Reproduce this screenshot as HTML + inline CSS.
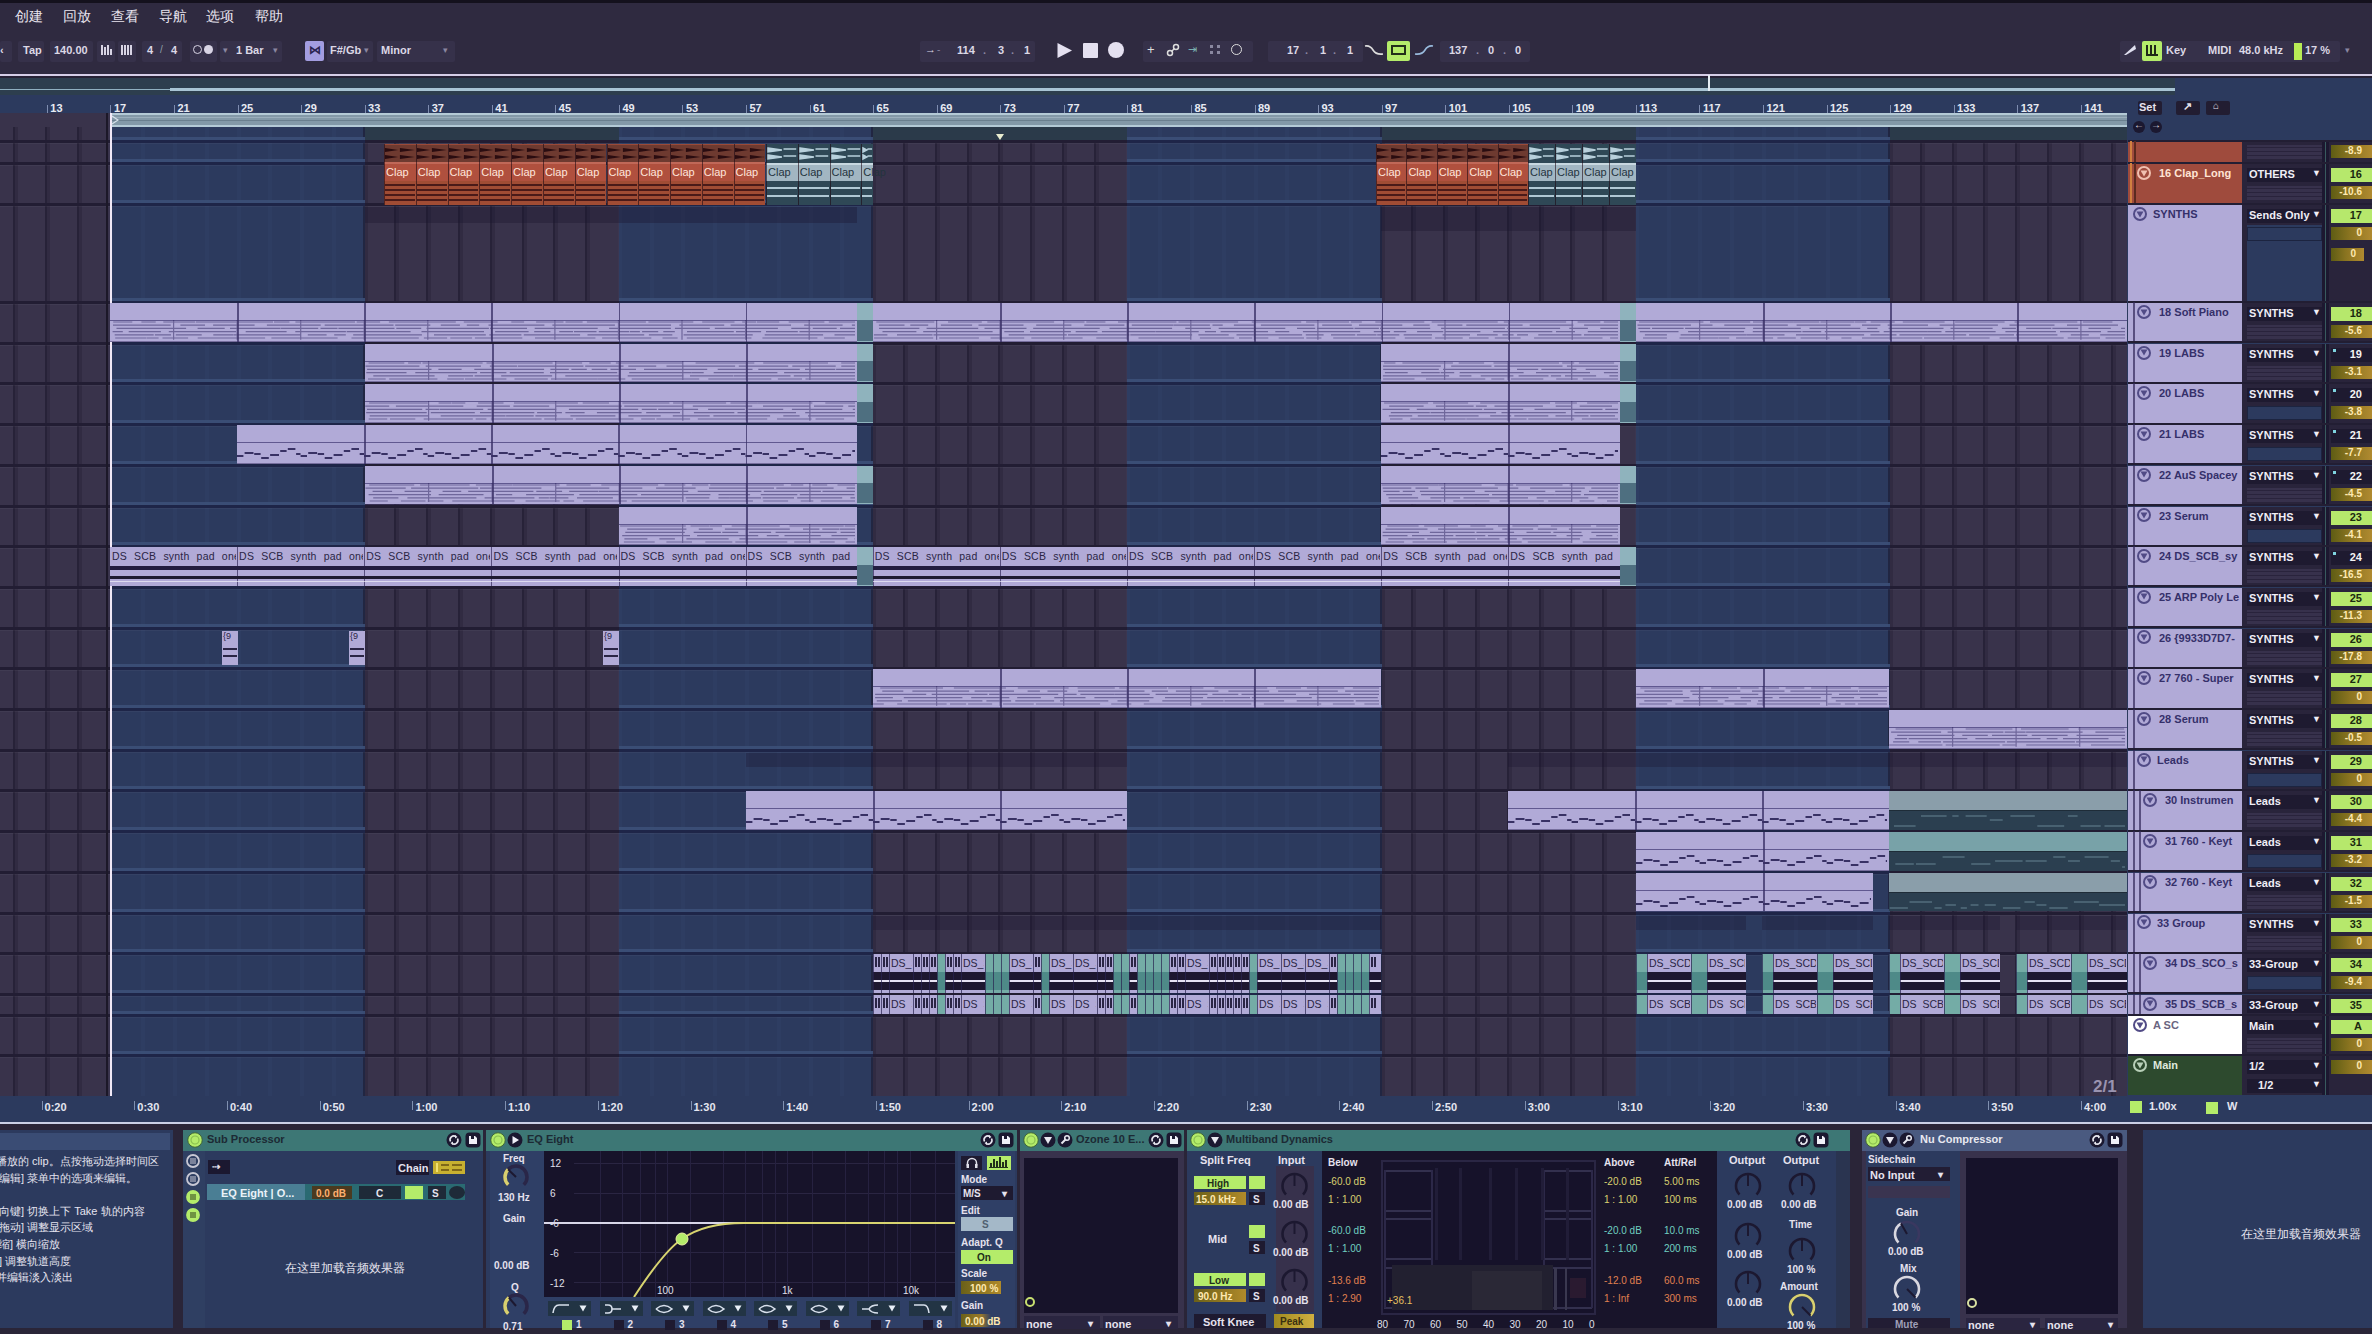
<!DOCTYPE html><html><head><meta charset="utf-8"><style>
html,body{margin:0;padding:0;width:2372px;height:1334px;overflow:hidden;background:#2f2a40;}
body{position:relative;font-family:"Liberation Sans",sans-serif;}
body div{position:absolute;box-sizing:border-box;}
.t{white-space:nowrap;line-height:1;}
svg{position:absolute}
</style></head><body>
<div style="left:0.0px;top:0.0px;width:2372.0px;height:3.0px;background:#14111d;"></div>
<div class="t" style="left:15.0px;top:9.0px;font-size:14px;color:#e8e4ee;font-weight:normal;">创建</div>
<div class="t" style="left:63.0px;top:9.0px;font-size:14px;color:#e8e4ee;font-weight:normal;">回放</div>
<div class="t" style="left:111.0px;top:9.0px;font-size:14px;color:#e8e4ee;font-weight:normal;">查看</div>
<div class="t" style="left:159.0px;top:9.0px;font-size:14px;color:#e8e4ee;font-weight:normal;">导航</div>
<div class="t" style="left:206.0px;top:9.0px;font-size:14px;color:#e8e4ee;font-weight:normal;">选项</div>
<div class="t" style="left:255.0px;top:9.0px;font-size:14px;color:#e8e4ee;font-weight:normal;">帮助</div>
<div style="left:0.0px;top:41.0px;width:12.0px;height:21.0px;background:#36314a;border-radius:2px"></div>
<div class="t" style="left:0.0px;top:45.0px;font-size:11px;color:#dcd8e6;font-weight:bold;">‹</div>
<div style="left:18.0px;top:41.0px;width:26.0px;height:21.0px;background:#36314a;border-radius:2px"></div>
<div class="t" style="left:23.0px;top:45.0px;font-size:11px;color:#dcd8e6;font-weight:bold;">Tap</div>
<div style="left:50.0px;top:41.0px;width:43.0px;height:21.0px;background:#36314a;border-radius:2px"></div>
<div class="t" style="left:54.0px;top:45.0px;font-size:11px;color:#dcd8e6;font-weight:bold;">140.00</div>
<div style="left:97.0px;top:41.0px;width:18.0px;height:21.0px;background:#36314a;border-radius:2px"></div>
<div style="left:101.0px;top:45.0px;width:1.6px;height:10.0px;background:#d8d4e4;"></div>
<div style="left:104.0px;top:47.0px;width:1.6px;height:8.0px;background:#d8d4e4;"></div>
<div style="left:107.0px;top:45.0px;width:1.6px;height:10.0px;background:#d8d4e4;"></div>
<div style="left:110.0px;top:49.0px;width:1.6px;height:6.0px;background:#d8d4e4;"></div>
<div style="left:118.0px;top:41.0px;width:18.0px;height:21.0px;background:#36314a;border-radius:2px"></div>
<div style="left:121.0px;top:45.0px;width:1.6px;height:10.0px;background:#d8d4e4;"></div>
<div style="left:124.0px;top:45.0px;width:1.6px;height:10.0px;background:#d8d4e4;"></div>
<div style="left:127.0px;top:45.0px;width:1.6px;height:10.0px;background:#d8d4e4;"></div>
<div style="left:130.0px;top:45.0px;width:1.6px;height:10.0px;background:#d8d4e4;"></div>
<div style="left:142.0px;top:41.0px;width:40.0px;height:21.0px;background:#36314a;border-radius:2px"></div>
<div class="t" style="left:147.0px;top:45.0px;font-size:11px;color:#dcd8e6;font-weight:bold;">4</div>
<div class="t" style="left:160.0px;top:45.0px;font-size:10px;color:#8fa0a8;font-weight:normal;">/</div>
<div class="t" style="left:171.0px;top:45.0px;font-size:11px;color:#dcd8e6;font-weight:bold;">4</div>
<div style="left:190.0px;top:41.0px;width:27.0px;height:21.0px;background:#36314a;border-radius:2px"></div>
<div style="left:193px;top:45px;width:9px;height:9px;border:1.5px solid #d8d4e4;border-radius:50%"></div>
<div style="left:204.0px;top:45.0px;width:9.0px;height:9.0px;background:#d8d4e4;border-radius:50%"></div>
<div style="left:220.0px;top:41.0px;width:62.0px;height:21.0px;background:#36314a;border-radius:2px"></div>
<div class="t" style="left:223.0px;top:46.0px;font-size:9px;color:#8a86a0;font-weight:normal;">▾</div>
<div class="t" style="left:236.0px;top:45.0px;font-size:11px;color:#dcd8e6;font-weight:bold;">1 Bar</div>
<div class="t" style="left:273.0px;top:46.0px;font-size:9px;color:#8a86a0;font-weight:normal;">▾</div>
<div style="left:305.0px;top:41.0px;width:19.0px;height:20.0px;background:#a39de0;border-radius:2px"></div>
<div class="t" style="left:309.0px;top:44.0px;font-size:12px;color:#2a2450;font-weight:bold;">⋈</div>
<div style="left:327.0px;top:41.0px;width:46.0px;height:21.0px;background:#36314a;border-radius:2px"></div>
<div class="t" style="left:330.0px;top:45.0px;font-size:11px;color:#dcd8e6;font-weight:bold;">F#/Gb</div>
<div class="t" style="left:364.0px;top:46.0px;font-size:9px;color:#8a86a0;font-weight:normal;">▾</div>
<div style="left:377.0px;top:41.0px;width:78.0px;height:21.0px;background:#36314a;border-radius:2px"></div>
<div class="t" style="left:381.0px;top:45.0px;font-size:11px;color:#dcd8e6;font-weight:bold;">Minor</div>
<div class="t" style="left:443.0px;top:46.0px;font-size:9px;color:#8a86a0;font-weight:normal;">▾</div>
<div style="left:920.0px;top:41.0px;width:115.0px;height:21.0px;background:#36314a;border-radius:2px"></div>
<div class="t" style="left:925.0px;top:44.0px;font-size:11px;color:#dcd8e6;font-weight:normal;">→</div>
<div class="t" style="left:937.0px;top:45.0px;font-size:10px;color:#8a86a0;font-weight:normal;">-</div>
<div class="t" style="left:957.0px;top:45.0px;font-size:11px;color:#dcd8e6;font-weight:bold;">114</div>
<div class="t" style="left:983.0px;top:45.0px;font-size:11px;color:#8a86a0;font-weight:bold;">.</div>
<div class="t" style="left:998.0px;top:45.0px;font-size:11px;color:#dcd8e6;font-weight:bold;">3</div>
<div class="t" style="left:1011.0px;top:45.0px;font-size:11px;color:#8a86a0;font-weight:bold;">.</div>
<div class="t" style="left:1024.0px;top:45.0px;font-size:11px;color:#dcd8e6;font-weight:bold;">1</div>
<svg style="position:absolute;left:1056px;top:42px" width="17" height="17"><path d="M1.5 1 L16 8.5 L1.5 16 Z" fill="#e4e0f0"/></svg>
<div style="left:1083.0px;top:43.0px;width:15.0px;height:15.0px;background:#e4e0f0;border-radius:1px"></div>
<div style="left:1108.0px;top:42.0px;width:16.0px;height:16.0px;background:#e4e0f0;border-radius:50%"></div>
<div style="left:1143.0px;top:41.0px;width:110.0px;height:21.0px;background:#36314a;border-radius:2px"></div>
<div class="t" style="left:1147.0px;top:43.0px;font-size:13px;color:#ddd;font-weight:normal;">+</div>
<svg style="position:absolute;left:1166px;top:43px" width="14" height="14"><circle cx="4" cy="10" r="2.5" stroke="#ddd" fill="none" stroke-width="1.5"/><circle cx="10" cy="4" r="2.5" stroke="#ddd" fill="none" stroke-width="1.5"/><path d="M5.5 8.5 L8.5 5.5" stroke="#ddd" stroke-width="1.5"/></svg>
<div class="t" style="left:1188.0px;top:44.0px;font-size:11px;color:#7ab0b0;font-weight:normal;">⇥</div>
<div style="left:1210.0px;top:45.0px;width:3.0px;height:3.0px;background:#8a88a0;"></div>
<div style="left:1217.0px;top:45.0px;width:3.0px;height:3.0px;background:#8a88a0;"></div>
<div style="left:1210.0px;top:51.0px;width:3.0px;height:3.0px;background:#8a88a0;"></div>
<div style="left:1217.0px;top:51.0px;width:3.0px;height:3.0px;background:#8a88a0;"></div>
<div style="left:1231px;top:44px;width:11px;height:11px;border:1.5px solid #ddd;border-radius:50%"></div>
<div style="left:1268.0px;top:41.0px;width:95.0px;height:21.0px;background:#36314a;border-radius:2px"></div>
<div class="t" style="left:1287.0px;top:45.0px;font-size:11px;color:#dcd8e6;font-weight:bold;">17</div>
<div class="t" style="left:1305.0px;top:45.0px;font-size:11px;color:#8a86a0;font-weight:bold;">.</div>
<div class="t" style="left:1320.0px;top:45.0px;font-size:11px;color:#dcd8e6;font-weight:bold;">1</div>
<div class="t" style="left:1333.0px;top:45.0px;font-size:11px;color:#8a86a0;font-weight:bold;">.</div>
<div class="t" style="left:1347.0px;top:45.0px;font-size:11px;color:#dcd8e6;font-weight:bold;">1</div>
<svg style="position:absolute;left:1364px;top:43px" width="20" height="14"><path d="M1 3 Q6 2 9 7 Q12 12 19 11" stroke="#ddd" stroke-width="1.6" fill="none"/></svg>
<div style="left:1387.0px;top:41.0px;width:23.0px;height:20.0px;background:#b4ec6a;border-radius:2px"></div>
<div style="left:1391.0px;top:45.0px;width:15.0px;height:10.0px;background:#22301a;"></div>
<div style="left:1393.0px;top:47.0px;width:11.0px;height:6.0px;background:#b4ec6a;"></div>
<svg style="position:absolute;left:1414px;top:43px" width="20" height="14"><path d="M1 11 Q8 12 11 7 Q14 2 19 3" stroke="#9bd" stroke-width="1.6" fill="none"/></svg>
<div style="left:1440.0px;top:41.0px;width:90.0px;height:21.0px;background:#36314a;border-radius:2px"></div>
<div class="t" style="left:1449.0px;top:45.0px;font-size:11px;color:#dcd8e6;font-weight:bold;">137</div>
<div class="t" style="left:1476.0px;top:45.0px;font-size:11px;color:#8a86a0;font-weight:bold;">.</div>
<div class="t" style="left:1488.0px;top:45.0px;font-size:11px;color:#dcd8e6;font-weight:bold;">0</div>
<div class="t" style="left:1503.0px;top:45.0px;font-size:11px;color:#8a86a0;font-weight:bold;">.</div>
<div class="t" style="left:1515.0px;top:45.0px;font-size:11px;color:#dcd8e6;font-weight:bold;">0</div>
<div style="left:2120.0px;top:41.0px;width:220.0px;height:21.0px;background:#36314a;border-radius:2px"></div>
<svg style="position:absolute;left:2122px;top:43px" width="16" height="14"><path d="M2 12 L13 2 L14 6 L4 12Z" fill="#e0e0f0"/></svg>
<div style="left:2142.0px;top:41.0px;width:20.0px;height:20.0px;background:#b4ec6a;border-radius:2px"></div>
<div style="left:2146.0px;top:45.0px;width:2.0px;height:11.0px;background:#1f2a18;"></div>
<div style="left:2150.0px;top:45.0px;width:2.0px;height:11.0px;background:#1f2a18;"></div>
<div style="left:2154.0px;top:45.0px;width:2.0px;height:11.0px;background:#1f2a18;"></div>
<div style="left:2146.0px;top:54.0px;width:12.0px;height:2.0px;background:#1f2a18;"></div>
<div class="t" style="left:2166.0px;top:45.0px;font-size:11px;color:#dcd8e6;font-weight:bold;">Key</div>
<div class="t" style="left:2208.0px;top:45.0px;font-size:11px;color:#dcd8e6;font-weight:bold;">MIDI</div>
<div class="t" style="left:2239.0px;top:45.0px;font-size:11px;color:#dcd8e6;font-weight:bold;">48.0 kHz</div>
<div style="left:2294.0px;top:43.0px;width:8.0px;height:17.0px;background:#b8ec55;"></div>
<div class="t" style="left:2305.0px;top:45.0px;font-size:11px;color:#dcd8e6;font-weight:bold;">17 %</div>
<div class="t" style="left:2345.0px;top:46.0px;font-size:9px;color:#8a86a0;font-weight:normal;">▾</div>
<div style="left:0.0px;top:74.0px;width:2372.0px;height:2.0px;background:#d5cde6;"></div>
<div style="left:0.0px;top:76.0px;width:2372.0px;height:2.0px;background:#262135;"></div>
<div style="left:0.0px;top:78.0px;width:2175.0px;height:17.0px;background:#2d3e4e;"></div>
<div style="left:2175.0px;top:78.0px;width:197.0px;height:17.0px;background:#2c3a5e;"></div>
<div style="left:0.0px;top:88.5px;width:170.0px;height:1.5px;background:#8fb0c0;"></div>
<div style="left:170.0px;top:88.0px;width:2005.0px;height:2.5px;background:#a8c4d4;"></div>
<div style="left:1708.0px;top:75.0px;width:2.0px;height:16.0px;background:#e6eef4;"></div>
<div style="left:0.0px;top:95.0px;width:2127.0px;height:18.0px;background:#2c3a5e;"></div>
<div style="left:46.8px;top:105.0px;width:1.0px;height:8.0px;background:#7f8db0;"></div>
<div class="t" style="left:50.3px;top:102.5px;font-size:11px;color:#e8eaf2;font-weight:bold;">13</div>
<div style="left:110.4px;top:105.0px;width:1.0px;height:8.0px;background:#7f8db0;"></div>
<div class="t" style="left:113.9px;top:102.5px;font-size:11px;color:#e8eaf2;font-weight:bold;">17</div>
<div style="left:174.0px;top:105.0px;width:1.0px;height:8.0px;background:#7f8db0;"></div>
<div class="t" style="left:177.5px;top:102.5px;font-size:11px;color:#e8eaf2;font-weight:bold;">21</div>
<div style="left:237.5px;top:105.0px;width:1.0px;height:8.0px;background:#7f8db0;"></div>
<div class="t" style="left:241.0px;top:102.5px;font-size:11px;color:#e8eaf2;font-weight:bold;">25</div>
<div style="left:301.1px;top:105.0px;width:1.0px;height:8.0px;background:#7f8db0;"></div>
<div class="t" style="left:304.6px;top:102.5px;font-size:11px;color:#e8eaf2;font-weight:bold;">29</div>
<div style="left:364.6px;top:105.0px;width:1.0px;height:8.0px;background:#7f8db0;"></div>
<div class="t" style="left:368.1px;top:102.5px;font-size:11px;color:#e8eaf2;font-weight:bold;">33</div>
<div style="left:428.2px;top:105.0px;width:1.0px;height:8.0px;background:#7f8db0;"></div>
<div class="t" style="left:431.7px;top:102.5px;font-size:11px;color:#e8eaf2;font-weight:bold;">37</div>
<div style="left:491.8px;top:105.0px;width:1.0px;height:8.0px;background:#7f8db0;"></div>
<div class="t" style="left:495.3px;top:102.5px;font-size:11px;color:#e8eaf2;font-weight:bold;">41</div>
<div style="left:555.3px;top:105.0px;width:1.0px;height:8.0px;background:#7f8db0;"></div>
<div class="t" style="left:558.8px;top:102.5px;font-size:11px;color:#e8eaf2;font-weight:bold;">45</div>
<div style="left:618.9px;top:105.0px;width:1.0px;height:8.0px;background:#7f8db0;"></div>
<div class="t" style="left:622.4px;top:102.5px;font-size:11px;color:#e8eaf2;font-weight:bold;">49</div>
<div style="left:682.4px;top:105.0px;width:1.0px;height:8.0px;background:#7f8db0;"></div>
<div class="t" style="left:685.9px;top:102.5px;font-size:11px;color:#e8eaf2;font-weight:bold;">53</div>
<div style="left:746.0px;top:105.0px;width:1.0px;height:8.0px;background:#7f8db0;"></div>
<div class="t" style="left:749.5px;top:102.5px;font-size:11px;color:#e8eaf2;font-weight:bold;">57</div>
<div style="left:809.6px;top:105.0px;width:1.0px;height:8.0px;background:#7f8db0;"></div>
<div class="t" style="left:813.1px;top:102.5px;font-size:11px;color:#e8eaf2;font-weight:bold;">61</div>
<div style="left:873.1px;top:105.0px;width:1.0px;height:8.0px;background:#7f8db0;"></div>
<div class="t" style="left:876.6px;top:102.5px;font-size:11px;color:#e8eaf2;font-weight:bold;">65</div>
<div style="left:936.7px;top:105.0px;width:1.0px;height:8.0px;background:#7f8db0;"></div>
<div class="t" style="left:940.2px;top:102.5px;font-size:11px;color:#e8eaf2;font-weight:bold;">69</div>
<div style="left:1000.2px;top:105.0px;width:1.0px;height:8.0px;background:#7f8db0;"></div>
<div class="t" style="left:1003.7px;top:102.5px;font-size:11px;color:#e8eaf2;font-weight:bold;">73</div>
<div style="left:1063.8px;top:105.0px;width:1.0px;height:8.0px;background:#7f8db0;"></div>
<div class="t" style="left:1067.3px;top:102.5px;font-size:11px;color:#e8eaf2;font-weight:bold;">77</div>
<div style="left:1127.4px;top:105.0px;width:1.0px;height:8.0px;background:#7f8db0;"></div>
<div class="t" style="left:1130.9px;top:102.5px;font-size:11px;color:#e8eaf2;font-weight:bold;">81</div>
<div style="left:1190.9px;top:105.0px;width:1.0px;height:8.0px;background:#7f8db0;"></div>
<div class="t" style="left:1194.4px;top:102.5px;font-size:11px;color:#e8eaf2;font-weight:bold;">85</div>
<div style="left:1254.5px;top:105.0px;width:1.0px;height:8.0px;background:#7f8db0;"></div>
<div class="t" style="left:1258.0px;top:102.5px;font-size:11px;color:#e8eaf2;font-weight:bold;">89</div>
<div style="left:1318.0px;top:105.0px;width:1.0px;height:8.0px;background:#7f8db0;"></div>
<div class="t" style="left:1321.5px;top:102.5px;font-size:11px;color:#e8eaf2;font-weight:bold;">93</div>
<div style="left:1381.6px;top:105.0px;width:1.0px;height:8.0px;background:#7f8db0;"></div>
<div class="t" style="left:1385.1px;top:102.5px;font-size:11px;color:#e8eaf2;font-weight:bold;">97</div>
<div style="left:1445.2px;top:105.0px;width:1.0px;height:8.0px;background:#7f8db0;"></div>
<div class="t" style="left:1448.7px;top:102.5px;font-size:11px;color:#e8eaf2;font-weight:bold;">101</div>
<div style="left:1508.7px;top:105.0px;width:1.0px;height:8.0px;background:#7f8db0;"></div>
<div class="t" style="left:1512.2px;top:102.5px;font-size:11px;color:#e8eaf2;font-weight:bold;">105</div>
<div style="left:1572.3px;top:105.0px;width:1.0px;height:8.0px;background:#7f8db0;"></div>
<div class="t" style="left:1575.8px;top:102.5px;font-size:11px;color:#e8eaf2;font-weight:bold;">109</div>
<div style="left:1635.8px;top:105.0px;width:1.0px;height:8.0px;background:#7f8db0;"></div>
<div class="t" style="left:1639.3px;top:102.5px;font-size:11px;color:#e8eaf2;font-weight:bold;">113</div>
<div style="left:1699.4px;top:105.0px;width:1.0px;height:8.0px;background:#7f8db0;"></div>
<div class="t" style="left:1702.9px;top:102.5px;font-size:11px;color:#e8eaf2;font-weight:bold;">117</div>
<div style="left:1763.0px;top:105.0px;width:1.0px;height:8.0px;background:#7f8db0;"></div>
<div class="t" style="left:1766.5px;top:102.5px;font-size:11px;color:#e8eaf2;font-weight:bold;">121</div>
<div style="left:1826.5px;top:105.0px;width:1.0px;height:8.0px;background:#7f8db0;"></div>
<div class="t" style="left:1830.0px;top:102.5px;font-size:11px;color:#e8eaf2;font-weight:bold;">125</div>
<div style="left:1890.1px;top:105.0px;width:1.0px;height:8.0px;background:#7f8db0;"></div>
<div class="t" style="left:1893.6px;top:102.5px;font-size:11px;color:#e8eaf2;font-weight:bold;">129</div>
<div style="left:1953.6px;top:105.0px;width:1.0px;height:8.0px;background:#7f8db0;"></div>
<div class="t" style="left:1957.1px;top:102.5px;font-size:11px;color:#e8eaf2;font-weight:bold;">133</div>
<div style="left:2017.2px;top:105.0px;width:1.0px;height:8.0px;background:#7f8db0;"></div>
<div class="t" style="left:2020.7px;top:102.5px;font-size:11px;color:#e8eaf2;font-weight:bold;">137</div>
<div style="left:2080.8px;top:105.0px;width:1.0px;height:8.0px;background:#7f8db0;"></div>
<div class="t" style="left:2084.3px;top:102.5px;font-size:11px;color:#e8eaf2;font-weight:bold;">141</div>
<div style="left:110.0px;top:113.0px;width:2018.0px;height:14.0px;background:#8399a8;"></div>
<div style="left:110.0px;top:113.0px;width:2018.0px;height:2.0px;background:#b4cad6;"></div>
<div style="left:110.0px;top:125.0px;width:2018.0px;height:2.0px;background:#b4cad6;"></div>
<div style="left:110.0px;top:117.0px;width:2018.0px;height:1.0px;background:rgba(200,215,225,0.35);"></div>
<div style="left:110.0px;top:120.0px;width:2018.0px;height:1.0px;background:rgba(60,80,95,0.35);"></div>
<div style="left:0.0px;top:113.0px;width:110.0px;height:14.0px;background:#39334b;"></div>
<div style="left:0.0px;top:127.0px;width:2127.0px;height:969.0px;background:#39334b;"></div>
<div style="left:110.4px;top:127.0px;width:254.2px;height:969.0px;background:#2c3a5e;"></div>
<div style="left:618.9px;top:127.0px;width:254.2px;height:969.0px;background:#2c3a5e;"></div>
<div style="left:1127.4px;top:127.0px;width:254.2px;height:969.0px;background:#2c3a5e;"></div>
<div style="left:1635.8px;top:127.0px;width:254.2px;height:969.0px;background:#2c3a5e;"></div>
<div style="left:13.1px;top:127.0px;width:2.0px;height:969.0px;background:rgba(22,18,38,0.5);"></div>
<div style="left:15.1px;top:127.0px;width:3.0px;height:969.0px;background:rgba(22,18,38,0.22);"></div>
<div style="left:44.8px;top:127.0px;width:2.0px;height:969.0px;background:rgba(22,18,38,0.5);"></div>
<div style="left:46.8px;top:127.0px;width:3.0px;height:969.0px;background:rgba(22,18,38,0.22);"></div>
<div style="left:76.6px;top:127.0px;width:2.0px;height:969.0px;background:rgba(22,18,38,0.5);"></div>
<div style="left:78.6px;top:127.0px;width:3.0px;height:969.0px;background:rgba(22,18,38,0.22);"></div>
<div style="left:109.4px;top:127.0px;width:4.0px;height:969.0px;background:rgba(90,120,170,0.05);"></div>
<div style="left:141.2px;top:127.0px;width:4.0px;height:969.0px;background:rgba(90,120,170,0.05);"></div>
<div style="left:173.0px;top:127.0px;width:4.0px;height:969.0px;background:rgba(90,120,170,0.05);"></div>
<div style="left:204.7px;top:127.0px;width:4.0px;height:969.0px;background:rgba(90,120,170,0.05);"></div>
<div style="left:236.5px;top:127.0px;width:4.0px;height:969.0px;background:rgba(90,120,170,0.05);"></div>
<div style="left:268.3px;top:127.0px;width:4.0px;height:969.0px;background:rgba(90,120,170,0.05);"></div>
<div style="left:300.1px;top:127.0px;width:4.0px;height:969.0px;background:rgba(90,120,170,0.05);"></div>
<div style="left:331.9px;top:127.0px;width:4.0px;height:969.0px;background:rgba(90,120,170,0.05);"></div>
<div style="left:362.6px;top:127.0px;width:2.0px;height:969.0px;background:rgba(22,18,38,0.5);"></div>
<div style="left:364.6px;top:127.0px;width:3.0px;height:969.0px;background:rgba(22,18,38,0.22);"></div>
<div style="left:394.4px;top:127.0px;width:2.0px;height:969.0px;background:rgba(22,18,38,0.5);"></div>
<div style="left:396.4px;top:127.0px;width:3.0px;height:969.0px;background:rgba(22,18,38,0.22);"></div>
<div style="left:426.2px;top:127.0px;width:2.0px;height:969.0px;background:rgba(22,18,38,0.5);"></div>
<div style="left:428.2px;top:127.0px;width:3.0px;height:969.0px;background:rgba(22,18,38,0.22);"></div>
<div style="left:458.0px;top:127.0px;width:2.0px;height:969.0px;background:rgba(22,18,38,0.5);"></div>
<div style="left:460.0px;top:127.0px;width:3.0px;height:969.0px;background:rgba(22,18,38,0.22);"></div>
<div style="left:489.8px;top:127.0px;width:2.0px;height:969.0px;background:rgba(22,18,38,0.5);"></div>
<div style="left:491.8px;top:127.0px;width:3.0px;height:969.0px;background:rgba(22,18,38,0.22);"></div>
<div style="left:521.5px;top:127.0px;width:2.0px;height:969.0px;background:rgba(22,18,38,0.5);"></div>
<div style="left:523.5px;top:127.0px;width:3.0px;height:969.0px;background:rgba(22,18,38,0.22);"></div>
<div style="left:553.3px;top:127.0px;width:2.0px;height:969.0px;background:rgba(22,18,38,0.5);"></div>
<div style="left:555.3px;top:127.0px;width:3.0px;height:969.0px;background:rgba(22,18,38,0.22);"></div>
<div style="left:585.1px;top:127.0px;width:2.0px;height:969.0px;background:rgba(22,18,38,0.5);"></div>
<div style="left:587.1px;top:127.0px;width:3.0px;height:969.0px;background:rgba(22,18,38,0.22);"></div>
<div style="left:617.9px;top:127.0px;width:4.0px;height:969.0px;background:rgba(90,120,170,0.05);"></div>
<div style="left:649.7px;top:127.0px;width:4.0px;height:969.0px;background:rgba(90,120,170,0.05);"></div>
<div style="left:681.4px;top:127.0px;width:4.0px;height:969.0px;background:rgba(90,120,170,0.05);"></div>
<div style="left:713.2px;top:127.0px;width:4.0px;height:969.0px;background:rgba(90,120,170,0.05);"></div>
<div style="left:745.0px;top:127.0px;width:4.0px;height:969.0px;background:rgba(90,120,170,0.05);"></div>
<div style="left:776.8px;top:127.0px;width:4.0px;height:969.0px;background:rgba(90,120,170,0.05);"></div>
<div style="left:808.6px;top:127.0px;width:4.0px;height:969.0px;background:rgba(90,120,170,0.05);"></div>
<div style="left:840.3px;top:127.0px;width:4.0px;height:969.0px;background:rgba(90,120,170,0.05);"></div>
<div style="left:871.1px;top:127.0px;width:2.0px;height:969.0px;background:rgba(22,18,38,0.5);"></div>
<div style="left:873.1px;top:127.0px;width:3.0px;height:969.0px;background:rgba(22,18,38,0.22);"></div>
<div style="left:902.9px;top:127.0px;width:2.0px;height:969.0px;background:rgba(22,18,38,0.5);"></div>
<div style="left:904.9px;top:127.0px;width:3.0px;height:969.0px;background:rgba(22,18,38,0.22);"></div>
<div style="left:934.7px;top:127.0px;width:2.0px;height:969.0px;background:rgba(22,18,38,0.5);"></div>
<div style="left:936.7px;top:127.0px;width:3.0px;height:969.0px;background:rgba(22,18,38,0.22);"></div>
<div style="left:966.5px;top:127.0px;width:2.0px;height:969.0px;background:rgba(22,18,38,0.5);"></div>
<div style="left:968.5px;top:127.0px;width:3.0px;height:969.0px;background:rgba(22,18,38,0.22);"></div>
<div style="left:998.2px;top:127.0px;width:2.0px;height:969.0px;background:rgba(22,18,38,0.5);"></div>
<div style="left:1000.2px;top:127.0px;width:3.0px;height:969.0px;background:rgba(22,18,38,0.22);"></div>
<div style="left:1030.0px;top:127.0px;width:2.0px;height:969.0px;background:rgba(22,18,38,0.5);"></div>
<div style="left:1032.0px;top:127.0px;width:3.0px;height:969.0px;background:rgba(22,18,38,0.22);"></div>
<div style="left:1061.8px;top:127.0px;width:2.0px;height:969.0px;background:rgba(22,18,38,0.5);"></div>
<div style="left:1063.8px;top:127.0px;width:3.0px;height:969.0px;background:rgba(22,18,38,0.22);"></div>
<div style="left:1093.6px;top:127.0px;width:2.0px;height:969.0px;background:rgba(22,18,38,0.5);"></div>
<div style="left:1095.6px;top:127.0px;width:3.0px;height:969.0px;background:rgba(22,18,38,0.22);"></div>
<div style="left:1126.4px;top:127.0px;width:4.0px;height:969.0px;background:rgba(90,120,170,0.05);"></div>
<div style="left:1158.1px;top:127.0px;width:4.0px;height:969.0px;background:rgba(90,120,170,0.05);"></div>
<div style="left:1189.9px;top:127.0px;width:4.0px;height:969.0px;background:rgba(90,120,170,0.05);"></div>
<div style="left:1221.7px;top:127.0px;width:4.0px;height:969.0px;background:rgba(90,120,170,0.05);"></div>
<div style="left:1253.5px;top:127.0px;width:4.0px;height:969.0px;background:rgba(90,120,170,0.05);"></div>
<div style="left:1285.3px;top:127.0px;width:4.0px;height:969.0px;background:rgba(90,120,170,0.05);"></div>
<div style="left:1317.0px;top:127.0px;width:4.0px;height:969.0px;background:rgba(90,120,170,0.05);"></div>
<div style="left:1348.8px;top:127.0px;width:4.0px;height:969.0px;background:rgba(90,120,170,0.05);"></div>
<div style="left:1379.6px;top:127.0px;width:2.0px;height:969.0px;background:rgba(22,18,38,0.5);"></div>
<div style="left:1381.6px;top:127.0px;width:3.0px;height:969.0px;background:rgba(22,18,38,0.22);"></div>
<div style="left:1411.4px;top:127.0px;width:2.0px;height:969.0px;background:rgba(22,18,38,0.5);"></div>
<div style="left:1413.4px;top:127.0px;width:3.0px;height:969.0px;background:rgba(22,18,38,0.22);"></div>
<div style="left:1443.2px;top:127.0px;width:2.0px;height:969.0px;background:rgba(22,18,38,0.5);"></div>
<div style="left:1445.2px;top:127.0px;width:3.0px;height:969.0px;background:rgba(22,18,38,0.22);"></div>
<div style="left:1474.9px;top:127.0px;width:2.0px;height:969.0px;background:rgba(22,18,38,0.5);"></div>
<div style="left:1476.9px;top:127.0px;width:3.0px;height:969.0px;background:rgba(22,18,38,0.22);"></div>
<div style="left:1506.7px;top:127.0px;width:2.0px;height:969.0px;background:rgba(22,18,38,0.5);"></div>
<div style="left:1508.7px;top:127.0px;width:3.0px;height:969.0px;background:rgba(22,18,38,0.22);"></div>
<div style="left:1538.5px;top:127.0px;width:2.0px;height:969.0px;background:rgba(22,18,38,0.5);"></div>
<div style="left:1540.5px;top:127.0px;width:3.0px;height:969.0px;background:rgba(22,18,38,0.22);"></div>
<div style="left:1570.3px;top:127.0px;width:2.0px;height:969.0px;background:rgba(22,18,38,0.5);"></div>
<div style="left:1572.3px;top:127.0px;width:3.0px;height:969.0px;background:rgba(22,18,38,0.22);"></div>
<div style="left:1602.1px;top:127.0px;width:2.0px;height:969.0px;background:rgba(22,18,38,0.5);"></div>
<div style="left:1604.1px;top:127.0px;width:3.0px;height:969.0px;background:rgba(22,18,38,0.22);"></div>
<div style="left:1634.8px;top:127.0px;width:4.0px;height:969.0px;background:rgba(90,120,170,0.05);"></div>
<div style="left:1666.6px;top:127.0px;width:4.0px;height:969.0px;background:rgba(90,120,170,0.05);"></div>
<div style="left:1698.4px;top:127.0px;width:4.0px;height:969.0px;background:rgba(90,120,170,0.05);"></div>
<div style="left:1730.2px;top:127.0px;width:4.0px;height:969.0px;background:rgba(90,120,170,0.05);"></div>
<div style="left:1762.0px;top:127.0px;width:4.0px;height:969.0px;background:rgba(90,120,170,0.05);"></div>
<div style="left:1793.7px;top:127.0px;width:4.0px;height:969.0px;background:rgba(90,120,170,0.05);"></div>
<div style="left:1825.5px;top:127.0px;width:4.0px;height:969.0px;background:rgba(90,120,170,0.05);"></div>
<div style="left:1857.3px;top:127.0px;width:4.0px;height:969.0px;background:rgba(90,120,170,0.05);"></div>
<div style="left:1888.1px;top:127.0px;width:2.0px;height:969.0px;background:rgba(22,18,38,0.5);"></div>
<div style="left:1890.1px;top:127.0px;width:3.0px;height:969.0px;background:rgba(22,18,38,0.22);"></div>
<div style="left:1919.9px;top:127.0px;width:2.0px;height:969.0px;background:rgba(22,18,38,0.5);"></div>
<div style="left:1921.9px;top:127.0px;width:3.0px;height:969.0px;background:rgba(22,18,38,0.22);"></div>
<div style="left:1951.6px;top:127.0px;width:2.0px;height:969.0px;background:rgba(22,18,38,0.5);"></div>
<div style="left:1953.6px;top:127.0px;width:3.0px;height:969.0px;background:rgba(22,18,38,0.22);"></div>
<div style="left:1983.4px;top:127.0px;width:2.0px;height:969.0px;background:rgba(22,18,38,0.5);"></div>
<div style="left:1985.4px;top:127.0px;width:3.0px;height:969.0px;background:rgba(22,18,38,0.22);"></div>
<div style="left:2015.2px;top:127.0px;width:2.0px;height:969.0px;background:rgba(22,18,38,0.5);"></div>
<div style="left:2017.2px;top:127.0px;width:3.0px;height:969.0px;background:rgba(22,18,38,0.22);"></div>
<div style="left:2047.0px;top:127.0px;width:2.0px;height:969.0px;background:rgba(22,18,38,0.5);"></div>
<div style="left:2049.0px;top:127.0px;width:3.0px;height:969.0px;background:rgba(22,18,38,0.22);"></div>
<div style="left:2078.8px;top:127.0px;width:2.0px;height:969.0px;background:rgba(22,18,38,0.5);"></div>
<div style="left:2080.8px;top:127.0px;width:3.0px;height:969.0px;background:rgba(22,18,38,0.22);"></div>
<div style="left:2110.5px;top:127.0px;width:2.0px;height:969.0px;background:rgba(22,18,38,0.5);"></div>
<div style="left:2112.5px;top:127.0px;width:3.0px;height:969.0px;background:rgba(22,18,38,0.22);"></div>
<div style="left:364.6px;top:127.0px;width:254.2px;height:14.0px;background:#2b3a4a;"></div>
<div style="left:873.1px;top:127.0px;width:254.2px;height:14.0px;background:#2b3a4a;"></div>
<div style="left:1381.6px;top:127.0px;width:254.2px;height:14.0px;background:#2b3a4a;"></div>
<div style="left:1890.1px;top:127.0px;width:236.9px;height:14.0px;background:#2b3a4a;"></div>
<div style="left:0.0px;top:140.0px;width:2127.0px;height:3.0px;background:#221d33;"></div>
<div style="left:0.0px;top:143.0px;width:2127.0px;height:1.0px;background:rgba(255,255,255,0.04);"></div>
<div style="left:110.4px;top:137.0px;width:254.2px;height:3.0px;background:rgba(60,80,120,0.9);"></div>
<div style="left:110.4px;top:140.0px;width:254.2px;height:3.0px;background:#1e2548;"></div>
<div style="left:618.9px;top:137.0px;width:254.2px;height:3.0px;background:rgba(60,80,120,0.9);"></div>
<div style="left:618.9px;top:140.0px;width:254.2px;height:3.0px;background:#1e2548;"></div>
<div style="left:1127.4px;top:137.0px;width:254.2px;height:3.0px;background:rgba(60,80,120,0.9);"></div>
<div style="left:1127.4px;top:140.0px;width:254.2px;height:3.0px;background:#1e2548;"></div>
<div style="left:1635.8px;top:137.0px;width:254.2px;height:3.0px;background:rgba(60,80,120,0.9);"></div>
<div style="left:1635.8px;top:140.0px;width:254.2px;height:3.0px;background:#1e2548;"></div>
<div style="left:0.0px;top:162.0px;width:2127.0px;height:3.0px;background:#221d33;"></div>
<div style="left:0.0px;top:165.0px;width:2127.0px;height:1.0px;background:rgba(255,255,255,0.04);"></div>
<div style="left:110.4px;top:159.0px;width:254.2px;height:3.0px;background:rgba(60,80,120,0.9);"></div>
<div style="left:110.4px;top:162.0px;width:254.2px;height:3.0px;background:#1e2548;"></div>
<div style="left:618.9px;top:159.0px;width:254.2px;height:3.0px;background:rgba(60,80,120,0.9);"></div>
<div style="left:618.9px;top:162.0px;width:254.2px;height:3.0px;background:#1e2548;"></div>
<div style="left:1127.4px;top:159.0px;width:254.2px;height:3.0px;background:rgba(60,80,120,0.9);"></div>
<div style="left:1127.4px;top:162.0px;width:254.2px;height:3.0px;background:#1e2548;"></div>
<div style="left:1635.8px;top:159.0px;width:254.2px;height:3.0px;background:rgba(60,80,120,0.9);"></div>
<div style="left:1635.8px;top:162.0px;width:254.2px;height:3.0px;background:#1e2548;"></div>
<div style="left:0.0px;top:203.0px;width:2127.0px;height:3.0px;background:#221d33;"></div>
<div style="left:0.0px;top:206.0px;width:2127.0px;height:1.0px;background:rgba(255,255,255,0.04);"></div>
<div style="left:110.4px;top:200.0px;width:254.2px;height:3.0px;background:rgba(60,80,120,0.9);"></div>
<div style="left:110.4px;top:203.0px;width:254.2px;height:3.0px;background:#1e2548;"></div>
<div style="left:618.9px;top:200.0px;width:254.2px;height:3.0px;background:rgba(60,80,120,0.9);"></div>
<div style="left:618.9px;top:203.0px;width:254.2px;height:3.0px;background:#1e2548;"></div>
<div style="left:1127.4px;top:200.0px;width:254.2px;height:3.0px;background:rgba(60,80,120,0.9);"></div>
<div style="left:1127.4px;top:203.0px;width:254.2px;height:3.0px;background:#1e2548;"></div>
<div style="left:1635.8px;top:200.0px;width:254.2px;height:3.0px;background:rgba(60,80,120,0.9);"></div>
<div style="left:1635.8px;top:203.0px;width:254.2px;height:3.0px;background:#1e2548;"></div>
<div style="left:0.0px;top:301.0px;width:2127.0px;height:3.0px;background:#221d33;"></div>
<div style="left:0.0px;top:304.0px;width:2127.0px;height:1.0px;background:rgba(255,255,255,0.04);"></div>
<div style="left:110.4px;top:298.0px;width:254.2px;height:3.0px;background:rgba(60,80,120,0.9);"></div>
<div style="left:110.4px;top:301.0px;width:254.2px;height:3.0px;background:#1e2548;"></div>
<div style="left:618.9px;top:298.0px;width:254.2px;height:3.0px;background:rgba(60,80,120,0.9);"></div>
<div style="left:618.9px;top:301.0px;width:254.2px;height:3.0px;background:#1e2548;"></div>
<div style="left:1127.4px;top:298.0px;width:254.2px;height:3.0px;background:rgba(60,80,120,0.9);"></div>
<div style="left:1127.4px;top:301.0px;width:254.2px;height:3.0px;background:#1e2548;"></div>
<div style="left:1635.8px;top:298.0px;width:254.2px;height:3.0px;background:rgba(60,80,120,0.9);"></div>
<div style="left:1635.8px;top:301.0px;width:254.2px;height:3.0px;background:#1e2548;"></div>
<div style="left:0.0px;top:341.7px;width:2127.0px;height:3.0px;background:#221d33;"></div>
<div style="left:0.0px;top:344.7px;width:2127.0px;height:1.0px;background:rgba(255,255,255,0.04);"></div>
<div style="left:110.4px;top:338.7px;width:254.2px;height:3.0px;background:rgba(60,80,120,0.9);"></div>
<div style="left:110.4px;top:341.7px;width:254.2px;height:3.0px;background:#1e2548;"></div>
<div style="left:618.9px;top:338.7px;width:254.2px;height:3.0px;background:rgba(60,80,120,0.9);"></div>
<div style="left:618.9px;top:341.7px;width:254.2px;height:3.0px;background:#1e2548;"></div>
<div style="left:1127.4px;top:338.7px;width:254.2px;height:3.0px;background:rgba(60,80,120,0.9);"></div>
<div style="left:1127.4px;top:341.7px;width:254.2px;height:3.0px;background:#1e2548;"></div>
<div style="left:1635.8px;top:338.7px;width:254.2px;height:3.0px;background:rgba(60,80,120,0.9);"></div>
<div style="left:1635.8px;top:341.7px;width:254.2px;height:3.0px;background:#1e2548;"></div>
<div style="left:0.0px;top:382.4px;width:2127.0px;height:3.0px;background:#221d33;"></div>
<div style="left:0.0px;top:385.4px;width:2127.0px;height:1.0px;background:rgba(255,255,255,0.04);"></div>
<div style="left:110.4px;top:379.4px;width:254.2px;height:3.0px;background:rgba(60,80,120,0.9);"></div>
<div style="left:110.4px;top:382.4px;width:254.2px;height:3.0px;background:#1e2548;"></div>
<div style="left:618.9px;top:379.4px;width:254.2px;height:3.0px;background:rgba(60,80,120,0.9);"></div>
<div style="left:618.9px;top:382.4px;width:254.2px;height:3.0px;background:#1e2548;"></div>
<div style="left:1127.4px;top:379.4px;width:254.2px;height:3.0px;background:rgba(60,80,120,0.9);"></div>
<div style="left:1127.4px;top:382.4px;width:254.2px;height:3.0px;background:#1e2548;"></div>
<div style="left:1635.8px;top:379.4px;width:254.2px;height:3.0px;background:rgba(60,80,120,0.9);"></div>
<div style="left:1635.8px;top:382.4px;width:254.2px;height:3.0px;background:#1e2548;"></div>
<div style="left:0.0px;top:423.1px;width:2127.0px;height:3.0px;background:#221d33;"></div>
<div style="left:0.0px;top:426.1px;width:2127.0px;height:1.0px;background:rgba(255,255,255,0.04);"></div>
<div style="left:110.4px;top:420.1px;width:254.2px;height:3.0px;background:rgba(60,80,120,0.9);"></div>
<div style="left:110.4px;top:423.1px;width:254.2px;height:3.0px;background:#1e2548;"></div>
<div style="left:618.9px;top:420.1px;width:254.2px;height:3.0px;background:rgba(60,80,120,0.9);"></div>
<div style="left:618.9px;top:423.1px;width:254.2px;height:3.0px;background:#1e2548;"></div>
<div style="left:1127.4px;top:420.1px;width:254.2px;height:3.0px;background:rgba(60,80,120,0.9);"></div>
<div style="left:1127.4px;top:423.1px;width:254.2px;height:3.0px;background:#1e2548;"></div>
<div style="left:1635.8px;top:420.1px;width:254.2px;height:3.0px;background:rgba(60,80,120,0.9);"></div>
<div style="left:1635.8px;top:423.1px;width:254.2px;height:3.0px;background:#1e2548;"></div>
<div style="left:0.0px;top:463.8px;width:2127.0px;height:3.0px;background:#221d33;"></div>
<div style="left:0.0px;top:466.8px;width:2127.0px;height:1.0px;background:rgba(255,255,255,0.04);"></div>
<div style="left:110.4px;top:460.8px;width:254.2px;height:3.0px;background:rgba(60,80,120,0.9);"></div>
<div style="left:110.4px;top:463.8px;width:254.2px;height:3.0px;background:#1e2548;"></div>
<div style="left:618.9px;top:460.8px;width:254.2px;height:3.0px;background:rgba(60,80,120,0.9);"></div>
<div style="left:618.9px;top:463.8px;width:254.2px;height:3.0px;background:#1e2548;"></div>
<div style="left:1127.4px;top:460.8px;width:254.2px;height:3.0px;background:rgba(60,80,120,0.9);"></div>
<div style="left:1127.4px;top:463.8px;width:254.2px;height:3.0px;background:#1e2548;"></div>
<div style="left:1635.8px;top:460.8px;width:254.2px;height:3.0px;background:rgba(60,80,120,0.9);"></div>
<div style="left:1635.8px;top:463.8px;width:254.2px;height:3.0px;background:#1e2548;"></div>
<div style="left:0.0px;top:504.5px;width:2127.0px;height:3.0px;background:#221d33;"></div>
<div style="left:0.0px;top:507.5px;width:2127.0px;height:1.0px;background:rgba(255,255,255,0.04);"></div>
<div style="left:110.4px;top:501.5px;width:254.2px;height:3.0px;background:rgba(60,80,120,0.9);"></div>
<div style="left:110.4px;top:504.5px;width:254.2px;height:3.0px;background:#1e2548;"></div>
<div style="left:618.9px;top:501.5px;width:254.2px;height:3.0px;background:rgba(60,80,120,0.9);"></div>
<div style="left:618.9px;top:504.5px;width:254.2px;height:3.0px;background:#1e2548;"></div>
<div style="left:1127.4px;top:501.5px;width:254.2px;height:3.0px;background:rgba(60,80,120,0.9);"></div>
<div style="left:1127.4px;top:504.5px;width:254.2px;height:3.0px;background:#1e2548;"></div>
<div style="left:1635.8px;top:501.5px;width:254.2px;height:3.0px;background:rgba(60,80,120,0.9);"></div>
<div style="left:1635.8px;top:504.5px;width:254.2px;height:3.0px;background:#1e2548;"></div>
<div style="left:0.0px;top:545.2px;width:2127.0px;height:3.0px;background:#221d33;"></div>
<div style="left:0.0px;top:548.2px;width:2127.0px;height:1.0px;background:rgba(255,255,255,0.04);"></div>
<div style="left:110.4px;top:542.2px;width:254.2px;height:3.0px;background:rgba(60,80,120,0.9);"></div>
<div style="left:110.4px;top:545.2px;width:254.2px;height:3.0px;background:#1e2548;"></div>
<div style="left:618.9px;top:542.2px;width:254.2px;height:3.0px;background:rgba(60,80,120,0.9);"></div>
<div style="left:618.9px;top:545.2px;width:254.2px;height:3.0px;background:#1e2548;"></div>
<div style="left:1127.4px;top:542.2px;width:254.2px;height:3.0px;background:rgba(60,80,120,0.9);"></div>
<div style="left:1127.4px;top:545.2px;width:254.2px;height:3.0px;background:#1e2548;"></div>
<div style="left:1635.8px;top:542.2px;width:254.2px;height:3.0px;background:rgba(60,80,120,0.9);"></div>
<div style="left:1635.8px;top:545.2px;width:254.2px;height:3.0px;background:#1e2548;"></div>
<div style="left:0.0px;top:585.9px;width:2127.0px;height:3.0px;background:#221d33;"></div>
<div style="left:0.0px;top:588.9px;width:2127.0px;height:1.0px;background:rgba(255,255,255,0.04);"></div>
<div style="left:110.4px;top:582.9px;width:254.2px;height:3.0px;background:rgba(60,80,120,0.9);"></div>
<div style="left:110.4px;top:585.9px;width:254.2px;height:3.0px;background:#1e2548;"></div>
<div style="left:618.9px;top:582.9px;width:254.2px;height:3.0px;background:rgba(60,80,120,0.9);"></div>
<div style="left:618.9px;top:585.9px;width:254.2px;height:3.0px;background:#1e2548;"></div>
<div style="left:1127.4px;top:582.9px;width:254.2px;height:3.0px;background:rgba(60,80,120,0.9);"></div>
<div style="left:1127.4px;top:585.9px;width:254.2px;height:3.0px;background:#1e2548;"></div>
<div style="left:1635.8px;top:582.9px;width:254.2px;height:3.0px;background:rgba(60,80,120,0.9);"></div>
<div style="left:1635.8px;top:585.9px;width:254.2px;height:3.0px;background:#1e2548;"></div>
<div style="left:0.0px;top:626.6px;width:2127.0px;height:3.0px;background:#221d33;"></div>
<div style="left:0.0px;top:629.6px;width:2127.0px;height:1.0px;background:rgba(255,255,255,0.04);"></div>
<div style="left:110.4px;top:623.6px;width:254.2px;height:3.0px;background:rgba(60,80,120,0.9);"></div>
<div style="left:110.4px;top:626.6px;width:254.2px;height:3.0px;background:#1e2548;"></div>
<div style="left:618.9px;top:623.6px;width:254.2px;height:3.0px;background:rgba(60,80,120,0.9);"></div>
<div style="left:618.9px;top:626.6px;width:254.2px;height:3.0px;background:#1e2548;"></div>
<div style="left:1127.4px;top:623.6px;width:254.2px;height:3.0px;background:rgba(60,80,120,0.9);"></div>
<div style="left:1127.4px;top:626.6px;width:254.2px;height:3.0px;background:#1e2548;"></div>
<div style="left:1635.8px;top:623.6px;width:254.2px;height:3.0px;background:rgba(60,80,120,0.9);"></div>
<div style="left:1635.8px;top:626.6px;width:254.2px;height:3.0px;background:#1e2548;"></div>
<div style="left:0.0px;top:667.3px;width:2127.0px;height:3.0px;background:#221d33;"></div>
<div style="left:0.0px;top:670.3px;width:2127.0px;height:1.0px;background:rgba(255,255,255,0.04);"></div>
<div style="left:110.4px;top:664.3px;width:254.2px;height:3.0px;background:rgba(60,80,120,0.9);"></div>
<div style="left:110.4px;top:667.3px;width:254.2px;height:3.0px;background:#1e2548;"></div>
<div style="left:618.9px;top:664.3px;width:254.2px;height:3.0px;background:rgba(60,80,120,0.9);"></div>
<div style="left:618.9px;top:667.3px;width:254.2px;height:3.0px;background:#1e2548;"></div>
<div style="left:1127.4px;top:664.3px;width:254.2px;height:3.0px;background:rgba(60,80,120,0.9);"></div>
<div style="left:1127.4px;top:667.3px;width:254.2px;height:3.0px;background:#1e2548;"></div>
<div style="left:1635.8px;top:664.3px;width:254.2px;height:3.0px;background:rgba(60,80,120,0.9);"></div>
<div style="left:1635.8px;top:667.3px;width:254.2px;height:3.0px;background:#1e2548;"></div>
<div style="left:0.0px;top:708.0px;width:2127.0px;height:3.0px;background:#221d33;"></div>
<div style="left:0.0px;top:711.0px;width:2127.0px;height:1.0px;background:rgba(255,255,255,0.04);"></div>
<div style="left:110.4px;top:705.0px;width:254.2px;height:3.0px;background:rgba(60,80,120,0.9);"></div>
<div style="left:110.4px;top:708.0px;width:254.2px;height:3.0px;background:#1e2548;"></div>
<div style="left:618.9px;top:705.0px;width:254.2px;height:3.0px;background:rgba(60,80,120,0.9);"></div>
<div style="left:618.9px;top:708.0px;width:254.2px;height:3.0px;background:#1e2548;"></div>
<div style="left:1127.4px;top:705.0px;width:254.2px;height:3.0px;background:rgba(60,80,120,0.9);"></div>
<div style="left:1127.4px;top:708.0px;width:254.2px;height:3.0px;background:#1e2548;"></div>
<div style="left:1635.8px;top:705.0px;width:254.2px;height:3.0px;background:rgba(60,80,120,0.9);"></div>
<div style="left:1635.8px;top:708.0px;width:254.2px;height:3.0px;background:#1e2548;"></div>
<div style="left:0.0px;top:748.7px;width:2127.0px;height:3.0px;background:#221d33;"></div>
<div style="left:0.0px;top:751.7px;width:2127.0px;height:1.0px;background:rgba(255,255,255,0.04);"></div>
<div style="left:110.4px;top:745.7px;width:254.2px;height:3.0px;background:rgba(60,80,120,0.9);"></div>
<div style="left:110.4px;top:748.7px;width:254.2px;height:3.0px;background:#1e2548;"></div>
<div style="left:618.9px;top:745.7px;width:254.2px;height:3.0px;background:rgba(60,80,120,0.9);"></div>
<div style="left:618.9px;top:748.7px;width:254.2px;height:3.0px;background:#1e2548;"></div>
<div style="left:1127.4px;top:745.7px;width:254.2px;height:3.0px;background:rgba(60,80,120,0.9);"></div>
<div style="left:1127.4px;top:748.7px;width:254.2px;height:3.0px;background:#1e2548;"></div>
<div style="left:1635.8px;top:745.7px;width:254.2px;height:3.0px;background:rgba(60,80,120,0.9);"></div>
<div style="left:1635.8px;top:748.7px;width:254.2px;height:3.0px;background:#1e2548;"></div>
<div style="left:0.0px;top:789.4px;width:2127.0px;height:3.0px;background:#221d33;"></div>
<div style="left:0.0px;top:792.4px;width:2127.0px;height:1.0px;background:rgba(255,255,255,0.04);"></div>
<div style="left:110.4px;top:786.4px;width:254.2px;height:3.0px;background:rgba(60,80,120,0.9);"></div>
<div style="left:110.4px;top:789.4px;width:254.2px;height:3.0px;background:#1e2548;"></div>
<div style="left:618.9px;top:786.4px;width:254.2px;height:3.0px;background:rgba(60,80,120,0.9);"></div>
<div style="left:618.9px;top:789.4px;width:254.2px;height:3.0px;background:#1e2548;"></div>
<div style="left:1127.4px;top:786.4px;width:254.2px;height:3.0px;background:rgba(60,80,120,0.9);"></div>
<div style="left:1127.4px;top:789.4px;width:254.2px;height:3.0px;background:#1e2548;"></div>
<div style="left:1635.8px;top:786.4px;width:254.2px;height:3.0px;background:rgba(60,80,120,0.9);"></div>
<div style="left:1635.8px;top:789.4px;width:254.2px;height:3.0px;background:#1e2548;"></div>
<div style="left:0.0px;top:830.1px;width:2127.0px;height:3.0px;background:#221d33;"></div>
<div style="left:0.0px;top:833.1px;width:2127.0px;height:1.0px;background:rgba(255,255,255,0.04);"></div>
<div style="left:110.4px;top:827.1px;width:254.2px;height:3.0px;background:rgba(60,80,120,0.9);"></div>
<div style="left:110.4px;top:830.1px;width:254.2px;height:3.0px;background:#1e2548;"></div>
<div style="left:618.9px;top:827.1px;width:254.2px;height:3.0px;background:rgba(60,80,120,0.9);"></div>
<div style="left:618.9px;top:830.1px;width:254.2px;height:3.0px;background:#1e2548;"></div>
<div style="left:1127.4px;top:827.1px;width:254.2px;height:3.0px;background:rgba(60,80,120,0.9);"></div>
<div style="left:1127.4px;top:830.1px;width:254.2px;height:3.0px;background:#1e2548;"></div>
<div style="left:1635.8px;top:827.1px;width:254.2px;height:3.0px;background:rgba(60,80,120,0.9);"></div>
<div style="left:1635.8px;top:830.1px;width:254.2px;height:3.0px;background:#1e2548;"></div>
<div style="left:0.0px;top:870.8px;width:2127.0px;height:3.0px;background:#221d33;"></div>
<div style="left:0.0px;top:873.8px;width:2127.0px;height:1.0px;background:rgba(255,255,255,0.04);"></div>
<div style="left:110.4px;top:867.8px;width:254.2px;height:3.0px;background:rgba(60,80,120,0.9);"></div>
<div style="left:110.4px;top:870.8px;width:254.2px;height:3.0px;background:#1e2548;"></div>
<div style="left:618.9px;top:867.8px;width:254.2px;height:3.0px;background:rgba(60,80,120,0.9);"></div>
<div style="left:618.9px;top:870.8px;width:254.2px;height:3.0px;background:#1e2548;"></div>
<div style="left:1127.4px;top:867.8px;width:254.2px;height:3.0px;background:rgba(60,80,120,0.9);"></div>
<div style="left:1127.4px;top:870.8px;width:254.2px;height:3.0px;background:#1e2548;"></div>
<div style="left:1635.8px;top:867.8px;width:254.2px;height:3.0px;background:rgba(60,80,120,0.9);"></div>
<div style="left:1635.8px;top:870.8px;width:254.2px;height:3.0px;background:#1e2548;"></div>
<div style="left:0.0px;top:911.5px;width:2127.0px;height:3.0px;background:#221d33;"></div>
<div style="left:0.0px;top:914.5px;width:2127.0px;height:1.0px;background:rgba(255,255,255,0.04);"></div>
<div style="left:110.4px;top:908.5px;width:254.2px;height:3.0px;background:rgba(60,80,120,0.9);"></div>
<div style="left:110.4px;top:911.5px;width:254.2px;height:3.0px;background:#1e2548;"></div>
<div style="left:618.9px;top:908.5px;width:254.2px;height:3.0px;background:rgba(60,80,120,0.9);"></div>
<div style="left:618.9px;top:911.5px;width:254.2px;height:3.0px;background:#1e2548;"></div>
<div style="left:1127.4px;top:908.5px;width:254.2px;height:3.0px;background:rgba(60,80,120,0.9);"></div>
<div style="left:1127.4px;top:911.5px;width:254.2px;height:3.0px;background:#1e2548;"></div>
<div style="left:1635.8px;top:908.5px;width:254.2px;height:3.0px;background:rgba(60,80,120,0.9);"></div>
<div style="left:1635.8px;top:911.5px;width:254.2px;height:3.0px;background:#1e2548;"></div>
<div style="left:0.0px;top:952.2px;width:2127.0px;height:3.0px;background:#221d33;"></div>
<div style="left:0.0px;top:955.2px;width:2127.0px;height:1.0px;background:rgba(255,255,255,0.04);"></div>
<div style="left:110.4px;top:949.2px;width:254.2px;height:3.0px;background:rgba(60,80,120,0.9);"></div>
<div style="left:110.4px;top:952.2px;width:254.2px;height:3.0px;background:#1e2548;"></div>
<div style="left:618.9px;top:949.2px;width:254.2px;height:3.0px;background:rgba(60,80,120,0.9);"></div>
<div style="left:618.9px;top:952.2px;width:254.2px;height:3.0px;background:#1e2548;"></div>
<div style="left:1127.4px;top:949.2px;width:254.2px;height:3.0px;background:rgba(60,80,120,0.9);"></div>
<div style="left:1127.4px;top:952.2px;width:254.2px;height:3.0px;background:#1e2548;"></div>
<div style="left:1635.8px;top:949.2px;width:254.2px;height:3.0px;background:rgba(60,80,120,0.9);"></div>
<div style="left:1635.8px;top:952.2px;width:254.2px;height:3.0px;background:#1e2548;"></div>
<div style="left:0.0px;top:992.9px;width:2127.0px;height:3.0px;background:#221d33;"></div>
<div style="left:0.0px;top:995.9px;width:2127.0px;height:1.0px;background:rgba(255,255,255,0.04);"></div>
<div style="left:110.4px;top:989.9px;width:254.2px;height:3.0px;background:rgba(60,80,120,0.9);"></div>
<div style="left:110.4px;top:992.9px;width:254.2px;height:3.0px;background:#1e2548;"></div>
<div style="left:618.9px;top:989.9px;width:254.2px;height:3.0px;background:rgba(60,80,120,0.9);"></div>
<div style="left:618.9px;top:992.9px;width:254.2px;height:3.0px;background:#1e2548;"></div>
<div style="left:1127.4px;top:989.9px;width:254.2px;height:3.0px;background:rgba(60,80,120,0.9);"></div>
<div style="left:1127.4px;top:992.9px;width:254.2px;height:3.0px;background:#1e2548;"></div>
<div style="left:1635.8px;top:989.9px;width:254.2px;height:3.0px;background:rgba(60,80,120,0.9);"></div>
<div style="left:1635.8px;top:992.9px;width:254.2px;height:3.0px;background:#1e2548;"></div>
<div style="left:0.0px;top:1014.0px;width:2127.0px;height:3.0px;background:#221d33;"></div>
<div style="left:0.0px;top:1017.0px;width:2127.0px;height:1.0px;background:rgba(255,255,255,0.04);"></div>
<div style="left:110.4px;top:1011.0px;width:254.2px;height:3.0px;background:rgba(60,80,120,0.9);"></div>
<div style="left:110.4px;top:1014.0px;width:254.2px;height:3.0px;background:#1e2548;"></div>
<div style="left:618.9px;top:1011.0px;width:254.2px;height:3.0px;background:rgba(60,80,120,0.9);"></div>
<div style="left:618.9px;top:1014.0px;width:254.2px;height:3.0px;background:#1e2548;"></div>
<div style="left:1127.4px;top:1011.0px;width:254.2px;height:3.0px;background:rgba(60,80,120,0.9);"></div>
<div style="left:1127.4px;top:1014.0px;width:254.2px;height:3.0px;background:#1e2548;"></div>
<div style="left:1635.8px;top:1011.0px;width:254.2px;height:3.0px;background:rgba(60,80,120,0.9);"></div>
<div style="left:1635.8px;top:1014.0px;width:254.2px;height:3.0px;background:#1e2548;"></div>
<div style="left:0.0px;top:1054.0px;width:2127.0px;height:3.0px;background:#221d33;"></div>
<div style="left:0.0px;top:1057.0px;width:2127.0px;height:1.0px;background:rgba(255,255,255,0.04);"></div>
<div style="left:110.4px;top:1051.0px;width:254.2px;height:3.0px;background:rgba(60,80,120,0.9);"></div>
<div style="left:110.4px;top:1054.0px;width:254.2px;height:3.0px;background:#1e2548;"></div>
<div style="left:618.9px;top:1051.0px;width:254.2px;height:3.0px;background:rgba(60,80,120,0.9);"></div>
<div style="left:618.9px;top:1054.0px;width:254.2px;height:3.0px;background:#1e2548;"></div>
<div style="left:1127.4px;top:1051.0px;width:254.2px;height:3.0px;background:rgba(60,80,120,0.9);"></div>
<div style="left:1127.4px;top:1054.0px;width:254.2px;height:3.0px;background:#1e2548;"></div>
<div style="left:1635.8px;top:1051.0px;width:254.2px;height:3.0px;background:rgba(60,80,120,0.9);"></div>
<div style="left:1635.8px;top:1054.0px;width:254.2px;height:3.0px;background:#1e2548;"></div>
<div style="left:106.0px;top:113.0px;width:2.0px;height:983.0px;background:#1c1828;"></div>
<div style="left:110.0px;top:113.0px;width:1.5px;height:983.0px;background:#f0e8f6;"></div>
<div style="left:384.0px;top:144.0px;width:31.8px;height:61.0px;background:#9a4a38;"></div>
<div style="left:384.0px;top:145.0px;width:31.8px;height:17.0px;background:#6e3a30;"></div>
<svg style="left:384.0px;top:145px" width="31.8" height="17"><path d="M1 3 L14.3 5 L1 7Z M15.9 3 L30.8 5 L15.9 7Z M1 10 L14.3 12 L1 14Z M15.9 10 L30.8 12 L15.9 14Z" fill="#2a0c10"/></svg>
<div style="left:384.0px;top:162.0px;width:31.8px;height:2.0px;background:#c06858;"></div>
<div style="left:384.0px;top:164.0px;width:31.8px;height:17.0px;background:#b0503e;"></div>
<div class="t" style="left:386.0px;top:167.0px;font-size:11px;color:#ffe6dc;font-weight:normal;">Clap</div>
<div style="left:384.0px;top:181.0px;width:31.8px;height:24.0px;background:#a04c34;"></div>
<div style="left:385.0px;top:184.0px;width:29.8px;height:2.0px;background:#4a1a18;"></div>
<div style="left:385.0px;top:189.0px;width:29.8px;height:2.0px;background:#4a1a18;"></div>
<div style="left:385.0px;top:194.0px;width:29.8px;height:2.0px;background:#4a1a18;"></div>
<div style="left:385.0px;top:199.0px;width:29.8px;height:2.0px;background:#4a1a18;"></div>
<div style="left:384.0px;top:144.0px;width:1.0px;height:61.0px;background:rgba(30,10,20,0.6);"></div>
<div style="left:415.8px;top:144.0px;width:31.8px;height:61.0px;background:#9a4a38;"></div>
<div style="left:415.8px;top:145.0px;width:31.8px;height:17.0px;background:#6e3a30;"></div>
<svg style="left:415.8px;top:145px" width="31.8" height="17"><path d="M1 3 L14.3 5 L1 7Z M15.9 3 L30.8 5 L15.9 7Z M1 10 L14.3 12 L1 14Z M15.9 10 L30.8 12 L15.9 14Z" fill="#2a0c10"/></svg>
<div style="left:415.8px;top:162.0px;width:31.8px;height:2.0px;background:#c06858;"></div>
<div style="left:415.8px;top:164.0px;width:31.8px;height:17.0px;background:#b0503e;"></div>
<div class="t" style="left:417.8px;top:167.0px;font-size:11px;color:#ffe6dc;font-weight:normal;">Clap</div>
<div style="left:415.8px;top:181.0px;width:31.8px;height:24.0px;background:#a04c34;"></div>
<div style="left:416.8px;top:184.0px;width:29.8px;height:2.0px;background:#4a1a18;"></div>
<div style="left:416.8px;top:189.0px;width:29.8px;height:2.0px;background:#4a1a18;"></div>
<div style="left:416.8px;top:194.0px;width:29.8px;height:2.0px;background:#4a1a18;"></div>
<div style="left:416.8px;top:199.0px;width:29.8px;height:2.0px;background:#4a1a18;"></div>
<div style="left:415.8px;top:144.0px;width:1.0px;height:61.0px;background:rgba(30,10,20,0.6);"></div>
<div style="left:447.6px;top:144.0px;width:31.8px;height:61.0px;background:#9a4a38;"></div>
<div style="left:447.6px;top:145.0px;width:31.8px;height:17.0px;background:#6e3a30;"></div>
<svg style="left:447.6px;top:145px" width="31.8" height="17"><path d="M1 3 L14.3 5 L1 7Z M15.9 3 L30.8 5 L15.9 7Z M1 10 L14.3 12 L1 14Z M15.9 10 L30.8 12 L15.9 14Z" fill="#2a0c10"/></svg>
<div style="left:447.6px;top:162.0px;width:31.8px;height:2.0px;background:#c06858;"></div>
<div style="left:447.6px;top:164.0px;width:31.8px;height:17.0px;background:#b0503e;"></div>
<div class="t" style="left:449.6px;top:167.0px;font-size:11px;color:#ffe6dc;font-weight:normal;">Clap</div>
<div style="left:447.6px;top:181.0px;width:31.8px;height:24.0px;background:#a04c34;"></div>
<div style="left:448.6px;top:184.0px;width:29.8px;height:2.0px;background:#4a1a18;"></div>
<div style="left:448.6px;top:189.0px;width:29.8px;height:2.0px;background:#4a1a18;"></div>
<div style="left:448.6px;top:194.0px;width:29.8px;height:2.0px;background:#4a1a18;"></div>
<div style="left:448.6px;top:199.0px;width:29.8px;height:2.0px;background:#4a1a18;"></div>
<div style="left:447.6px;top:144.0px;width:1.0px;height:61.0px;background:rgba(30,10,20,0.6);"></div>
<div style="left:479.3px;top:144.0px;width:31.8px;height:61.0px;background:#9a4a38;"></div>
<div style="left:479.3px;top:145.0px;width:31.8px;height:17.0px;background:#6e3a30;"></div>
<svg style="left:479.3px;top:145px" width="31.8" height="17"><path d="M1 3 L14.3 5 L1 7Z M15.9 3 L30.8 5 L15.9 7Z M1 10 L14.3 12 L1 14Z M15.9 10 L30.8 12 L15.9 14Z" fill="#2a0c10"/></svg>
<div style="left:479.3px;top:162.0px;width:31.8px;height:2.0px;background:#c06858;"></div>
<div style="left:479.3px;top:164.0px;width:31.8px;height:17.0px;background:#b0503e;"></div>
<div class="t" style="left:481.3px;top:167.0px;font-size:11px;color:#ffe6dc;font-weight:normal;">Clap</div>
<div style="left:479.3px;top:181.0px;width:31.8px;height:24.0px;background:#a04c34;"></div>
<div style="left:480.3px;top:184.0px;width:29.8px;height:2.0px;background:#4a1a18;"></div>
<div style="left:480.3px;top:189.0px;width:29.8px;height:2.0px;background:#4a1a18;"></div>
<div style="left:480.3px;top:194.0px;width:29.8px;height:2.0px;background:#4a1a18;"></div>
<div style="left:480.3px;top:199.0px;width:29.8px;height:2.0px;background:#4a1a18;"></div>
<div style="left:479.3px;top:144.0px;width:1.0px;height:61.0px;background:rgba(30,10,20,0.6);"></div>
<div style="left:511.1px;top:144.0px;width:31.8px;height:61.0px;background:#9a4a38;"></div>
<div style="left:511.1px;top:145.0px;width:31.8px;height:17.0px;background:#6e3a30;"></div>
<svg style="left:511.1px;top:145px" width="31.8" height="17"><path d="M1 3 L14.3 5 L1 7Z M15.9 3 L30.8 5 L15.9 7Z M1 10 L14.3 12 L1 14Z M15.9 10 L30.8 12 L15.9 14Z" fill="#2a0c10"/></svg>
<div style="left:511.1px;top:162.0px;width:31.8px;height:2.0px;background:#c06858;"></div>
<div style="left:511.1px;top:164.0px;width:31.8px;height:17.0px;background:#b0503e;"></div>
<div class="t" style="left:513.1px;top:167.0px;font-size:11px;color:#ffe6dc;font-weight:normal;">Clap</div>
<div style="left:511.1px;top:181.0px;width:31.8px;height:24.0px;background:#a04c34;"></div>
<div style="left:512.1px;top:184.0px;width:29.8px;height:2.0px;background:#4a1a18;"></div>
<div style="left:512.1px;top:189.0px;width:29.8px;height:2.0px;background:#4a1a18;"></div>
<div style="left:512.1px;top:194.0px;width:29.8px;height:2.0px;background:#4a1a18;"></div>
<div style="left:512.1px;top:199.0px;width:29.8px;height:2.0px;background:#4a1a18;"></div>
<div style="left:511.1px;top:144.0px;width:1.0px;height:61.0px;background:rgba(30,10,20,0.6);"></div>
<div style="left:542.9px;top:144.0px;width:31.8px;height:61.0px;background:#9a4a38;"></div>
<div style="left:542.9px;top:145.0px;width:31.8px;height:17.0px;background:#6e3a30;"></div>
<svg style="left:542.9px;top:145px" width="31.8" height="17"><path d="M1 3 L14.3 5 L1 7Z M15.9 3 L30.8 5 L15.9 7Z M1 10 L14.3 12 L1 14Z M15.9 10 L30.8 12 L15.9 14Z" fill="#2a0c10"/></svg>
<div style="left:542.9px;top:162.0px;width:31.8px;height:2.0px;background:#c06858;"></div>
<div style="left:542.9px;top:164.0px;width:31.8px;height:17.0px;background:#b0503e;"></div>
<div class="t" style="left:544.9px;top:167.0px;font-size:11px;color:#ffe6dc;font-weight:normal;">Clap</div>
<div style="left:542.9px;top:181.0px;width:31.8px;height:24.0px;background:#a04c34;"></div>
<div style="left:543.9px;top:184.0px;width:29.8px;height:2.0px;background:#4a1a18;"></div>
<div style="left:543.9px;top:189.0px;width:29.8px;height:2.0px;background:#4a1a18;"></div>
<div style="left:543.9px;top:194.0px;width:29.8px;height:2.0px;background:#4a1a18;"></div>
<div style="left:543.9px;top:199.0px;width:29.8px;height:2.0px;background:#4a1a18;"></div>
<div style="left:542.9px;top:144.0px;width:1.0px;height:61.0px;background:rgba(30,10,20,0.6);"></div>
<div style="left:574.7px;top:144.0px;width:31.8px;height:61.0px;background:#9a4a38;"></div>
<div style="left:574.7px;top:145.0px;width:31.8px;height:17.0px;background:#6e3a30;"></div>
<svg style="left:574.7px;top:145px" width="31.8" height="17"><path d="M1 3 L14.3 5 L1 7Z M15.9 3 L30.8 5 L15.9 7Z M1 10 L14.3 12 L1 14Z M15.9 10 L30.8 12 L15.9 14Z" fill="#2a0c10"/></svg>
<div style="left:574.7px;top:162.0px;width:31.8px;height:2.0px;background:#c06858;"></div>
<div style="left:574.7px;top:164.0px;width:31.8px;height:17.0px;background:#b0503e;"></div>
<div class="t" style="left:576.7px;top:167.0px;font-size:11px;color:#ffe6dc;font-weight:normal;">Clap</div>
<div style="left:574.7px;top:181.0px;width:31.8px;height:24.0px;background:#a04c34;"></div>
<div style="left:575.7px;top:184.0px;width:29.8px;height:2.0px;background:#4a1a18;"></div>
<div style="left:575.7px;top:189.0px;width:29.8px;height:2.0px;background:#4a1a18;"></div>
<div style="left:575.7px;top:194.0px;width:29.8px;height:2.0px;background:#4a1a18;"></div>
<div style="left:575.7px;top:199.0px;width:29.8px;height:2.0px;background:#4a1a18;"></div>
<div style="left:574.7px;top:144.0px;width:1.0px;height:61.0px;background:rgba(30,10,20,0.6);"></div>
<div style="left:606.5px;top:144.0px;width:31.8px;height:61.0px;background:#9a4a38;"></div>
<div style="left:606.5px;top:145.0px;width:31.8px;height:17.0px;background:#6e3a30;"></div>
<svg style="left:606.5px;top:145px" width="31.8" height="17"><path d="M1 3 L14.3 5 L1 7Z M15.9 3 L30.8 5 L15.9 7Z M1 10 L14.3 12 L1 14Z M15.9 10 L30.8 12 L15.9 14Z" fill="#2a0c10"/></svg>
<div style="left:606.5px;top:162.0px;width:31.8px;height:2.0px;background:#c06858;"></div>
<div style="left:606.5px;top:164.0px;width:31.8px;height:17.0px;background:#b0503e;"></div>
<div class="t" style="left:608.5px;top:167.0px;font-size:11px;color:#ffe6dc;font-weight:normal;">Clap</div>
<div style="left:606.5px;top:181.0px;width:31.8px;height:24.0px;background:#a04c34;"></div>
<div style="left:607.5px;top:184.0px;width:29.8px;height:2.0px;background:#4a1a18;"></div>
<div style="left:607.5px;top:189.0px;width:29.8px;height:2.0px;background:#4a1a18;"></div>
<div style="left:607.5px;top:194.0px;width:29.8px;height:2.0px;background:#4a1a18;"></div>
<div style="left:607.5px;top:199.0px;width:29.8px;height:2.0px;background:#4a1a18;"></div>
<div style="left:606.5px;top:144.0px;width:1.0px;height:61.0px;background:rgba(30,10,20,0.6);"></div>
<div style="left:638.2px;top:144.0px;width:31.8px;height:61.0px;background:#9a4a38;"></div>
<div style="left:638.2px;top:145.0px;width:31.8px;height:17.0px;background:#6e3a30;"></div>
<svg style="left:638.2px;top:145px" width="31.8" height="17"><path d="M1 3 L14.3 5 L1 7Z M15.9 3 L30.8 5 L15.9 7Z M1 10 L14.3 12 L1 14Z M15.9 10 L30.8 12 L15.9 14Z" fill="#2a0c10"/></svg>
<div style="left:638.2px;top:162.0px;width:31.8px;height:2.0px;background:#c06858;"></div>
<div style="left:638.2px;top:164.0px;width:31.8px;height:17.0px;background:#b0503e;"></div>
<div class="t" style="left:640.2px;top:167.0px;font-size:11px;color:#ffe6dc;font-weight:normal;">Clap</div>
<div style="left:638.2px;top:181.0px;width:31.8px;height:24.0px;background:#a04c34;"></div>
<div style="left:639.2px;top:184.0px;width:29.8px;height:2.0px;background:#4a1a18;"></div>
<div style="left:639.2px;top:189.0px;width:29.8px;height:2.0px;background:#4a1a18;"></div>
<div style="left:639.2px;top:194.0px;width:29.8px;height:2.0px;background:#4a1a18;"></div>
<div style="left:639.2px;top:199.0px;width:29.8px;height:2.0px;background:#4a1a18;"></div>
<div style="left:638.2px;top:144.0px;width:1.0px;height:61.0px;background:rgba(30,10,20,0.6);"></div>
<div style="left:670.0px;top:144.0px;width:31.8px;height:61.0px;background:#9a4a38;"></div>
<div style="left:670.0px;top:145.0px;width:31.8px;height:17.0px;background:#6e3a30;"></div>
<svg style="left:670.0px;top:145px" width="31.8" height="17"><path d="M1 3 L14.3 5 L1 7Z M15.9 3 L30.8 5 L15.9 7Z M1 10 L14.3 12 L1 14Z M15.9 10 L30.8 12 L15.9 14Z" fill="#2a0c10"/></svg>
<div style="left:670.0px;top:162.0px;width:31.8px;height:2.0px;background:#c06858;"></div>
<div style="left:670.0px;top:164.0px;width:31.8px;height:17.0px;background:#b0503e;"></div>
<div class="t" style="left:672.0px;top:167.0px;font-size:11px;color:#ffe6dc;font-weight:normal;">Clap</div>
<div style="left:670.0px;top:181.0px;width:31.8px;height:24.0px;background:#a04c34;"></div>
<div style="left:671.0px;top:184.0px;width:29.8px;height:2.0px;background:#4a1a18;"></div>
<div style="left:671.0px;top:189.0px;width:29.8px;height:2.0px;background:#4a1a18;"></div>
<div style="left:671.0px;top:194.0px;width:29.8px;height:2.0px;background:#4a1a18;"></div>
<div style="left:671.0px;top:199.0px;width:29.8px;height:2.0px;background:#4a1a18;"></div>
<div style="left:670.0px;top:144.0px;width:1.0px;height:61.0px;background:rgba(30,10,20,0.6);"></div>
<div style="left:701.8px;top:144.0px;width:31.8px;height:61.0px;background:#9a4a38;"></div>
<div style="left:701.8px;top:145.0px;width:31.8px;height:17.0px;background:#6e3a30;"></div>
<svg style="left:701.8px;top:145px" width="31.8" height="17"><path d="M1 3 L14.3 5 L1 7Z M15.9 3 L30.8 5 L15.9 7Z M1 10 L14.3 12 L1 14Z M15.9 10 L30.8 12 L15.9 14Z" fill="#2a0c10"/></svg>
<div style="left:701.8px;top:162.0px;width:31.8px;height:2.0px;background:#c06858;"></div>
<div style="left:701.8px;top:164.0px;width:31.8px;height:17.0px;background:#b0503e;"></div>
<div class="t" style="left:703.8px;top:167.0px;font-size:11px;color:#ffe6dc;font-weight:normal;">Clap</div>
<div style="left:701.8px;top:181.0px;width:31.8px;height:24.0px;background:#a04c34;"></div>
<div style="left:702.8px;top:184.0px;width:29.8px;height:2.0px;background:#4a1a18;"></div>
<div style="left:702.8px;top:189.0px;width:29.8px;height:2.0px;background:#4a1a18;"></div>
<div style="left:702.8px;top:194.0px;width:29.8px;height:2.0px;background:#4a1a18;"></div>
<div style="left:702.8px;top:199.0px;width:29.8px;height:2.0px;background:#4a1a18;"></div>
<div style="left:701.8px;top:144.0px;width:1.0px;height:61.0px;background:rgba(30,10,20,0.6);"></div>
<div style="left:733.6px;top:144.0px;width:31.8px;height:61.0px;background:#9a4a38;"></div>
<div style="left:733.6px;top:145.0px;width:31.8px;height:17.0px;background:#6e3a30;"></div>
<svg style="left:733.6px;top:145px" width="31.8" height="17"><path d="M1 3 L14.3 5 L1 7Z M15.9 3 L30.8 5 L15.9 7Z M1 10 L14.3 12 L1 14Z M15.9 10 L30.8 12 L15.9 14Z" fill="#2a0c10"/></svg>
<div style="left:733.6px;top:162.0px;width:31.8px;height:2.0px;background:#c06858;"></div>
<div style="left:733.6px;top:164.0px;width:31.8px;height:17.0px;background:#b0503e;"></div>
<div class="t" style="left:735.6px;top:167.0px;font-size:11px;color:#ffe6dc;font-weight:normal;">Clap</div>
<div style="left:733.6px;top:181.0px;width:31.8px;height:24.0px;background:#a04c34;"></div>
<div style="left:734.6px;top:184.0px;width:29.8px;height:2.0px;background:#4a1a18;"></div>
<div style="left:734.6px;top:189.0px;width:29.8px;height:2.0px;background:#4a1a18;"></div>
<div style="left:734.6px;top:194.0px;width:29.8px;height:2.0px;background:#4a1a18;"></div>
<div style="left:734.6px;top:199.0px;width:29.8px;height:2.0px;background:#4a1a18;"></div>
<div style="left:733.6px;top:144.0px;width:1.0px;height:61.0px;background:rgba(30,10,20,0.6);"></div>
<div style="left:766.0px;top:144.0px;width:31.8px;height:61.0px;background:#2f4856;"></div>
<svg style="left:766.0px;top:145px" width="31.8" height="17"><path d="M2 3 L15.9 5 L2 7Z M2 10 L15.9 12 L2 14Z M17.5 4h12.7 M17.5 11h12.7" fill="#b8d0dc" stroke="#b8d0dc" stroke-width="1.5"/></svg>
<div style="left:766.0px;top:163.0px;width:31.8px;height:2.0px;background:#c8d8e0;"></div>
<div style="left:766.0px;top:165.0px;width:31.8px;height:16.0px;background:#a2b6c2;"></div>
<div class="t" style="left:768.0px;top:167.0px;font-size:11px;color:#24343e;font-weight:normal;">Clap</div>
<div style="left:767.0px;top:187.0px;width:29.8px;height:2.0px;background:#b0c8d4;"></div>
<div style="left:767.0px;top:195.0px;width:29.8px;height:2.0px;background:#b0c8d4;"></div>
<div style="left:766.0px;top:144.0px;width:1.0px;height:61.0px;background:rgba(30,10,20,0.6);"></div>
<div style="left:797.8px;top:144.0px;width:31.8px;height:61.0px;background:#2f4856;"></div>
<svg style="left:797.8px;top:145px" width="31.8" height="17"><path d="M2 3 L15.9 5 L2 7Z M2 10 L15.9 12 L2 14Z M17.5 4h12.7 M17.5 11h12.7" fill="#b8d0dc" stroke="#b8d0dc" stroke-width="1.5"/></svg>
<div style="left:797.8px;top:163.0px;width:31.8px;height:2.0px;background:#c8d8e0;"></div>
<div style="left:797.8px;top:165.0px;width:31.8px;height:16.0px;background:#a2b6c2;"></div>
<div class="t" style="left:799.8px;top:167.0px;font-size:11px;color:#24343e;font-weight:normal;">Clap</div>
<div style="left:798.8px;top:187.0px;width:29.8px;height:2.0px;background:#b0c8d4;"></div>
<div style="left:798.8px;top:195.0px;width:29.8px;height:2.0px;background:#b0c8d4;"></div>
<div style="left:797.8px;top:144.0px;width:1.0px;height:61.0px;background:rgba(30,10,20,0.6);"></div>
<div style="left:829.6px;top:144.0px;width:31.8px;height:61.0px;background:#2f4856;"></div>
<svg style="left:829.6px;top:145px" width="31.8" height="17"><path d="M2 3 L15.9 5 L2 7Z M2 10 L15.9 12 L2 14Z M17.5 4h12.7 M17.5 11h12.7" fill="#b8d0dc" stroke="#b8d0dc" stroke-width="1.5"/></svg>
<div style="left:829.6px;top:163.0px;width:31.8px;height:2.0px;background:#c8d8e0;"></div>
<div style="left:829.6px;top:165.0px;width:31.8px;height:16.0px;background:#a2b6c2;"></div>
<div class="t" style="left:831.6px;top:167.0px;font-size:11px;color:#24343e;font-weight:normal;">Clap</div>
<div style="left:830.6px;top:187.0px;width:29.8px;height:2.0px;background:#b0c8d4;"></div>
<div style="left:830.6px;top:195.0px;width:29.8px;height:2.0px;background:#b0c8d4;"></div>
<div style="left:829.6px;top:144.0px;width:1.0px;height:61.0px;background:rgba(30,10,20,0.6);"></div>
<div style="left:861.3px;top:144.0px;width:11.7px;height:61.0px;background:#2f4856;"></div>
<svg style="left:861.3px;top:145px" width="11.7" height="17"><path d="M2 3 L5.8 5 L2 7Z M2 10 L5.8 12 L2 14Z M6.4 4h4.7 M6.4 11h4.7" fill="#b8d0dc" stroke="#b8d0dc" stroke-width="1.5"/></svg>
<div style="left:861.3px;top:163.0px;width:11.7px;height:2.0px;background:#c8d8e0;"></div>
<div style="left:861.3px;top:165.0px;width:11.7px;height:16.0px;background:#a2b6c2;"></div>
<div class="t" style="left:863.3px;top:167.0px;font-size:11px;color:#24343e;font-weight:normal;">Clap</div>
<div style="left:862.3px;top:187.0px;width:9.7px;height:2.0px;background:#b0c8d4;"></div>
<div style="left:862.3px;top:195.0px;width:9.7px;height:2.0px;background:#b0c8d4;"></div>
<div style="left:861.3px;top:144.0px;width:1.0px;height:61.0px;background:rgba(30,10,20,0.6);"></div>
<div style="left:1376.0px;top:144.0px;width:30.4px;height:61.0px;background:#9a4a38;"></div>
<div style="left:1376.0px;top:145.0px;width:30.4px;height:17.0px;background:#6e3a30;"></div>
<svg style="left:1376.0px;top:145px" width="30.4" height="17"><path d="M1 3 L13.7 5 L1 7Z M15.2 3 L29.4 5 L15.2 7Z M1 10 L13.7 12 L1 14Z M15.2 10 L29.4 12 L15.2 14Z" fill="#2a0c10"/></svg>
<div style="left:1376.0px;top:162.0px;width:30.4px;height:2.0px;background:#c06858;"></div>
<div style="left:1376.0px;top:164.0px;width:30.4px;height:17.0px;background:#b0503e;"></div>
<div class="t" style="left:1378.0px;top:167.0px;font-size:11px;color:#ffe6dc;font-weight:normal;">Clap</div>
<div style="left:1376.0px;top:181.0px;width:30.4px;height:24.0px;background:#a04c34;"></div>
<div style="left:1377.0px;top:184.0px;width:28.4px;height:2.0px;background:#4a1a18;"></div>
<div style="left:1377.0px;top:189.0px;width:28.4px;height:2.0px;background:#4a1a18;"></div>
<div style="left:1377.0px;top:194.0px;width:28.4px;height:2.0px;background:#4a1a18;"></div>
<div style="left:1377.0px;top:199.0px;width:28.4px;height:2.0px;background:#4a1a18;"></div>
<div style="left:1376.0px;top:144.0px;width:1.0px;height:61.0px;background:rgba(30,10,20,0.6);"></div>
<div style="left:1406.4px;top:144.0px;width:30.4px;height:61.0px;background:#9a4a38;"></div>
<div style="left:1406.4px;top:145.0px;width:30.4px;height:17.0px;background:#6e3a30;"></div>
<svg style="left:1406.4px;top:145px" width="30.4" height="17"><path d="M1 3 L13.7 5 L1 7Z M15.2 3 L29.4 5 L15.2 7Z M1 10 L13.7 12 L1 14Z M15.2 10 L29.4 12 L15.2 14Z" fill="#2a0c10"/></svg>
<div style="left:1406.4px;top:162.0px;width:30.4px;height:2.0px;background:#c06858;"></div>
<div style="left:1406.4px;top:164.0px;width:30.4px;height:17.0px;background:#b0503e;"></div>
<div class="t" style="left:1408.4px;top:167.0px;font-size:11px;color:#ffe6dc;font-weight:normal;">Clap</div>
<div style="left:1406.4px;top:181.0px;width:30.4px;height:24.0px;background:#a04c34;"></div>
<div style="left:1407.4px;top:184.0px;width:28.4px;height:2.0px;background:#4a1a18;"></div>
<div style="left:1407.4px;top:189.0px;width:28.4px;height:2.0px;background:#4a1a18;"></div>
<div style="left:1407.4px;top:194.0px;width:28.4px;height:2.0px;background:#4a1a18;"></div>
<div style="left:1407.4px;top:199.0px;width:28.4px;height:2.0px;background:#4a1a18;"></div>
<div style="left:1406.4px;top:144.0px;width:1.0px;height:61.0px;background:rgba(30,10,20,0.6);"></div>
<div style="left:1436.8px;top:144.0px;width:30.4px;height:61.0px;background:#9a4a38;"></div>
<div style="left:1436.8px;top:145.0px;width:30.4px;height:17.0px;background:#6e3a30;"></div>
<svg style="left:1436.8px;top:145px" width="30.4" height="17"><path d="M1 3 L13.7 5 L1 7Z M15.2 3 L29.4 5 L15.2 7Z M1 10 L13.7 12 L1 14Z M15.2 10 L29.4 12 L15.2 14Z" fill="#2a0c10"/></svg>
<div style="left:1436.8px;top:162.0px;width:30.4px;height:2.0px;background:#c06858;"></div>
<div style="left:1436.8px;top:164.0px;width:30.4px;height:17.0px;background:#b0503e;"></div>
<div class="t" style="left:1438.8px;top:167.0px;font-size:11px;color:#ffe6dc;font-weight:normal;">Clap</div>
<div style="left:1436.8px;top:181.0px;width:30.4px;height:24.0px;background:#a04c34;"></div>
<div style="left:1437.8px;top:184.0px;width:28.4px;height:2.0px;background:#4a1a18;"></div>
<div style="left:1437.8px;top:189.0px;width:28.4px;height:2.0px;background:#4a1a18;"></div>
<div style="left:1437.8px;top:194.0px;width:28.4px;height:2.0px;background:#4a1a18;"></div>
<div style="left:1437.8px;top:199.0px;width:28.4px;height:2.0px;background:#4a1a18;"></div>
<div style="left:1436.8px;top:144.0px;width:1.0px;height:61.0px;background:rgba(30,10,20,0.6);"></div>
<div style="left:1467.2px;top:144.0px;width:30.4px;height:61.0px;background:#9a4a38;"></div>
<div style="left:1467.2px;top:145.0px;width:30.4px;height:17.0px;background:#6e3a30;"></div>
<svg style="left:1467.2px;top:145px" width="30.4" height="17"><path d="M1 3 L13.7 5 L1 7Z M15.2 3 L29.4 5 L15.2 7Z M1 10 L13.7 12 L1 14Z M15.2 10 L29.4 12 L15.2 14Z" fill="#2a0c10"/></svg>
<div style="left:1467.2px;top:162.0px;width:30.4px;height:2.0px;background:#c06858;"></div>
<div style="left:1467.2px;top:164.0px;width:30.4px;height:17.0px;background:#b0503e;"></div>
<div class="t" style="left:1469.2px;top:167.0px;font-size:11px;color:#ffe6dc;font-weight:normal;">Clap</div>
<div style="left:1467.2px;top:181.0px;width:30.4px;height:24.0px;background:#a04c34;"></div>
<div style="left:1468.2px;top:184.0px;width:28.4px;height:2.0px;background:#4a1a18;"></div>
<div style="left:1468.2px;top:189.0px;width:28.4px;height:2.0px;background:#4a1a18;"></div>
<div style="left:1468.2px;top:194.0px;width:28.4px;height:2.0px;background:#4a1a18;"></div>
<div style="left:1468.2px;top:199.0px;width:28.4px;height:2.0px;background:#4a1a18;"></div>
<div style="left:1467.2px;top:144.0px;width:1.0px;height:61.0px;background:rgba(30,10,20,0.6);"></div>
<div style="left:1497.6px;top:144.0px;width:30.4px;height:61.0px;background:#9a4a38;"></div>
<div style="left:1497.6px;top:145.0px;width:30.4px;height:17.0px;background:#6e3a30;"></div>
<svg style="left:1497.6px;top:145px" width="30.4" height="17"><path d="M1 3 L13.7 5 L1 7Z M15.2 3 L29.4 5 L15.2 7Z M1 10 L13.7 12 L1 14Z M15.2 10 L29.4 12 L15.2 14Z" fill="#2a0c10"/></svg>
<div style="left:1497.6px;top:162.0px;width:30.4px;height:2.0px;background:#c06858;"></div>
<div style="left:1497.6px;top:164.0px;width:30.4px;height:17.0px;background:#b0503e;"></div>
<div class="t" style="left:1499.6px;top:167.0px;font-size:11px;color:#ffe6dc;font-weight:normal;">Clap</div>
<div style="left:1497.6px;top:181.0px;width:30.4px;height:24.0px;background:#a04c34;"></div>
<div style="left:1498.6px;top:184.0px;width:28.4px;height:2.0px;background:#4a1a18;"></div>
<div style="left:1498.6px;top:189.0px;width:28.4px;height:2.0px;background:#4a1a18;"></div>
<div style="left:1498.6px;top:194.0px;width:28.4px;height:2.0px;background:#4a1a18;"></div>
<div style="left:1498.6px;top:199.0px;width:28.4px;height:2.0px;background:#4a1a18;"></div>
<div style="left:1497.6px;top:144.0px;width:1.0px;height:61.0px;background:rgba(30,10,20,0.6);"></div>
<div style="left:1528.0px;top:144.0px;width:27.0px;height:61.0px;background:#2f4856;"></div>
<svg style="left:1528.0px;top:145px" width="27.0" height="17"><path d="M2 3 L13.5 5 L2 7Z M2 10 L13.5 12 L2 14Z M14.9 4h10.8 M14.9 11h10.8" fill="#b8d0dc" stroke="#b8d0dc" stroke-width="1.5"/></svg>
<div style="left:1528.0px;top:163.0px;width:27.0px;height:2.0px;background:#c8d8e0;"></div>
<div style="left:1528.0px;top:165.0px;width:27.0px;height:16.0px;background:#a2b6c2;"></div>
<div class="t" style="left:1530.0px;top:167.0px;font-size:11px;color:#24343e;font-weight:normal;">Clap</div>
<div style="left:1529.0px;top:187.0px;width:25.0px;height:2.0px;background:#b0c8d4;"></div>
<div style="left:1529.0px;top:195.0px;width:25.0px;height:2.0px;background:#b0c8d4;"></div>
<div style="left:1528.0px;top:144.0px;width:1.0px;height:61.0px;background:rgba(30,10,20,0.6);"></div>
<div style="left:1555.0px;top:144.0px;width:27.0px;height:61.0px;background:#2f4856;"></div>
<svg style="left:1555.0px;top:145px" width="27.0" height="17"><path d="M2 3 L13.5 5 L2 7Z M2 10 L13.5 12 L2 14Z M14.9 4h10.8 M14.9 11h10.8" fill="#b8d0dc" stroke="#b8d0dc" stroke-width="1.5"/></svg>
<div style="left:1555.0px;top:163.0px;width:27.0px;height:2.0px;background:#c8d8e0;"></div>
<div style="left:1555.0px;top:165.0px;width:27.0px;height:16.0px;background:#a2b6c2;"></div>
<div class="t" style="left:1557.0px;top:167.0px;font-size:11px;color:#24343e;font-weight:normal;">Clap</div>
<div style="left:1556.0px;top:187.0px;width:25.0px;height:2.0px;background:#b0c8d4;"></div>
<div style="left:1556.0px;top:195.0px;width:25.0px;height:2.0px;background:#b0c8d4;"></div>
<div style="left:1555.0px;top:144.0px;width:1.0px;height:61.0px;background:rgba(30,10,20,0.6);"></div>
<div style="left:1582.0px;top:144.0px;width:27.0px;height:61.0px;background:#2f4856;"></div>
<svg style="left:1582.0px;top:145px" width="27.0" height="17"><path d="M2 3 L13.5 5 L2 7Z M2 10 L13.5 12 L2 14Z M14.9 4h10.8 M14.9 11h10.8" fill="#b8d0dc" stroke="#b8d0dc" stroke-width="1.5"/></svg>
<div style="left:1582.0px;top:163.0px;width:27.0px;height:2.0px;background:#c8d8e0;"></div>
<div style="left:1582.0px;top:165.0px;width:27.0px;height:16.0px;background:#a2b6c2;"></div>
<div class="t" style="left:1584.0px;top:167.0px;font-size:11px;color:#24343e;font-weight:normal;">Clap</div>
<div style="left:1583.0px;top:187.0px;width:25.0px;height:2.0px;background:#b0c8d4;"></div>
<div style="left:1583.0px;top:195.0px;width:25.0px;height:2.0px;background:#b0c8d4;"></div>
<div style="left:1582.0px;top:144.0px;width:1.0px;height:61.0px;background:rgba(30,10,20,0.6);"></div>
<div style="left:1609.0px;top:144.0px;width:27.0px;height:61.0px;background:#2f4856;"></div>
<svg style="left:1609.0px;top:145px" width="27.0" height="17"><path d="M2 3 L13.5 5 L2 7Z M2 10 L13.5 12 L2 14Z M14.9 4h10.8 M14.9 11h10.8" fill="#b8d0dc" stroke="#b8d0dc" stroke-width="1.5"/></svg>
<div style="left:1609.0px;top:163.0px;width:27.0px;height:2.0px;background:#c8d8e0;"></div>
<div style="left:1609.0px;top:165.0px;width:27.0px;height:16.0px;background:#a2b6c2;"></div>
<div class="t" style="left:1611.0px;top:167.0px;font-size:11px;color:#24343e;font-weight:normal;">Clap</div>
<div style="left:1610.0px;top:187.0px;width:25.0px;height:2.0px;background:#b0c8d4;"></div>
<div style="left:1610.0px;top:195.0px;width:25.0px;height:2.0px;background:#b0c8d4;"></div>
<div style="left:1609.0px;top:144.0px;width:1.0px;height:61.0px;background:rgba(30,10,20,0.6);"></div>
<div style="left:365.0px;top:207.0px;width:492.0px;height:16.0px;background:rgba(25,20,45,0.35);"></div>
<div style="left:1381.0px;top:207.0px;width:255.0px;height:24.0px;background:rgba(25,20,45,0.35);"></div>
<div style="left:110.0px;top:303.0px;width:747.0px;height:38.7px;background:#b1aad7;"></div>
<div style="left:110.0px;top:320.0px;width:747.0px;height:1.0px;background:rgba(70,60,120,0.75);"></div>
<svg style="left:110.0px;top:320.0px" width="747.0" height="19.7"><path d="M3.2 2.0h19.1M31.4 2.0h14.3M53.3 2.0h31.9M86.0 2.0h40.4M127.0 2.0h36.0M164.0 2.0h15.4M185.4 2.0h59.6M246.7 2.0h23.4M278.9 2.0h66.9M353.8 2.0h33.8M401.3 2.0h12.8M426.1 2.0h27.4M455.5 2.0h17.1M476.9 2.0h59.0M538.4 2.0h44.9M592.2 2.0h32.3M632.2 2.0h13.8M646.8 2.0h22.4M678.7 2.0h35.7M718.8 2.0h26.2M3.0 5.2h57.7M70.4 5.2h24.6M103.1 5.2h41.5M156.9 5.2h53.8M214.7 5.2h68.8M285.2 5.2h35.1M330.8 5.2h19.1M356.8 5.2h12.4M378.5 5.2h55.9M442.4 5.2h62.5M509.3 5.2h51.7M569.4 5.2h44.8M620.6 5.2h60.4M694.2 5.2h38.4M741.9 5.2h3.1M6.5 8.4h69.6M87.6 8.4h27.1M120.0 8.4h50.1M170.5 8.4h37.7M210.5 8.4h17.0M228.4 8.4h56.1M286.3 8.4h24.9M316.6 8.4h62.3M380.0 8.4h37.0M424.7 8.4h63.0M499.1 8.4h61.8M564.9 8.4h34.9M604.8 8.4h63.1M681.3 8.4h19.1M702.8 8.4h23.9M730.0 8.4h15.0M2.6 11.6h10.2M18.7 11.6h32.2M58.8 11.6h67.2M135.7 11.6h40.9M185.3 11.6h50.6M236.6 11.6h64.0M311.5 11.6h62.5M385.1 11.6h33.5M424.2 11.6h16.2M449.3 11.6h13.7M464.0 11.6h22.5M488.8 11.6h30.4M519.9 11.6h10.0M532.1 11.6h16.1M553.3 11.6h11.5M577.0 11.6h46.8M626.0 11.6h25.1M656.0 11.6h31.8M689.5 11.6h55.5M4.7 14.8h39.0M44.9 14.8h16.1M65.8 14.8h25.9M103.3 14.8h19.7M123.3 14.8h67.1M197.8 14.8h18.8M224.2 14.8h11.6M243.2 14.8h68.7M324.0 14.8h51.8M379.4 14.8h32.0M413.8 14.8h56.3M477.5 14.8h56.7M538.9 14.8h23.4M573.6 14.8h69.1M654.7 14.8h58.4M724.5 14.8h20.5M5.2 18.0h31.3M36.9 18.0h11.7M52.5 18.0h25.6M87.7 18.0h67.4M161.4 18.0h66.2M241.5 18.0h67.3M313.9 18.0h23.2M340.3 18.0h21.8M364.9 18.0h47.4M425.0 18.0h60.4M492.1 18.0h49.2M552.5 18.0h15.1M576.8 18.0h64.6M652.4 18.0h55.0M714.1 18.0h20.7M63.6 0v19.7M127.1 0v19.7M190.7 0v19.7M254.2 0v19.7M317.8 0v19.7M381.4 0v19.7M444.9 0v19.7M508.5 0v19.7M572.0 0v19.7M635.6 0v19.7M699.2 0v19.7" stroke="rgba(45,36,95,0.5)" stroke-width="1.2" fill="none"/></svg>
<div style="left:110.0px;top:340.7px;width:747.0px;height:1.0px;background:rgba(60,50,100,0.5);"></div>
<div style="left:237.1px;top:303.0px;width:1.5px;height:38.7px;background:rgba(55,45,100,0.75);"></div>
<div style="left:364.2px;top:303.0px;width:1.5px;height:38.7px;background:rgba(55,45,100,0.75);"></div>
<div style="left:491.4px;top:303.0px;width:1.5px;height:38.7px;background:rgba(55,45,100,0.75);"></div>
<div style="left:618.5px;top:303.0px;width:1.5px;height:38.7px;background:rgba(55,45,100,0.75);"></div>
<div style="left:745.6px;top:303.0px;width:1.5px;height:38.7px;background:rgba(55,45,100,0.75);"></div>
<div style="left:857.0px;top:303.0px;width:16.0px;height:38.7px;background:#8fb3bd;"></div>
<div style="left:857.0px;top:320.3px;width:16.0px;height:20.3px;background:#4e6f80;"></div>
<div style="left:873.0px;top:303.0px;width:747.0px;height:38.7px;background:#b1aad7;"></div>
<div style="left:873.0px;top:320.0px;width:747.0px;height:1.0px;background:rgba(70,60,120,0.75);"></div>
<svg style="left:873.0px;top:320.0px" width="747.0" height="19.7"><path d="M3.3 2.0h58.0M75.0 2.0h33.8M114.3 2.0h66.8M191.3 2.0h20.2M213.3 2.0h19.1M245.0 2.0h58.4M305.5 2.0h59.6M378.8 2.0h49.4M433.1 2.0h42.9M477.9 2.0h10.9M502.3 2.0h49.0M558.7 2.0h66.0M630.8 2.0h62.3M704.6 2.0h22.7M730.8 2.0h14.2M5.9 5.2h25.6M37.3 5.2h17.9M67.9 5.2h31.2M105.5 5.2h45.0M163.2 5.2h35.2M211.3 5.2h40.1M258.8 5.2h41.4M300.5 5.2h36.4M339.5 5.2h10.2M360.9 5.2h20.3M387.9 5.2h53.5M449.2 5.2h29.6M486.0 5.2h43.3M540.3 5.2h16.4M564.5 5.2h24.9M593.3 5.2h56.3M656.7 5.2h43.7M711.1 5.2h33.9M6.1 8.4h40.3M53.6 8.4h51.6M111.5 8.4h42.0M160.2 8.4h66.5M236.5 8.4h62.6M312.3 8.4h25.6M345.7 8.4h66.6M424.0 8.4h18.2M444.0 8.4h36.5M481.5 8.4h24.4M507.0 8.4h50.2M568.1 8.4h63.8M634.1 8.4h53.0M696.3 8.4h18.6M727.3 8.4h17.7M9.5 11.6h33.9M50.2 11.6h69.4M131.3 11.6h19.7M157.0 11.6h40.9M202.7 11.6h21.7M228.9 11.6h53.3M282.5 11.6h43.2M331.9 11.6h11.1M347.6 11.6h47.4M402.3 11.6h13.9M429.9 11.6h57.3M500.8 11.6h16.3M520.8 11.6h12.4M544.1 11.6h26.2M572.1 11.6h35.3M620.2 11.6h59.1M683.0 11.6h19.0M714.8 11.6h30.2M0.9 14.8h13.5M24.0 14.8h35.5M60.5 14.8h66.3M135.7 14.8h58.1M195.0 14.8h61.4M257.3 14.8h61.8M325.4 14.8h30.3M363.5 14.8h65.6M432.8 14.8h17.8M458.0 14.8h24.3M483.8 14.8h19.7M504.2 14.8h22.1M530.7 14.8h28.3M569.6 14.8h27.4M604.0 14.8h20.7M629.5 14.8h11.1M644.1 14.8h10.9M665.3 14.8h43.1M711.0 14.8h34.0M1.1 18.0h59.1M66.2 18.0h39.7M117.6 18.0h33.6M158.3 18.0h51.3M223.3 18.0h30.6M265.5 18.0h52.4M326.9 18.0h34.3M366.0 18.0h13.3M381.1 18.0h14.2M405.7 18.0h25.3M433.3 18.0h15.1M460.2 18.0h62.2M531.8 18.0h26.9M562.1 18.0h27.6M596.1 18.0h19.5M621.8 18.0h25.8M661.1 18.0h68.4M737.1 18.0h7.9M63.6 0v19.7M127.1 0v19.7M190.7 0v19.7M254.2 0v19.7M317.8 0v19.7M381.4 0v19.7M444.9 0v19.7M508.5 0v19.7M572.0 0v19.7M635.6 0v19.7M699.2 0v19.7" stroke="rgba(45,36,95,0.5)" stroke-width="1.2" fill="none"/></svg>
<div style="left:873.0px;top:340.7px;width:747.0px;height:1.0px;background:rgba(60,50,100,0.5);"></div>
<div style="left:1000.1px;top:303.0px;width:1.5px;height:38.7px;background:rgba(55,45,100,0.75);"></div>
<div style="left:1127.2px;top:303.0px;width:1.5px;height:38.7px;background:rgba(55,45,100,0.75);"></div>
<div style="left:1254.4px;top:303.0px;width:1.5px;height:38.7px;background:rgba(55,45,100,0.75);"></div>
<div style="left:1381.5px;top:303.0px;width:1.5px;height:38.7px;background:rgba(55,45,100,0.75);"></div>
<div style="left:1508.6px;top:303.0px;width:1.5px;height:38.7px;background:rgba(55,45,100,0.75);"></div>
<div style="left:1620.0px;top:303.0px;width:16.0px;height:38.7px;background:#8fb3bd;"></div>
<div style="left:1620.0px;top:320.3px;width:16.0px;height:20.3px;background:#4e6f80;"></div>
<div style="left:1636.0px;top:303.0px;width:491.0px;height:38.7px;background:#b1aad7;"></div>
<div style="left:1636.0px;top:320.0px;width:491.0px;height:1.0px;background:rgba(70,60,120,0.75);"></div>
<svg style="left:1636.0px;top:320.0px" width="491.0" height="19.7"><path d="M3.1 2.0h31.4M34.5 2.0h32.9M74.0 2.0h40.2M117.0 2.0h40.3M157.4 2.0h25.9M184.5 2.0h34.0M219.0 2.0h11.3M234.7 2.0h24.0M266.8 2.0h41.8M319.1 2.0h49.5M378.6 2.0h62.7M446.8 2.0h29.6M1.5 5.2h53.4M63.9 5.2h12.6M88.3 5.2h63.5M160.6 5.2h54.0M226.0 5.2h18.4M251.7 5.2h40.3M303.6 5.2h58.3M373.5 5.2h45.0M431.0 5.2h51.0M2.3 8.4h11.9M16.0 8.4h31.6M49.1 8.4h60.1M117.1 8.4h47.7M173.5 8.4h50.8M231.2 8.4h10.2M252.6 8.4h54.9M314.5 8.4h42.1M365.9 8.4h14.0M390.2 8.4h25.1M416.3 8.4h25.9M452.5 8.4h22.3M485.1 8.4h3.9M3.8 11.6h38.7M52.1 11.6h56.0M116.8 11.6h48.6M166.4 11.6h18.8M188.8 11.6h54.6M247.7 11.6h44.1M291.9 11.6h13.6M309.3 11.6h50.3M369.4 11.6h50.5M424.0 11.6h41.0M471.5 11.6h17.5M8.9 14.8h22.0M44.6 14.8h66.2M111.0 14.8h37.5M160.0 14.8h68.1M234.4 14.8h26.1M263.5 14.8h66.7M333.1 14.8h44.9M380.0 14.8h41.4M434.8 14.8h18.0M464.2 14.8h24.8M7.0 18.0h23.9M43.5 18.0h39.2M83.0 18.0h10.2M100.1 18.0h37.0M141.4 18.0h18.4M164.6 18.0h29.0M205.4 18.0h10.1M226.0 18.0h60.3M288.0 18.0h65.6M363.6 18.0h64.1M431.7 18.0h32.3M469.6 18.0h19.4M63.6 0v19.7M127.1 0v19.7M190.7 0v19.7M254.2 0v19.7M317.8 0v19.7M381.4 0v19.7M444.9 0v19.7" stroke="rgba(45,36,95,0.5)" stroke-width="1.2" fill="none"/></svg>
<div style="left:1636.0px;top:340.7px;width:491.0px;height:1.0px;background:rgba(60,50,100,0.5);"></div>
<div style="left:1763.1px;top:303.0px;width:1.5px;height:38.7px;background:rgba(55,45,100,0.75);"></div>
<div style="left:1890.2px;top:303.0px;width:1.5px;height:38.7px;background:rgba(55,45,100,0.75);"></div>
<div style="left:2017.4px;top:303.0px;width:1.5px;height:38.7px;background:rgba(55,45,100,0.75);"></div>
<div style="left:365.0px;top:343.7px;width:492.0px;height:38.7px;background:#b1aad7;"></div>
<div style="left:365.0px;top:360.7px;width:492.0px;height:1.0px;background:rgba(70,60,120,0.75);"></div>
<svg style="left:365.0px;top:360.7px" width="492.0" height="19.7"><path d="M3.6 2.0h35.7M43.1 2.0h12.9M57.5 2.0h60.1M121.5 2.0h66.1M191.2 2.0h25.9M224.3 2.0h21.4M250.9 2.0h67.4M330.6 2.0h58.7M398.2 2.0h64.8M476.2 2.0h13.8M0.5 5.2h53.9M60.7 5.2h55.2M124.9 5.2h27.2M152.8 5.2h65.6M220.2 5.2h38.3M263.3 5.2h27.9M301.5 5.2h68.6M373.8 5.2h49.4M427.3 5.2h43.4M476.3 5.2h13.7M2.1 8.4h64.4M73.4 8.4h23.2M109.3 8.4h69.8M185.4 8.4h18.4M206.4 8.4h15.4M226.7 8.4h15.5M245.5 8.4h25.5M279.0 8.4h63.2M352.7 8.4h34.8M393.3 8.4h41.5M440.0 8.4h30.3M471.1 8.4h18.9M1.3 11.6h40.2M50.3 11.6h61.8M115.1 11.6h26.3M144.8 11.6h34.0M185.0 11.6h67.2M264.2 11.6h62.4M326.8 11.6h11.9M348.7 11.6h63.7M419.1 11.6h45.2M464.3 11.6h25.7M8.3 14.8h61.3M83.2 14.8h24.9M109.6 14.8h19.3M136.2 14.8h50.9M200.3 14.8h53.3M262.7 14.8h55.9M325.0 14.8h43.1M368.6 14.8h56.9M428.8 14.8h61.2M3.0 18.0h17.7M24.2 18.0h48.2M82.2 18.0h16.7M99.9 18.0h41.5M149.5 18.0h33.3M186.0 18.0h46.1M232.2 18.0h28.1M266.7 18.0h67.5M343.3 18.0h63.0M412.9 18.0h24.1M440.5 18.0h49.5M63.6 0v19.7M127.1 0v19.7M190.7 0v19.7M254.2 0v19.7M317.8 0v19.7M381.4 0v19.7M444.9 0v19.7" stroke="rgba(45,36,95,0.5)" stroke-width="1.2" fill="none"/></svg>
<div style="left:365.0px;top:381.4px;width:492.0px;height:1.0px;background:rgba(60,50,100,0.5);"></div>
<div style="left:492.1px;top:343.7px;width:1.5px;height:38.7px;background:rgba(55,45,100,0.75);"></div>
<div style="left:619.2px;top:343.7px;width:1.5px;height:38.7px;background:rgba(55,45,100,0.75);"></div>
<div style="left:746.4px;top:343.7px;width:1.5px;height:38.7px;background:rgba(55,45,100,0.75);"></div>
<div style="left:857.0px;top:343.7px;width:16.0px;height:38.7px;background:#8fb3bd;"></div>
<div style="left:857.0px;top:361.0px;width:16.0px;height:20.3px;background:#4e6f80;"></div>
<div style="left:1381.0px;top:343.7px;width:239.0px;height:38.7px;background:#b1aad7;"></div>
<div style="left:1381.0px;top:360.7px;width:239.0px;height:1.0px;background:rgba(70,60,120,0.75);"></div>
<svg style="left:1381.0px;top:360.7px" width="239.0" height="19.7"><path d="M3.1 2.0h11.3M21.4 2.0h50.5M77.7 2.0h25.4M112.5 2.0h65.5M181.2 2.0h12.0M197.9 2.0h35.2M2.0 5.2h57.8M70.2 5.2h40.3M113.3 5.2h68.2M185.9 5.2h51.1M2.2 8.4h55.6M62.0 8.4h67.1M136.0 8.4h21.2M160.4 8.4h35.0M204.7 8.4h32.3M3.9 11.6h22.8M40.3 11.6h18.5M59.6 11.6h13.6M78.7 11.6h63.9M155.0 11.6h54.0M222.9 11.6h14.1M1.9 14.8h66.2M78.5 14.8h11.9M99.7 14.8h32.7M137.6 14.8h29.9M169.9 14.8h10.2M184.0 14.8h31.1M228.4 14.8h8.6M2.1 18.0h31.4M45.0 18.0h59.3M110.3 18.0h13.0M129.9 18.0h32.4M175.2 18.0h21.6M201.8 18.0h35.2M63.6 0v19.7M127.1 0v19.7M190.7 0v19.7" stroke="rgba(45,36,95,0.5)" stroke-width="1.2" fill="none"/></svg>
<div style="left:1381.0px;top:381.4px;width:239.0px;height:1.0px;background:rgba(60,50,100,0.5);"></div>
<div style="left:1508.1px;top:343.7px;width:1.5px;height:38.7px;background:rgba(55,45,100,0.75);"></div>
<div style="left:1620.0px;top:343.7px;width:16.0px;height:38.7px;background:#8fb3bd;"></div>
<div style="left:1620.0px;top:361.0px;width:16.0px;height:20.3px;background:#4e6f80;"></div>
<div style="left:365.0px;top:384.4px;width:492.0px;height:38.7px;background:#b1aad7;"></div>
<div style="left:365.0px;top:401.4px;width:492.0px;height:1.0px;background:rgba(70,60,120,0.75);"></div>
<svg style="left:365.0px;top:401.4px" width="492.0" height="19.7"><path d="M4.1 2.0h58.7M73.6 2.0h12.4M86.5 2.0h13.8M113.1 2.0h25.4M149.0 2.0h63.9M217.7 2.0h26.3M257.4 2.0h47.0M308.1 2.0h53.0M365.5 2.0h26.5M392.1 2.0h55.3M460.3 2.0h29.7M0.2 5.2h24.0M30.9 5.2h67.4M111.7 5.2h33.2M148.4 5.2h35.8M191.1 5.2h65.7M259.3 5.2h58.2M327.8 5.2h59.4M398.0 5.2h46.4M449.0 5.2h29.2M483.3 5.2h6.7M2.0 8.4h55.2M60.6 8.4h13.9M75.0 8.4h43.2M122.7 8.4h68.8M203.9 8.4h69.3M276.8 8.4h15.0M293.2 8.4h39.9M343.1 8.4h36.8M383.2 8.4h35.0M426.9 8.4h50.4M487.8 8.4h2.2M1.2 11.6h60.5M65.8 11.6h44.0M115.0 11.6h54.3M172.1 11.6h24.8M200.4 11.6h19.2M231.9 11.6h44.7M281.2 11.6h33.8M328.9 11.6h40.4M372.5 11.6h58.5M440.2 11.6h49.8M4.7 14.8h59.1M75.7 14.8h64.9M141.1 14.8h27.6M170.4 14.8h21.4M205.4 14.8h45.0M263.4 14.8h32.3M307.8 14.8h36.9M348.4 14.8h56.7M418.3 14.8h16.3M443.0 14.8h47.0M3.7 18.0h18.5M25.0 18.0h25.3M58.7 18.0h49.1M110.7 18.0h10.7M125.9 18.0h50.7M179.2 18.0h28.7M210.8 18.0h57.7M276.2 18.0h13.8M291.4 18.0h33.7M332.8 18.0h48.4M382.4 18.0h19.8M412.0 18.0h34.6M450.6 18.0h28.5M63.6 0v19.7M127.1 0v19.7M190.7 0v19.7M254.2 0v19.7M317.8 0v19.7M381.4 0v19.7M444.9 0v19.7" stroke="rgba(45,36,95,0.5)" stroke-width="1.2" fill="none"/></svg>
<div style="left:365.0px;top:422.1px;width:492.0px;height:1.0px;background:rgba(60,50,100,0.5);"></div>
<div style="left:492.1px;top:384.4px;width:1.5px;height:38.7px;background:rgba(55,45,100,0.75);"></div>
<div style="left:619.2px;top:384.4px;width:1.5px;height:38.7px;background:rgba(55,45,100,0.75);"></div>
<div style="left:746.4px;top:384.4px;width:1.5px;height:38.7px;background:rgba(55,45,100,0.75);"></div>
<div style="left:857.0px;top:384.4px;width:16.0px;height:38.7px;background:#8fb3bd;"></div>
<div style="left:857.0px;top:401.7px;width:16.0px;height:20.3px;background:#4e6f80;"></div>
<div style="left:1381.0px;top:384.4px;width:239.0px;height:38.7px;background:#b1aad7;"></div>
<div style="left:1381.0px;top:401.4px;width:239.0px;height:1.0px;background:rgba(70,60,120,0.75);"></div>
<svg style="left:1381.0px;top:401.4px" width="239.0" height="19.7"><path d="M3.1 2.0h44.0M52.1 2.0h35.0M99.2 2.0h69.8M174.1 2.0h21.8M206.1 2.0h22.2M228.4 2.0h8.6M8.2 5.2h34.4M54.9 5.2h37.7M94.9 5.2h10.9M113.5 5.2h48.4M174.7 5.2h15.3M198.7 5.2h32.3M1.5 8.4h27.0M35.8 8.4h65.5M102.8 8.4h39.4M153.5 8.4h68.0M224.3 8.4h12.7M9.8 11.6h39.0M49.5 11.6h65.6M120.5 11.6h64.3M193.4 11.6h43.6M7.9 14.8h23.3M36.8 14.8h60.8M109.2 14.8h21.0M133.3 14.8h34.0M174.5 14.8h33.0M209.2 14.8h24.8M9.0 18.0h12.5M29.3 18.0h55.4M85.3 18.0h60.3M147.2 18.0h46.0M200.9 18.0h36.1M63.6 0v19.7M127.1 0v19.7M190.7 0v19.7" stroke="rgba(45,36,95,0.5)" stroke-width="1.2" fill="none"/></svg>
<div style="left:1381.0px;top:422.1px;width:239.0px;height:1.0px;background:rgba(60,50,100,0.5);"></div>
<div style="left:1508.1px;top:384.4px;width:1.5px;height:38.7px;background:rgba(55,45,100,0.75);"></div>
<div style="left:1620.0px;top:384.4px;width:16.0px;height:38.7px;background:#8fb3bd;"></div>
<div style="left:1620.0px;top:401.7px;width:16.0px;height:20.3px;background:#4e6f80;"></div>
<div style="left:365.0px;top:465.8px;width:492.0px;height:38.7px;background:#b1aad7;"></div>
<div style="left:365.0px;top:482.8px;width:492.0px;height:1.0px;background:rgba(70,60,120,0.75);"></div>
<svg style="left:365.0px;top:482.8px" width="492.0" height="19.7"><path d="M4.2 2.0h45.0M55.1 2.0h49.5M110.9 2.0h36.3M147.5 2.0h47.1M201.5 2.0h24.1M236.3 2.0h56.8M299.5 2.0h20.8M326.9 2.0h16.4M345.2 2.0h35.8M382.3 2.0h36.5M425.9 2.0h12.4M447.3 2.0h14.9M472.5 2.0h17.5M0.5 5.2h40.2M46.1 5.2h67.1M115.0 5.2h61.4M190.4 5.2h53.9M255.7 5.2h21.6M291.1 5.2h39.5M344.0 5.2h65.0M411.3 5.2h57.3M481.6 5.2h8.4M7.6 8.4h19.5M39.6 8.4h26.5M77.6 8.4h18.6M103.2 8.4h65.2M171.3 8.4h25.8M204.2 8.4h29.1M233.8 8.4h20.9M257.0 8.4h66.2M332.7 8.4h63.7M398.8 8.4h57.1M457.5 8.4h32.5M3.6 11.6h62.4M73.7 11.6h44.8M130.9 11.6h16.3M161.1 11.6h47.8M214.4 11.6h57.9M276.0 11.6h69.4M353.5 11.6h31.6M395.8 11.6h36.5M434.8 11.6h54.6M8.2 14.8h25.2M42.4 14.8h69.0M119.6 14.8h49.8M173.8 14.8h10.1M184.4 14.8h19.0M212.0 14.8h35.9M255.1 14.8h63.7M320.7 14.8h23.6M353.4 14.8h11.3M364.8 14.8h31.3M397.6 14.8h31.4M432.2 14.8h45.0M485.4 14.8h4.6M4.7 18.0h18.1M35.9 18.0h24.6M62.7 18.0h15.7M87.3 18.0h62.3M160.6 18.0h34.1M198.4 18.0h10.7M218.1 18.0h43.7M266.7 18.0h48.7M321.7 18.0h66.2M398.2 18.0h24.9M435.7 18.0h12.6M455.8 18.0h34.2M63.6 0v19.7M127.1 0v19.7M190.7 0v19.7M254.2 0v19.7M317.8 0v19.7M381.4 0v19.7M444.9 0v19.7" stroke="rgba(45,36,95,0.5)" stroke-width="1.2" fill="none"/></svg>
<div style="left:365.0px;top:503.5px;width:492.0px;height:1.0px;background:rgba(60,50,100,0.5);"></div>
<div style="left:492.1px;top:465.8px;width:1.5px;height:38.7px;background:rgba(55,45,100,0.75);"></div>
<div style="left:619.2px;top:465.8px;width:1.5px;height:38.7px;background:rgba(55,45,100,0.75);"></div>
<div style="left:746.4px;top:465.8px;width:1.5px;height:38.7px;background:rgba(55,45,100,0.75);"></div>
<div style="left:857.0px;top:465.8px;width:16.0px;height:38.7px;background:#8fb3bd;"></div>
<div style="left:857.0px;top:483.1px;width:16.0px;height:20.3px;background:#4e6f80;"></div>
<div style="left:1381.0px;top:465.8px;width:239.0px;height:38.7px;background:#b1aad7;"></div>
<div style="left:1381.0px;top:482.8px;width:239.0px;height:1.0px;background:rgba(70,60,120,0.75);"></div>
<svg style="left:1381.0px;top:482.8px" width="239.0" height="19.7"><path d="M0.6 2.0h56.7M57.5 2.0h43.1M113.7 2.0h18.5M135.0 2.0h46.5M188.6 2.0h48.4M1.7 5.2h28.6M34.5 5.2h12.9M59.9 5.2h57.0M126.9 5.2h10.4M149.1 5.2h54.7M210.3 5.2h26.7M2.3 8.4h16.3M21.8 8.4h12.3M38.9 8.4h55.0M103.6 8.4h60.7M174.2 8.4h26.0M208.0 8.4h29.0M5.2 11.6h25.9M40.1 11.6h67.9M111.1 11.6h62.8M174.1 11.6h25.6M203.0 11.6h34.0M7.5 14.8h29.6M49.4 14.8h29.7M82.5 14.8h64.5M155.7 14.8h51.6M216.6 14.8h20.4M8.4 18.0h51.9M72.3 18.0h36.2M118.6 18.0h44.2M167.2 18.0h22.7M198.6 18.0h14.7M226.0 18.0h11.0M63.6 0v19.7M127.1 0v19.7M190.7 0v19.7" stroke="rgba(45,36,95,0.5)" stroke-width="1.2" fill="none"/></svg>
<div style="left:1381.0px;top:503.5px;width:239.0px;height:1.0px;background:rgba(60,50,100,0.5);"></div>
<div style="left:1508.1px;top:465.8px;width:1.5px;height:38.7px;background:rgba(55,45,100,0.75);"></div>
<div style="left:1620.0px;top:465.8px;width:16.0px;height:38.7px;background:#8fb3bd;"></div>
<div style="left:1620.0px;top:483.1px;width:16.0px;height:20.3px;background:#4e6f80;"></div>
<div style="left:237.0px;top:425.1px;width:620.0px;height:38.7px;background:#b1aad7;"></div>
<div style="left:237.0px;top:442.1px;width:620.0px;height:1.0px;background:rgba(70,60,120,0.75);"></div>
<svg style="left:237.0px;top:442.1px" width="620.0" height="19.7"><path d="M0.0 14.0h6.4M7.6 11.0h8.9M17.2 12.0h6.4M24.2 16.0h7.6M33.1 13.0h8.9M43.2 9.0h6.4M50.8 7.0h7.6M59.1 12.0h4.4M63.6 14.0h6.4M71.2 11.0h8.9M80.7 12.0h6.4M87.7 16.0h7.6M96.6 13.0h8.9M106.8 9.0h6.4M114.4 7.0h7.6M122.7 12.0h4.4M127.1 14.0h6.4M134.7 11.0h8.9M144.3 12.0h6.4M151.3 16.0h7.6M160.2 13.0h8.9M170.3 9.0h6.4M178.0 7.0h7.6M186.2 12.0h4.4M190.7 14.0h6.4M198.3 11.0h8.9M207.8 12.0h6.4M214.8 16.0h7.6M223.7 13.0h8.9M233.9 9.0h6.4M241.5 7.0h7.6M249.8 12.0h4.4M254.2 14.0h6.4M261.9 11.0h8.9M271.4 12.0h6.4M278.4 16.0h7.6M287.3 13.0h8.9M297.5 9.0h6.4M305.1 7.0h7.6M313.4 12.0h4.4M317.8 14.0h6.4M325.4 11.0h8.9M335.0 12.0h6.4M342.0 16.0h7.6M350.9 13.0h8.9M361.0 9.0h6.4M368.6 7.0h7.6M376.9 12.0h4.4M381.4 14.0h6.4M389.0 11.0h8.9M398.5 12.0h6.4M405.5 16.0h7.6M414.4 13.0h8.9M424.6 9.0h6.4M432.2 7.0h7.6M440.5 12.0h4.4M444.9 14.0h6.4M452.5 11.0h8.9M462.1 12.0h6.4M469.1 16.0h7.6M478.0 13.0h8.9M488.1 9.0h6.4M495.8 7.0h7.6M504.0 12.0h4.4M508.5 14.0h6.4M516.1 11.0h8.9M525.6 12.0h6.4M532.6 16.0h7.6M541.5 13.0h8.9M551.7 9.0h6.4M559.3 7.0h7.6M567.6 12.0h4.4M572.0 14.0h6.4M579.7 11.0h8.9M589.2 12.0h6.4M596.2 16.0h7.6M605.1 13.0h8.9M615.3 9.0h2.7" stroke="rgba(35,28,80,0.85)" stroke-width="2" fill="none"/></svg>
<svg style="left:237.0px;top:442.1px" width="620.0" height="19.7"><path d="" stroke="rgba(45,36,95,0.85)" stroke-width="1.2" fill="none"/></svg>
<div style="left:237.0px;top:462.8px;width:620.0px;height:1.0px;background:rgba(60,50,100,0.5);"></div>
<div style="left:364.1px;top:425.1px;width:1.5px;height:38.7px;background:rgba(55,45,100,0.75);"></div>
<div style="left:491.2px;top:425.1px;width:1.5px;height:38.7px;background:rgba(55,45,100,0.75);"></div>
<div style="left:618.4px;top:425.1px;width:1.5px;height:38.7px;background:rgba(55,45,100,0.75);"></div>
<div style="left:745.5px;top:425.1px;width:1.5px;height:38.7px;background:rgba(55,45,100,0.75);"></div>
<div style="left:1381.0px;top:425.1px;width:239.0px;height:38.7px;background:#b1aad7;"></div>
<div style="left:1381.0px;top:442.1px;width:239.0px;height:1.0px;background:rgba(70,60,120,0.75);"></div>
<svg style="left:1381.0px;top:442.1px" width="239.0" height="19.7"><path d="M0.0 14.0h6.4M7.6 11.0h8.9M17.2 12.0h6.4M24.2 16.0h7.6M33.1 13.0h8.9M43.2 9.0h6.4M50.8 7.0h7.6M59.1 12.0h4.4M63.6 14.0h6.4M71.2 11.0h8.9M80.7 12.0h6.4M87.7 16.0h7.6M96.6 13.0h8.9M106.8 9.0h6.4M114.4 7.0h7.6M122.7 12.0h4.4M127.1 14.0h6.4M134.7 11.0h8.9M144.3 12.0h6.4M151.3 16.0h7.6M160.2 13.0h8.9M170.3 9.0h6.4M178.0 7.0h7.6M186.2 12.0h4.4M190.7 14.0h6.4M198.3 11.0h8.9M207.8 12.0h6.4M214.8 16.0h7.6M223.7 13.0h8.9M233.9 9.0h3.1" stroke="rgba(35,28,80,0.85)" stroke-width="2" fill="none"/></svg>
<svg style="left:1381.0px;top:442.1px" width="239.0" height="19.7"><path d="" stroke="rgba(45,36,95,0.85)" stroke-width="1.2" fill="none"/></svg>
<div style="left:1381.0px;top:462.8px;width:239.0px;height:1.0px;background:rgba(60,50,100,0.5);"></div>
<div style="left:1508.1px;top:425.1px;width:1.5px;height:38.7px;background:rgba(55,45,100,0.75);"></div>
<div style="left:619.0px;top:506.5px;width:238.0px;height:38.7px;background:#b1aad7;"></div>
<div style="left:619.0px;top:523.5px;width:238.0px;height:1.0px;background:rgba(70,60,120,0.75);"></div>
<svg style="left:619.0px;top:523.5px" width="238.0" height="19.7"><path d="M1.1 2.0h65.7M71.6 2.0h18.5M90.5 2.0h12.5M112.7 2.0h48.0M170.5 2.0h54.2M225.7 2.0h10.3M8.2 5.2h59.2M79.8 5.2h14.0M105.9 5.2h64.9M184.0 5.2h16.4M203.3 5.2h16.7M220.5 5.2h15.5M6.3 8.4h59.5M74.7 8.4h27.2M103.3 8.4h15.9M129.8 8.4h22.3M156.6 8.4h35.4M192.3 8.4h25.4M221.6 8.4h14.4M3.2 11.6h67.8M78.1 11.6h61.1M147.8 11.6h11.9M165.5 11.6h36.2M212.5 11.6h23.5M5.4 14.8h23.0M40.4 14.8h15.5M67.4 14.8h20.2M87.6 14.8h22.1M120.4 14.8h68.7M189.1 14.8h39.4M235.5 14.8h0.5M4.9 18.0h30.8M47.4 18.0h25.6M86.3 18.0h27.0M116.3 18.0h52.0M175.2 18.0h16.6M200.8 18.0h14.9M226.6 18.0h9.4M63.6 0v19.7M127.1 0v19.7M190.7 0v19.7" stroke="rgba(45,36,95,0.5)" stroke-width="1.2" fill="none"/></svg>
<div style="left:619.0px;top:544.2px;width:238.0px;height:1.0px;background:rgba(60,50,100,0.5);"></div>
<div style="left:746.1px;top:506.5px;width:1.5px;height:38.7px;background:rgba(55,45,100,0.75);"></div>
<div style="left:1381.0px;top:506.5px;width:239.0px;height:38.7px;background:#b1aad7;"></div>
<div style="left:1381.0px;top:523.5px;width:239.0px;height:1.0px;background:rgba(70,60,120,0.75);"></div>
<svg style="left:1381.0px;top:523.5px" width="239.0" height="19.7"><path d="M6.3 2.0h31.3M43.2 2.0h33.7M89.4 2.0h15.2M117.0 2.0h11.5M131.4 2.0h25.8M169.8 2.0h40.1M215.2 2.0h21.8M4.6 5.2h41.9M57.1 5.2h55.2M121.3 5.2h30.9M156.8 5.2h19.3M187.9 5.2h49.1M1.7 8.4h36.3M48.9 8.4h44.8M95.4 8.4h37.7M145.5 8.4h24.3M172.4 8.4h28.1M210.4 8.4h26.6M1.6 11.6h24.9M31.0 11.6h41.3M74.6 11.6h29.7M106.9 11.6h68.5M185.6 11.6h16.1M215.2 11.6h16.1M236.7 11.6h0.3M7.3 14.8h36.1M46.2 14.8h48.3M96.0 14.8h22.4M123.8 14.8h12.0M141.4 14.8h57.5M208.6 14.8h28.4M4.6 18.0h18.5M31.6 18.0h34.3M76.2 18.0h64.5M146.8 18.0h44.4M201.7 18.0h35.3M63.6 0v19.7M127.1 0v19.7M190.7 0v19.7" stroke="rgba(45,36,95,0.5)" stroke-width="1.2" fill="none"/></svg>
<div style="left:1381.0px;top:544.2px;width:239.0px;height:1.0px;background:rgba(60,50,100,0.5);"></div>
<div style="left:1508.1px;top:506.5px;width:1.5px;height:38.7px;background:rgba(55,45,100,0.75);"></div>
<div style="left:110.0px;top:547.2px;width:1526.0px;height:38.7px;background:#b1aad7;"></div>
<div class="t" style="left:112.0px;top:551.2px;width:124.1px;overflow:hidden;font-size:11px;color:#2a2545;letter-spacing:0.2px;word-spacing:4px;font-size:10.5px">DS SCB synth pad one</div>
<div class="t" style="left:239.1px;top:551.2px;width:124.1px;overflow:hidden;font-size:11px;color:#2a2545;letter-spacing:0.2px;word-spacing:4px;font-size:10.5px">DS SCB synth pad one</div>
<div style="left:237.1px;top:547.2px;width:1.0px;height:38.7px;background:rgba(50,40,90,0.7);"></div>
<div class="t" style="left:366.2px;top:551.2px;width:124.1px;overflow:hidden;font-size:11px;color:#2a2545;letter-spacing:0.2px;word-spacing:4px;font-size:10.5px">DS SCB synth pad one</div>
<div style="left:364.2px;top:547.2px;width:1.0px;height:38.7px;background:rgba(50,40,90,0.7);"></div>
<div class="t" style="left:493.4px;top:551.2px;width:124.1px;overflow:hidden;font-size:11px;color:#2a2545;letter-spacing:0.2px;word-spacing:4px;font-size:10.5px">DS SCB synth pad one</div>
<div style="left:491.4px;top:547.2px;width:1.0px;height:38.7px;background:rgba(50,40,90,0.7);"></div>
<div class="t" style="left:620.5px;top:551.2px;width:124.1px;overflow:hidden;font-size:11px;color:#2a2545;letter-spacing:0.2px;word-spacing:4px;font-size:10.5px">DS SCB synth pad one</div>
<div style="left:618.5px;top:547.2px;width:1.0px;height:38.7px;background:rgba(50,40,90,0.7);"></div>
<div class="t" style="left:747.6px;top:551.2px;width:124.1px;overflow:hidden;font-size:11px;color:#2a2545;letter-spacing:0.2px;word-spacing:4px;font-size:10.5px">DS SCB synth pad one</div>
<div style="left:745.6px;top:547.2px;width:1.0px;height:38.7px;background:rgba(50,40,90,0.7);"></div>
<div class="t" style="left:874.7px;top:551.2px;width:124.1px;overflow:hidden;font-size:11px;color:#2a2545;letter-spacing:0.2px;word-spacing:4px;font-size:10.5px">DS SCB synth pad one</div>
<div style="left:872.7px;top:547.2px;width:1.0px;height:38.7px;background:rgba(50,40,90,0.7);"></div>
<div class="t" style="left:1001.8px;top:551.2px;width:124.1px;overflow:hidden;font-size:11px;color:#2a2545;letter-spacing:0.2px;word-spacing:4px;font-size:10.5px">DS SCB synth pad one</div>
<div style="left:999.8px;top:547.2px;width:1.0px;height:38.7px;background:rgba(50,40,90,0.7);"></div>
<div class="t" style="left:1129.0px;top:551.2px;width:124.1px;overflow:hidden;font-size:11px;color:#2a2545;letter-spacing:0.2px;word-spacing:4px;font-size:10.5px">DS SCB synth pad one</div>
<div style="left:1127.0px;top:547.2px;width:1.0px;height:38.7px;background:rgba(50,40,90,0.7);"></div>
<div class="t" style="left:1256.1px;top:551.2px;width:124.1px;overflow:hidden;font-size:11px;color:#2a2545;letter-spacing:0.2px;word-spacing:4px;font-size:10.5px">DS SCB synth pad one</div>
<div style="left:1254.1px;top:547.2px;width:1.0px;height:38.7px;background:rgba(50,40,90,0.7);"></div>
<div class="t" style="left:1383.2px;top:551.2px;width:124.1px;overflow:hidden;font-size:11px;color:#2a2545;letter-spacing:0.2px;word-spacing:4px;font-size:10.5px">DS SCB synth pad one</div>
<div style="left:1381.2px;top:547.2px;width:1.0px;height:38.7px;background:rgba(50,40,90,0.7);"></div>
<div class="t" style="left:1510.3px;top:551.2px;width:124.1px;overflow:hidden;font-size:11px;color:#2a2545;letter-spacing:0.2px;word-spacing:4px;font-size:10.5px">DS SCB synth pad one</div>
<div style="left:1508.3px;top:547.2px;width:1.0px;height:38.7px;background:rgba(50,40,90,0.7);"></div>
<div style="left:110.0px;top:566.2px;width:1526.0px;height:4.0px;background:#231d40;"></div>
<div style="left:110.0px;top:576.2px;width:1526.0px;height:3.0px;background:#1e1a30;"></div>
<div style="left:110.0px;top:581.2px;width:1526.0px;height:1.0px;background:rgba(240,240,250,0.7);"></div>
<div style="left:857.0px;top:547.2px;width:16.0px;height:38.7px;background:#8fb3bd;"></div>
<div style="left:857.0px;top:564.5px;width:16.0px;height:20.4px;background:#4e6f80;"></div>
<div style="left:1620.0px;top:547.2px;width:16.0px;height:38.7px;background:#8fb3bd;"></div>
<div style="left:1620.0px;top:564.5px;width:16.0px;height:20.4px;background:#4e6f80;"></div>
<div style="left:222.0px;top:630.6px;width:16.0px;height:34.7px;background:#b1aad7;"></div>
<div class="t" style="left:223.0px;top:631.6px;font-size:9px;color:#2a2545;font-weight:normal;">{9</div>
<div style="left:223.0px;top:647.6px;width:14.0px;height:2.0px;background:#2a2545;"></div>
<div style="left:223.0px;top:654.6px;width:14.0px;height:2.0px;background:#2a2545;"></div>
<div style="left:349.0px;top:630.6px;width:16.0px;height:34.7px;background:#b1aad7;"></div>
<div class="t" style="left:350.0px;top:631.6px;font-size:9px;color:#2a2545;font-weight:normal;">{9</div>
<div style="left:350.0px;top:647.6px;width:14.0px;height:2.0px;background:#2a2545;"></div>
<div style="left:350.0px;top:654.6px;width:14.0px;height:2.0px;background:#2a2545;"></div>
<div style="left:603.0px;top:630.6px;width:16.0px;height:34.7px;background:#b1aad7;"></div>
<div class="t" style="left:604.0px;top:631.6px;font-size:9px;color:#2a2545;font-weight:normal;">{9</div>
<div style="left:604.0px;top:647.6px;width:14.0px;height:2.0px;background:#2a2545;"></div>
<div style="left:604.0px;top:654.6px;width:14.0px;height:2.0px;background:#2a2545;"></div>
<div style="left:873.0px;top:669.3px;width:508.0px;height:38.7px;background:#b1aad7;"></div>
<div style="left:873.0px;top:686.3px;width:508.0px;height:1.0px;background:rgba(70,60,120,0.75);"></div>
<svg style="left:873.0px;top:686.3px" width="508.0" height="19.7"><path d="M7.2 2.0h62.8M80.9 2.0h52.0M144.8 2.0h50.8M204.6 2.0h37.2M246.2 2.0h47.7M295.2 2.0h35.2M341.4 2.0h52.8M403.0 2.0h25.0M433.9 2.0h37.3M479.9 2.0h26.1M9.3 5.2h21.0M39.4 5.2h56.7M101.6 5.2h39.4M154.6 5.2h12.3M174.5 5.2h19.7M205.1 5.2h66.4M278.8 5.2h16.1M302.9 5.2h42.5M355.4 5.2h40.7M405.1 5.2h59.7M472.1 5.2h33.9M2.1 8.4h51.1M58.7 8.4h55.8M116.1 8.4h69.1M190.2 8.4h13.4M207.4 8.4h34.0M241.6 8.4h35.1M282.6 8.4h51.9M339.4 8.4h25.9M368.5 8.4h54.5M436.1 8.4h41.6M480.8 8.4h25.2M2.1 11.6h17.8M30.8 11.6h58.6M98.2 11.6h38.1M144.2 11.6h23.6M181.3 11.6h31.2M221.4 11.6h59.1M292.0 11.6h38.1M334.2 11.6h42.9M378.8 11.6h60.0M443.8 11.6h61.0M3.8 14.8h25.2M34.9 14.8h21.2M56.1 14.8h53.3M113.4 14.8h24.7M142.3 14.8h38.8M187.1 14.8h48.2M244.5 14.8h31.7M289.3 14.8h61.3M351.4 14.8h59.7M423.7 14.8h57.0M482.7 14.8h23.3M0.1 18.0h10.7M24.2 18.0h49.4M77.0 18.0h16.1M95.1 18.0h24.0M130.0 18.0h30.8M162.9 18.0h64.2M238.2 18.0h20.1M270.8 18.0h46.5M328.2 18.0h50.1M390.9 18.0h57.3M459.9 18.0h21.8M491.4 18.0h14.6M63.6 0v19.7M127.1 0v19.7M190.7 0v19.7M254.2 0v19.7M317.8 0v19.7M381.4 0v19.7M444.9 0v19.7" stroke="rgba(45,36,95,0.5)" stroke-width="1.2" fill="none"/></svg>
<div style="left:873.0px;top:707.0px;width:508.0px;height:1.0px;background:rgba(60,50,100,0.5);"></div>
<div style="left:1000.1px;top:669.3px;width:1.5px;height:38.7px;background:rgba(55,45,100,0.75);"></div>
<div style="left:1127.2px;top:669.3px;width:1.5px;height:38.7px;background:rgba(55,45,100,0.75);"></div>
<div style="left:1254.4px;top:669.3px;width:1.5px;height:38.7px;background:rgba(55,45,100,0.75);"></div>
<div style="left:1636.0px;top:669.3px;width:253.0px;height:38.7px;background:#b1aad7;"></div>
<div style="left:1636.0px;top:686.3px;width:253.0px;height:1.0px;background:rgba(70,60,120,0.75);"></div>
<svg style="left:1636.0px;top:686.3px" width="253.0" height="19.7"><path d="M4.4 2.0h63.0M75.1 2.0h25.9M104.3 2.0h18.4M129.5 2.0h13.5M149.6 2.0h18.7M175.1 2.0h39.9M222.6 2.0h28.4M8.4 5.2h38.1M54.4 5.2h49.9M116.0 5.2h32.5M154.4 5.2h67.6M223.1 5.2h27.9M0.3 8.4h46.6M56.4 8.4h65.9M126.9 8.4h68.9M203.0 8.4h39.1M0.3 11.6h53.1M62.2 11.6h30.3M104.6 11.6h32.0M143.2 11.6h41.5M195.5 11.6h22.6M224.2 11.6h26.8M8.3 14.8h27.6M47.4 14.8h34.2M88.7 14.8h26.3M122.1 14.8h68.5M199.8 14.8h51.2M3.2 18.0h28.0M39.3 18.0h48.1M98.4 18.0h12.4M120.9 18.0h63.1M191.7 18.0h13.0M208.9 18.0h10.4M221.9 18.0h29.1M63.6 0v19.7M127.1 0v19.7M190.7 0v19.7" stroke="rgba(45,36,95,0.5)" stroke-width="1.2" fill="none"/></svg>
<div style="left:1636.0px;top:707.0px;width:253.0px;height:1.0px;background:rgba(60,50,100,0.5);"></div>
<div style="left:1763.1px;top:669.3px;width:1.5px;height:38.7px;background:rgba(55,45,100,0.75);"></div>
<div style="left:1889.0px;top:710.0px;width:238.0px;height:38.7px;background:#b1aad7;"></div>
<div style="left:1889.0px;top:727.0px;width:238.0px;height:1.0px;background:rgba(70,60,120,0.75);"></div>
<svg style="left:1889.0px;top:727.0px" width="238.0" height="19.7"><path d="M6.6 2.0h57.3M76.7 2.0h46.7M132.0 2.0h47.6M189.4 2.0h45.8M2.1 5.2h50.0M58.6 5.2h55.8M115.7 5.2h20.9M137.1 5.2h56.5M206.4 5.2h29.6M8.2 8.4h57.2M73.3 8.4h25.5M103.0 8.4h35.3M142.8 8.4h35.8M187.6 8.4h48.4M5.7 11.6h12.4M19.7 11.6h58.6M86.4 11.6h65.1M157.7 11.6h10.8M174.0 11.6h45.5M232.7 11.6h3.3M4.1 14.8h16.1M29.3 14.8h22.7M54.1 14.8h10.9M65.1 14.8h51.0M117.9 14.8h68.0M187.1 14.8h48.9M0.2 18.0h53.2M56.7 18.0h54.0M113.4 18.0h13.0M137.2 18.0h52.8M202.0 18.0h34.0M63.6 0v19.7M127.1 0v19.7M190.7 0v19.7" stroke="rgba(45,36,95,0.5)" stroke-width="1.2" fill="none"/></svg>
<div style="left:1889.0px;top:747.7px;width:238.0px;height:1.0px;background:rgba(60,50,100,0.5);"></div>
<div style="left:746.0px;top:752.7px;width:381.0px;height:14.0px;background:rgba(25,20,45,0.3);"></div>
<div style="left:1508.0px;top:752.7px;width:619.0px;height:14.0px;background:rgba(25,20,45,0.3);"></div>
<div style="left:873.0px;top:915.5px;width:508.0px;height:14.0px;background:rgba(25,20,45,0.3);"></div>
<div style="left:1636.0px;top:915.5px;width:110.0px;height:14.0px;background:rgba(25,20,45,0.3);"></div>
<div style="left:1762.0px;top:915.5px;width:111.0px;height:14.0px;background:rgba(25,20,45,0.3);"></div>
<div style="left:1889.0px;top:915.5px;width:111.0px;height:14.0px;background:rgba(25,20,45,0.3);"></div>
<div style="left:2016.0px;top:915.5px;width:111.0px;height:14.0px;background:rgba(25,20,45,0.3);"></div>
<div style="left:746.0px;top:791.4px;width:381.0px;height:38.7px;background:#b1aad7;"></div>
<div style="left:746.0px;top:808.4px;width:381.0px;height:1.0px;background:rgba(70,60,120,0.75);"></div>
<svg style="left:746.0px;top:808.4px" width="381.0" height="19.7"><path d="M0.0 14.0h6.4M7.6 11.0h8.9M17.2 12.0h6.4M24.2 16.0h7.6M33.1 13.0h8.9M43.2 9.0h6.4M50.8 7.0h7.6M59.1 12.0h4.4M63.6 14.0h6.4M71.2 11.0h8.9M80.7 12.0h6.4M87.7 16.0h7.6M96.6 13.0h8.9M106.8 9.0h6.4M114.4 7.0h7.6M122.7 12.0h4.4M127.1 14.0h6.4M134.7 11.0h8.9M144.3 12.0h6.4M151.3 16.0h7.6M160.2 13.0h8.9M170.3 9.0h6.4M178.0 7.0h7.6M186.2 12.0h4.4M190.7 14.0h6.4M198.3 11.0h8.9M207.8 12.0h6.4M214.8 16.0h7.6M223.7 13.0h8.9M233.9 9.0h6.4M241.5 7.0h7.6M249.8 12.0h4.4M254.2 14.0h6.4M261.9 11.0h8.9M271.4 12.0h6.4M278.4 16.0h7.6M287.3 13.0h8.9M297.5 9.0h6.4M305.1 7.0h7.6M313.4 12.0h4.4M317.8 14.0h6.4M325.4 11.0h8.9M335.0 12.0h6.4M342.0 16.0h7.6M350.9 13.0h8.9M361.0 9.0h6.4M368.6 7.0h7.6M376.9 12.0h2.1" stroke="rgba(35,28,80,0.85)" stroke-width="2" fill="none"/></svg>
<svg style="left:746.0px;top:808.4px" width="381.0" height="19.7"><path d="" stroke="rgba(45,36,95,0.85)" stroke-width="1.2" fill="none"/></svg>
<div style="left:746.0px;top:829.1px;width:381.0px;height:1.0px;background:rgba(60,50,100,0.5);"></div>
<div style="left:873.1px;top:791.4px;width:1.5px;height:38.7px;background:rgba(55,45,100,0.75);"></div>
<div style="left:1000.2px;top:791.4px;width:1.5px;height:38.7px;background:rgba(55,45,100,0.75);"></div>
<div style="left:1508.0px;top:791.4px;width:381.0px;height:38.7px;background:#b1aad7;"></div>
<div style="left:1508.0px;top:808.4px;width:381.0px;height:1.0px;background:rgba(70,60,120,0.75);"></div>
<svg style="left:1508.0px;top:808.4px" width="381.0" height="19.7"><path d="M0.0 14.0h6.4M7.6 11.0h8.9M17.2 12.0h6.4M24.2 16.0h7.6M33.1 13.0h8.9M43.2 9.0h6.4M50.8 7.0h7.6M59.1 12.0h4.4M63.6 14.0h6.4M71.2 11.0h8.9M80.7 12.0h6.4M87.7 16.0h7.6M96.6 13.0h8.9M106.8 9.0h6.4M114.4 7.0h7.6M122.7 12.0h4.4M127.1 14.0h6.4M134.7 11.0h8.9M144.3 12.0h6.4M151.3 16.0h7.6M160.2 13.0h8.9M170.3 9.0h6.4M178.0 7.0h7.6M186.2 12.0h4.4M190.7 14.0h6.4M198.3 11.0h8.9M207.8 12.0h6.4M214.8 16.0h7.6M223.7 13.0h8.9M233.9 9.0h6.4M241.5 7.0h7.6M249.8 12.0h4.4M254.2 14.0h6.4M261.9 11.0h8.9M271.4 12.0h6.4M278.4 16.0h7.6M287.3 13.0h8.9M297.5 9.0h6.4M305.1 7.0h7.6M313.4 12.0h4.4M317.8 14.0h6.4M325.4 11.0h8.9M335.0 12.0h6.4M342.0 16.0h7.6M350.9 13.0h8.9M361.0 9.0h6.4M368.6 7.0h7.6M376.9 12.0h2.1" stroke="rgba(35,28,80,0.85)" stroke-width="2" fill="none"/></svg>
<svg style="left:1508.0px;top:808.4px" width="381.0" height="19.7"><path d="" stroke="rgba(45,36,95,0.85)" stroke-width="1.2" fill="none"/></svg>
<div style="left:1508.0px;top:829.1px;width:381.0px;height:1.0px;background:rgba(60,50,100,0.5);"></div>
<div style="left:1635.1px;top:791.4px;width:1.5px;height:38.7px;background:rgba(55,45,100,0.75);"></div>
<div style="left:1762.2px;top:791.4px;width:1.5px;height:38.7px;background:rgba(55,45,100,0.75);"></div>
<div style="left:1889.0px;top:791.4px;width:238.0px;height:38.7px;background:#2b3f50;"></div>
<div style="left:1889.0px;top:791.4px;width:238.0px;height:19.0px;background:#8a9eaa;"></div>
<div style="left:1889.0px;top:810.4px;width:238.0px;height:1.0px;background:#1e2c38;"></div>
<svg style="left:1889.0px;top:811.4px" width="238.0" height="18"><path d="M5.0 15.0h21.6M32.0 5.0h25.6M63.3 5.0h6.3M76.6 5.0h21.1M100.8 9.0h12.9M121.4 5.0h24.4M148.3 15.0h26.9M178.9 5.0h9.7M191.5 15.0h20.2M215.5 15.0h20.5" stroke="rgba(150,190,200,0.55)" stroke-width="1.2" fill="none"/></svg>
<div style="left:1636.0px;top:832.1px;width:253.0px;height:38.7px;background:#b1aad7;"></div>
<div style="left:1636.0px;top:849.1px;width:253.0px;height:1.0px;background:rgba(70,60,120,0.75);"></div>
<svg style="left:1636.0px;top:849.1px" width="253.0" height="19.7"><path d="M0.0 14.0h6.4M7.6 11.0h8.9M17.2 12.0h6.4M24.2 16.0h7.6M33.1 13.0h8.9M43.2 9.0h6.4M50.8 7.0h7.6M59.1 12.0h4.4M63.6 14.0h6.4M71.2 11.0h8.9M80.7 12.0h6.4M87.7 16.0h7.6M96.6 13.0h8.9M106.8 9.0h6.4M114.4 7.0h7.6M122.7 12.0h4.4M127.1 14.0h6.4M134.7 11.0h8.9M144.3 12.0h6.4M151.3 16.0h7.6M160.2 13.0h8.9M170.3 9.0h6.4M178.0 7.0h7.6M186.2 12.0h4.4M190.7 14.0h6.4M198.3 11.0h8.9M207.8 12.0h6.4M214.8 16.0h7.6M223.7 13.0h8.9M233.9 9.0h6.4M241.5 7.0h7.6M249.8 12.0h1.2" stroke="rgba(35,28,80,0.85)" stroke-width="2" fill="none"/></svg>
<svg style="left:1636.0px;top:849.1px" width="253.0" height="19.7"><path d="" stroke="rgba(45,36,95,0.85)" stroke-width="1.2" fill="none"/></svg>
<div style="left:1636.0px;top:869.8px;width:253.0px;height:1.0px;background:rgba(60,50,100,0.5);"></div>
<div style="left:1763.1px;top:832.1px;width:1.5px;height:38.7px;background:rgba(55,45,100,0.75);"></div>
<div style="left:1889.0px;top:832.1px;width:238.0px;height:38.7px;background:#2b3f50;"></div>
<div style="left:1889.0px;top:832.1px;width:238.0px;height:19.0px;background:#78a2a8;"></div>
<div style="left:1889.0px;top:851.1px;width:238.0px;height:1.0px;background:#1e2c38;"></div>
<svg style="left:1889.0px;top:852.1px" width="238.0" height="18"><path d="M6.3 12.0h18.5M27.0 12.0h19.7M53.6 5.0h22.0M82.2 12.0h19.2M106.1 9.0h27.5M136.6 9.0h21.1M164.2 5.0h12.2M179.0 9.0h11.9M195.6 5.0h24.0M221.8 9.0h9.1M233.1 15.0h2.9" stroke="rgba(150,190,200,0.55)" stroke-width="1.2" fill="none"/></svg>
<div style="left:1636.0px;top:872.8px;width:237.0px;height:38.7px;background:#b1aad7;"></div>
<div style="left:1636.0px;top:889.8px;width:237.0px;height:1.0px;background:rgba(70,60,120,0.75);"></div>
<svg style="left:1636.0px;top:889.8px" width="237.0" height="19.7"><path d="M0.0 14.0h6.4M7.6 11.0h8.9M17.2 12.0h6.4M24.2 16.0h7.6M33.1 13.0h8.9M43.2 9.0h6.4M50.8 7.0h7.6M59.1 12.0h4.4M63.6 14.0h6.4M71.2 11.0h8.9M80.7 12.0h6.4M87.7 16.0h7.6M96.6 13.0h8.9M106.8 9.0h6.4M114.4 7.0h7.6M122.7 12.0h4.4M127.1 14.0h6.4M134.7 11.0h8.9M144.3 12.0h6.4M151.3 16.0h7.6M160.2 13.0h8.9M170.3 9.0h6.4M178.0 7.0h7.6M186.2 12.0h4.4M190.7 14.0h6.4M198.3 11.0h8.9M207.8 12.0h6.4M214.8 16.0h7.6M223.7 13.0h8.9M233.9 9.0h1.1" stroke="rgba(35,28,80,0.85)" stroke-width="2" fill="none"/></svg>
<svg style="left:1636.0px;top:889.8px" width="237.0" height="19.7"><path d="" stroke="rgba(45,36,95,0.85)" stroke-width="1.2" fill="none"/></svg>
<div style="left:1636.0px;top:910.5px;width:237.0px;height:1.0px;background:rgba(60,50,100,0.5);"></div>
<div style="left:1763.1px;top:872.8px;width:1.5px;height:38.7px;background:rgba(55,45,100,0.75);"></div>
<div style="left:1889.0px;top:872.8px;width:238.0px;height:38.7px;background:#2b3f50;"></div>
<div style="left:1889.0px;top:872.8px;width:238.0px;height:19.0px;background:#8a9eaa;"></div>
<div style="left:1889.0px;top:891.8px;width:238.0px;height:1.0px;background:#1e2c38;"></div>
<svg style="left:1889.0px;top:892.8px" width="238.0" height="18"><path d="M0.7 15.0h18.2M20.5 9.0h22.5M45.4 15.0h7.3M56.4 12.0h10.5M71.7 15.0h6.2M81.6 12.0h7.9M95.7 12.0h11.1M113.9 15.0h17.5M135.4 9.0h10.4M147.4 12.0h10.0M160.3 15.0h18.4M184.9 9.0h24.9M210.1 12.0h25.9" stroke="rgba(150,190,200,0.55)" stroke-width="1.2" fill="none"/></svg>
<div style="left:873.0px;top:954.2px;width:508.0px;height:38.7px;background:#b1aad7;"></div>
<div style="left:873.0px;top:972.2px;width:508.0px;height:8.0px;background:#1e1830;"></div>
<div style="left:873.0px;top:980.2px;width:508.0px;height:1.5px;background:#e8e4f4;"></div>
<div style="left:873.0px;top:982.2px;width:508.0px;height:8.0px;background:#1e1830;"></div>
<div style="left:875.0px;top:957.2px;width:1.5px;height:10.0px;background:#2a2545;"></div>
<div style="left:878.0px;top:957.2px;width:1.5px;height:10.0px;background:#2a2545;"></div>
<div style="left:873.0px;top:954.2px;width:1.0px;height:38.7px;background:rgba(40,34,80,0.7);"></div>
<div style="left:883.0px;top:957.2px;width:1.5px;height:10.0px;background:#2a2545;"></div>
<div style="left:886.0px;top:957.2px;width:1.5px;height:10.0px;background:#2a2545;"></div>
<div style="left:881.0px;top:954.2px;width:1.0px;height:38.7px;background:rgba(40,34,80,0.7);"></div>
<div class="t" style="left:891.0px;top:958.2px;width:21.0px;overflow:hidden;font-size:10.5px;color:#2a2545">DS_SCD</div>
<div style="left:889.0px;top:954.2px;width:1.0px;height:38.7px;background:rgba(40,34,80,0.7);"></div>
<div style="left:915.0px;top:957.2px;width:1.5px;height:10.0px;background:#2a2545;"></div>
<div style="left:918.0px;top:957.2px;width:1.5px;height:10.0px;background:#2a2545;"></div>
<div style="left:913.0px;top:954.2px;width:1.0px;height:38.7px;background:rgba(40,34,80,0.7);"></div>
<div style="left:923.0px;top:957.2px;width:1.5px;height:10.0px;background:#2a2545;"></div>
<div style="left:926.0px;top:957.2px;width:1.5px;height:10.0px;background:#2a2545;"></div>
<div style="left:921.0px;top:954.2px;width:1.0px;height:38.7px;background:rgba(40,34,80,0.7);"></div>
<div style="left:931.0px;top:957.2px;width:1.5px;height:10.0px;background:#2a2545;"></div>
<div style="left:934.0px;top:957.2px;width:1.5px;height:10.0px;background:#2a2545;"></div>
<div style="left:929.0px;top:954.2px;width:1.0px;height:38.7px;background:rgba(40,34,80,0.7);"></div>
<div style="left:937.0px;top:954.2px;width:8.0px;height:38.7px;background:#74aca6;"></div>
<div style="left:937.0px;top:972.2px;width:8.0px;height:18.0px;background:#4e8a88;"></div>
<div style="left:937.0px;top:954.2px;width:1.0px;height:38.7px;background:rgba(40,34,80,0.7);"></div>
<div style="left:947.0px;top:957.2px;width:1.5px;height:10.0px;background:#2a2545;"></div>
<div style="left:950.0px;top:957.2px;width:1.5px;height:10.0px;background:#2a2545;"></div>
<div style="left:945.0px;top:954.2px;width:1.0px;height:38.7px;background:rgba(40,34,80,0.7);"></div>
<div style="left:955.0px;top:957.2px;width:1.5px;height:10.0px;background:#2a2545;"></div>
<div style="left:958.0px;top:957.2px;width:1.5px;height:10.0px;background:#2a2545;"></div>
<div style="left:953.0px;top:954.2px;width:1.0px;height:38.7px;background:rgba(40,34,80,0.7);"></div>
<div class="t" style="left:963.0px;top:958.2px;width:21.0px;overflow:hidden;font-size:10.5px;color:#2a2545">DS_SCD</div>
<div style="left:961.0px;top:954.2px;width:1.0px;height:38.7px;background:rgba(40,34,80,0.7);"></div>
<div style="left:985.0px;top:954.2px;width:8.0px;height:38.7px;background:#74aca6;"></div>
<div style="left:985.0px;top:972.2px;width:8.0px;height:18.0px;background:#4e8a88;"></div>
<div style="left:985.0px;top:954.2px;width:1.0px;height:38.7px;background:rgba(40,34,80,0.7);"></div>
<div style="left:993.0px;top:954.2px;width:8.0px;height:38.7px;background:#74aca6;"></div>
<div style="left:993.0px;top:972.2px;width:8.0px;height:18.0px;background:#4e8a88;"></div>
<div style="left:993.0px;top:954.2px;width:1.0px;height:38.7px;background:rgba(40,34,80,0.7);"></div>
<div style="left:1001.0px;top:954.2px;width:8.0px;height:38.7px;background:#74aca6;"></div>
<div style="left:1001.0px;top:972.2px;width:8.0px;height:18.0px;background:#4e8a88;"></div>
<div style="left:1001.0px;top:954.2px;width:1.0px;height:38.7px;background:rgba(40,34,80,0.7);"></div>
<div class="t" style="left:1011.0px;top:958.2px;width:21.0px;overflow:hidden;font-size:10.5px;color:#2a2545">DS_SCD</div>
<div style="left:1009.0px;top:954.2px;width:1.0px;height:38.7px;background:rgba(40,34,80,0.7);"></div>
<div style="left:1035.0px;top:957.2px;width:1.5px;height:10.0px;background:#2a2545;"></div>
<div style="left:1038.0px;top:957.2px;width:1.5px;height:10.0px;background:#2a2545;"></div>
<div style="left:1033.0px;top:954.2px;width:1.0px;height:38.7px;background:rgba(40,34,80,0.7);"></div>
<div style="left:1041.0px;top:954.2px;width:8.0px;height:38.7px;background:#74aca6;"></div>
<div style="left:1041.0px;top:972.2px;width:8.0px;height:18.0px;background:#4e8a88;"></div>
<div style="left:1041.0px;top:954.2px;width:1.0px;height:38.7px;background:rgba(40,34,80,0.7);"></div>
<div class="t" style="left:1051.0px;top:958.2px;width:21.0px;overflow:hidden;font-size:10.5px;color:#2a2545">DS_SCD</div>
<div style="left:1049.0px;top:954.2px;width:1.0px;height:38.7px;background:rgba(40,34,80,0.7);"></div>
<div class="t" style="left:1075.0px;top:958.2px;width:21.0px;overflow:hidden;font-size:10.5px;color:#2a2545">DS_SCD</div>
<div style="left:1073.0px;top:954.2px;width:1.0px;height:38.7px;background:rgba(40,34,80,0.7);"></div>
<div style="left:1099.0px;top:957.2px;width:1.5px;height:10.0px;background:#2a2545;"></div>
<div style="left:1102.0px;top:957.2px;width:1.5px;height:10.0px;background:#2a2545;"></div>
<div style="left:1097.0px;top:954.2px;width:1.0px;height:38.7px;background:rgba(40,34,80,0.7);"></div>
<div style="left:1107.0px;top:957.2px;width:1.5px;height:10.0px;background:#2a2545;"></div>
<div style="left:1110.0px;top:957.2px;width:1.5px;height:10.0px;background:#2a2545;"></div>
<div style="left:1105.0px;top:954.2px;width:1.0px;height:38.7px;background:rgba(40,34,80,0.7);"></div>
<div style="left:1113.0px;top:954.2px;width:8.0px;height:38.7px;background:#74aca6;"></div>
<div style="left:1113.0px;top:972.2px;width:8.0px;height:18.0px;background:#4e8a88;"></div>
<div style="left:1113.0px;top:954.2px;width:1.0px;height:38.7px;background:rgba(40,34,80,0.7);"></div>
<div style="left:1121.0px;top:954.2px;width:8.0px;height:38.7px;background:#74aca6;"></div>
<div style="left:1121.0px;top:972.2px;width:8.0px;height:18.0px;background:#4e8a88;"></div>
<div style="left:1121.0px;top:954.2px;width:1.0px;height:38.7px;background:rgba(40,34,80,0.7);"></div>
<div style="left:1131.0px;top:957.2px;width:1.5px;height:10.0px;background:#2a2545;"></div>
<div style="left:1134.0px;top:957.2px;width:1.5px;height:10.0px;background:#2a2545;"></div>
<div style="left:1129.0px;top:954.2px;width:1.0px;height:38.7px;background:rgba(40,34,80,0.7);"></div>
<div style="left:1137.0px;top:954.2px;width:8.0px;height:38.7px;background:#74aca6;"></div>
<div style="left:1137.0px;top:972.2px;width:8.0px;height:18.0px;background:#4e8a88;"></div>
<div style="left:1137.0px;top:954.2px;width:1.0px;height:38.7px;background:rgba(40,34,80,0.7);"></div>
<div style="left:1145.0px;top:954.2px;width:8.0px;height:38.7px;background:#74aca6;"></div>
<div style="left:1145.0px;top:972.2px;width:8.0px;height:18.0px;background:#4e8a88;"></div>
<div style="left:1145.0px;top:954.2px;width:1.0px;height:38.7px;background:rgba(40,34,80,0.7);"></div>
<div style="left:1153.0px;top:954.2px;width:8.0px;height:38.7px;background:#74aca6;"></div>
<div style="left:1153.0px;top:972.2px;width:8.0px;height:18.0px;background:#4e8a88;"></div>
<div style="left:1153.0px;top:954.2px;width:1.0px;height:38.7px;background:rgba(40,34,80,0.7);"></div>
<div style="left:1161.0px;top:954.2px;width:8.0px;height:38.7px;background:#74aca6;"></div>
<div style="left:1161.0px;top:972.2px;width:8.0px;height:18.0px;background:#4e8a88;"></div>
<div style="left:1161.0px;top:954.2px;width:1.0px;height:38.7px;background:rgba(40,34,80,0.7);"></div>
<div style="left:1171.0px;top:957.2px;width:1.5px;height:10.0px;background:#2a2545;"></div>
<div style="left:1174.0px;top:957.2px;width:1.5px;height:10.0px;background:#2a2545;"></div>
<div style="left:1169.0px;top:954.2px;width:1.0px;height:38.7px;background:rgba(40,34,80,0.7);"></div>
<div style="left:1179.0px;top:957.2px;width:1.5px;height:10.0px;background:#2a2545;"></div>
<div style="left:1182.0px;top:957.2px;width:1.5px;height:10.0px;background:#2a2545;"></div>
<div style="left:1177.0px;top:954.2px;width:1.0px;height:38.7px;background:rgba(40,34,80,0.7);"></div>
<div class="t" style="left:1187.0px;top:958.2px;width:21.0px;overflow:hidden;font-size:10.5px;color:#2a2545">DS_SCD</div>
<div style="left:1185.0px;top:954.2px;width:1.0px;height:38.7px;background:rgba(40,34,80,0.7);"></div>
<div style="left:1211.0px;top:957.2px;width:1.5px;height:10.0px;background:#2a2545;"></div>
<div style="left:1214.0px;top:957.2px;width:1.5px;height:10.0px;background:#2a2545;"></div>
<div style="left:1209.0px;top:954.2px;width:1.0px;height:38.7px;background:rgba(40,34,80,0.7);"></div>
<div style="left:1219.0px;top:957.2px;width:1.5px;height:10.0px;background:#2a2545;"></div>
<div style="left:1222.0px;top:957.2px;width:1.5px;height:10.0px;background:#2a2545;"></div>
<div style="left:1217.0px;top:954.2px;width:1.0px;height:38.7px;background:rgba(40,34,80,0.7);"></div>
<div style="left:1227.0px;top:957.2px;width:1.5px;height:10.0px;background:#2a2545;"></div>
<div style="left:1230.0px;top:957.2px;width:1.5px;height:10.0px;background:#2a2545;"></div>
<div style="left:1225.0px;top:954.2px;width:1.0px;height:38.7px;background:rgba(40,34,80,0.7);"></div>
<div style="left:1235.0px;top:957.2px;width:1.5px;height:10.0px;background:#2a2545;"></div>
<div style="left:1238.0px;top:957.2px;width:1.5px;height:10.0px;background:#2a2545;"></div>
<div style="left:1233.0px;top:954.2px;width:1.0px;height:38.7px;background:rgba(40,34,80,0.7);"></div>
<div style="left:1243.0px;top:957.2px;width:1.5px;height:10.0px;background:#2a2545;"></div>
<div style="left:1246.0px;top:957.2px;width:1.5px;height:10.0px;background:#2a2545;"></div>
<div style="left:1241.0px;top:954.2px;width:1.0px;height:38.7px;background:rgba(40,34,80,0.7);"></div>
<div style="left:1249.0px;top:954.2px;width:8.0px;height:38.7px;background:#74aca6;"></div>
<div style="left:1249.0px;top:972.2px;width:8.0px;height:18.0px;background:#4e8a88;"></div>
<div style="left:1249.0px;top:954.2px;width:1.0px;height:38.7px;background:rgba(40,34,80,0.7);"></div>
<div class="t" style="left:1259.0px;top:958.2px;width:21.0px;overflow:hidden;font-size:10.5px;color:#2a2545">DS_SCD</div>
<div style="left:1257.0px;top:954.2px;width:1.0px;height:38.7px;background:rgba(40,34,80,0.7);"></div>
<div class="t" style="left:1283.0px;top:958.2px;width:21.0px;overflow:hidden;font-size:10.5px;color:#2a2545">DS_SCD</div>
<div style="left:1281.0px;top:954.2px;width:1.0px;height:38.7px;background:rgba(40,34,80,0.7);"></div>
<div class="t" style="left:1307.0px;top:958.2px;width:21.0px;overflow:hidden;font-size:10.5px;color:#2a2545">DS_SCD</div>
<div style="left:1305.0px;top:954.2px;width:1.0px;height:38.7px;background:rgba(40,34,80,0.7);"></div>
<div style="left:1331.0px;top:957.2px;width:1.5px;height:10.0px;background:#2a2545;"></div>
<div style="left:1334.0px;top:957.2px;width:1.5px;height:10.0px;background:#2a2545;"></div>
<div style="left:1329.0px;top:954.2px;width:1.0px;height:38.7px;background:rgba(40,34,80,0.7);"></div>
<div style="left:1337.0px;top:954.2px;width:8.0px;height:38.7px;background:#74aca6;"></div>
<div style="left:1337.0px;top:972.2px;width:8.0px;height:18.0px;background:#4e8a88;"></div>
<div style="left:1337.0px;top:954.2px;width:1.0px;height:38.7px;background:rgba(40,34,80,0.7);"></div>
<div style="left:1345.0px;top:954.2px;width:8.0px;height:38.7px;background:#74aca6;"></div>
<div style="left:1345.0px;top:972.2px;width:8.0px;height:18.0px;background:#4e8a88;"></div>
<div style="left:1345.0px;top:954.2px;width:1.0px;height:38.7px;background:rgba(40,34,80,0.7);"></div>
<div style="left:1353.0px;top:954.2px;width:8.0px;height:38.7px;background:#74aca6;"></div>
<div style="left:1353.0px;top:972.2px;width:8.0px;height:18.0px;background:#4e8a88;"></div>
<div style="left:1353.0px;top:954.2px;width:1.0px;height:38.7px;background:rgba(40,34,80,0.7);"></div>
<div style="left:1361.0px;top:954.2px;width:8.0px;height:38.7px;background:#74aca6;"></div>
<div style="left:1361.0px;top:972.2px;width:8.0px;height:18.0px;background:#4e8a88;"></div>
<div style="left:1361.0px;top:954.2px;width:1.0px;height:38.7px;background:rgba(40,34,80,0.7);"></div>
<div style="left:1371.0px;top:957.2px;width:1.5px;height:10.0px;background:#2a2545;"></div>
<div style="left:1374.0px;top:957.2px;width:1.5px;height:10.0px;background:#2a2545;"></div>
<div style="left:1369.0px;top:954.2px;width:1.0px;height:38.7px;background:rgba(40,34,80,0.7);"></div>
<div style="left:873.0px;top:994.9px;width:508.0px;height:19.1px;background:#b1aad7;"></div>
<div style="left:875.0px;top:997.9px;width:1.5px;height:10.0px;background:#2a2545;"></div>
<div style="left:878.0px;top:997.9px;width:1.5px;height:10.0px;background:#2a2545;"></div>
<div style="left:873.0px;top:994.9px;width:1.0px;height:19.1px;background:rgba(40,34,80,0.7);"></div>
<div style="left:883.0px;top:997.9px;width:1.5px;height:10.0px;background:#2a2545;"></div>
<div style="left:886.0px;top:997.9px;width:1.5px;height:10.0px;background:#2a2545;"></div>
<div style="left:881.0px;top:994.9px;width:1.0px;height:19.1px;background:rgba(40,34,80,0.7);"></div>
<div class="t" style="left:891.0px;top:998.9px;width:21.0px;overflow:hidden;font-size:10.5px;color:#2a2545">DS_SCB</div>
<div style="left:889.0px;top:994.9px;width:1.0px;height:19.1px;background:rgba(40,34,80,0.7);"></div>
<div style="left:915.0px;top:997.9px;width:1.5px;height:10.0px;background:#2a2545;"></div>
<div style="left:918.0px;top:997.9px;width:1.5px;height:10.0px;background:#2a2545;"></div>
<div style="left:913.0px;top:994.9px;width:1.0px;height:19.1px;background:rgba(40,34,80,0.7);"></div>
<div style="left:923.0px;top:997.9px;width:1.5px;height:10.0px;background:#2a2545;"></div>
<div style="left:926.0px;top:997.9px;width:1.5px;height:10.0px;background:#2a2545;"></div>
<div style="left:921.0px;top:994.9px;width:1.0px;height:19.1px;background:rgba(40,34,80,0.7);"></div>
<div style="left:931.0px;top:997.9px;width:1.5px;height:10.0px;background:#2a2545;"></div>
<div style="left:934.0px;top:997.9px;width:1.5px;height:10.0px;background:#2a2545;"></div>
<div style="left:929.0px;top:994.9px;width:1.0px;height:19.1px;background:rgba(40,34,80,0.7);"></div>
<div style="left:937.0px;top:994.9px;width:8.0px;height:19.1px;background:#74aca6;"></div>
<div style="left:937.0px;top:994.9px;width:1.0px;height:19.1px;background:rgba(40,34,80,0.7);"></div>
<div style="left:947.0px;top:997.9px;width:1.5px;height:10.0px;background:#2a2545;"></div>
<div style="left:950.0px;top:997.9px;width:1.5px;height:10.0px;background:#2a2545;"></div>
<div style="left:945.0px;top:994.9px;width:1.0px;height:19.1px;background:rgba(40,34,80,0.7);"></div>
<div style="left:955.0px;top:997.9px;width:1.5px;height:10.0px;background:#2a2545;"></div>
<div style="left:958.0px;top:997.9px;width:1.5px;height:10.0px;background:#2a2545;"></div>
<div style="left:953.0px;top:994.9px;width:1.0px;height:19.1px;background:rgba(40,34,80,0.7);"></div>
<div class="t" style="left:963.0px;top:998.9px;width:21.0px;overflow:hidden;font-size:10.5px;color:#2a2545">DS_SCB</div>
<div style="left:961.0px;top:994.9px;width:1.0px;height:19.1px;background:rgba(40,34,80,0.7);"></div>
<div style="left:985.0px;top:994.9px;width:8.0px;height:19.1px;background:#74aca6;"></div>
<div style="left:985.0px;top:994.9px;width:1.0px;height:19.1px;background:rgba(40,34,80,0.7);"></div>
<div style="left:993.0px;top:994.9px;width:8.0px;height:19.1px;background:#74aca6;"></div>
<div style="left:993.0px;top:994.9px;width:1.0px;height:19.1px;background:rgba(40,34,80,0.7);"></div>
<div style="left:1001.0px;top:994.9px;width:8.0px;height:19.1px;background:#74aca6;"></div>
<div style="left:1001.0px;top:994.9px;width:1.0px;height:19.1px;background:rgba(40,34,80,0.7);"></div>
<div class="t" style="left:1011.0px;top:998.9px;width:21.0px;overflow:hidden;font-size:10.5px;color:#2a2545">DS_SCB</div>
<div style="left:1009.0px;top:994.9px;width:1.0px;height:19.1px;background:rgba(40,34,80,0.7);"></div>
<div style="left:1035.0px;top:997.9px;width:1.5px;height:10.0px;background:#2a2545;"></div>
<div style="left:1038.0px;top:997.9px;width:1.5px;height:10.0px;background:#2a2545;"></div>
<div style="left:1033.0px;top:994.9px;width:1.0px;height:19.1px;background:rgba(40,34,80,0.7);"></div>
<div style="left:1041.0px;top:994.9px;width:8.0px;height:19.1px;background:#74aca6;"></div>
<div style="left:1041.0px;top:994.9px;width:1.0px;height:19.1px;background:rgba(40,34,80,0.7);"></div>
<div class="t" style="left:1051.0px;top:998.9px;width:21.0px;overflow:hidden;font-size:10.5px;color:#2a2545">DS_SCB</div>
<div style="left:1049.0px;top:994.9px;width:1.0px;height:19.1px;background:rgba(40,34,80,0.7);"></div>
<div class="t" style="left:1075.0px;top:998.9px;width:21.0px;overflow:hidden;font-size:10.5px;color:#2a2545">DS_SCB</div>
<div style="left:1073.0px;top:994.9px;width:1.0px;height:19.1px;background:rgba(40,34,80,0.7);"></div>
<div style="left:1099.0px;top:997.9px;width:1.5px;height:10.0px;background:#2a2545;"></div>
<div style="left:1102.0px;top:997.9px;width:1.5px;height:10.0px;background:#2a2545;"></div>
<div style="left:1097.0px;top:994.9px;width:1.0px;height:19.1px;background:rgba(40,34,80,0.7);"></div>
<div style="left:1107.0px;top:997.9px;width:1.5px;height:10.0px;background:#2a2545;"></div>
<div style="left:1110.0px;top:997.9px;width:1.5px;height:10.0px;background:#2a2545;"></div>
<div style="left:1105.0px;top:994.9px;width:1.0px;height:19.1px;background:rgba(40,34,80,0.7);"></div>
<div style="left:1113.0px;top:994.9px;width:8.0px;height:19.1px;background:#74aca6;"></div>
<div style="left:1113.0px;top:994.9px;width:1.0px;height:19.1px;background:rgba(40,34,80,0.7);"></div>
<div style="left:1121.0px;top:994.9px;width:8.0px;height:19.1px;background:#74aca6;"></div>
<div style="left:1121.0px;top:994.9px;width:1.0px;height:19.1px;background:rgba(40,34,80,0.7);"></div>
<div style="left:1131.0px;top:997.9px;width:1.5px;height:10.0px;background:#2a2545;"></div>
<div style="left:1134.0px;top:997.9px;width:1.5px;height:10.0px;background:#2a2545;"></div>
<div style="left:1129.0px;top:994.9px;width:1.0px;height:19.1px;background:rgba(40,34,80,0.7);"></div>
<div style="left:1137.0px;top:994.9px;width:8.0px;height:19.1px;background:#74aca6;"></div>
<div style="left:1137.0px;top:994.9px;width:1.0px;height:19.1px;background:rgba(40,34,80,0.7);"></div>
<div style="left:1145.0px;top:994.9px;width:8.0px;height:19.1px;background:#74aca6;"></div>
<div style="left:1145.0px;top:994.9px;width:1.0px;height:19.1px;background:rgba(40,34,80,0.7);"></div>
<div style="left:1153.0px;top:994.9px;width:8.0px;height:19.1px;background:#74aca6;"></div>
<div style="left:1153.0px;top:994.9px;width:1.0px;height:19.1px;background:rgba(40,34,80,0.7);"></div>
<div style="left:1161.0px;top:994.9px;width:8.0px;height:19.1px;background:#74aca6;"></div>
<div style="left:1161.0px;top:994.9px;width:1.0px;height:19.1px;background:rgba(40,34,80,0.7);"></div>
<div style="left:1171.0px;top:997.9px;width:1.5px;height:10.0px;background:#2a2545;"></div>
<div style="left:1174.0px;top:997.9px;width:1.5px;height:10.0px;background:#2a2545;"></div>
<div style="left:1169.0px;top:994.9px;width:1.0px;height:19.1px;background:rgba(40,34,80,0.7);"></div>
<div style="left:1179.0px;top:997.9px;width:1.5px;height:10.0px;background:#2a2545;"></div>
<div style="left:1182.0px;top:997.9px;width:1.5px;height:10.0px;background:#2a2545;"></div>
<div style="left:1177.0px;top:994.9px;width:1.0px;height:19.1px;background:rgba(40,34,80,0.7);"></div>
<div class="t" style="left:1187.0px;top:998.9px;width:21.0px;overflow:hidden;font-size:10.5px;color:#2a2545">DS_SCB</div>
<div style="left:1185.0px;top:994.9px;width:1.0px;height:19.1px;background:rgba(40,34,80,0.7);"></div>
<div style="left:1211.0px;top:997.9px;width:1.5px;height:10.0px;background:#2a2545;"></div>
<div style="left:1214.0px;top:997.9px;width:1.5px;height:10.0px;background:#2a2545;"></div>
<div style="left:1209.0px;top:994.9px;width:1.0px;height:19.1px;background:rgba(40,34,80,0.7);"></div>
<div style="left:1219.0px;top:997.9px;width:1.5px;height:10.0px;background:#2a2545;"></div>
<div style="left:1222.0px;top:997.9px;width:1.5px;height:10.0px;background:#2a2545;"></div>
<div style="left:1217.0px;top:994.9px;width:1.0px;height:19.1px;background:rgba(40,34,80,0.7);"></div>
<div style="left:1227.0px;top:997.9px;width:1.5px;height:10.0px;background:#2a2545;"></div>
<div style="left:1230.0px;top:997.9px;width:1.5px;height:10.0px;background:#2a2545;"></div>
<div style="left:1225.0px;top:994.9px;width:1.0px;height:19.1px;background:rgba(40,34,80,0.7);"></div>
<div style="left:1235.0px;top:997.9px;width:1.5px;height:10.0px;background:#2a2545;"></div>
<div style="left:1238.0px;top:997.9px;width:1.5px;height:10.0px;background:#2a2545;"></div>
<div style="left:1233.0px;top:994.9px;width:1.0px;height:19.1px;background:rgba(40,34,80,0.7);"></div>
<div style="left:1243.0px;top:997.9px;width:1.5px;height:10.0px;background:#2a2545;"></div>
<div style="left:1246.0px;top:997.9px;width:1.5px;height:10.0px;background:#2a2545;"></div>
<div style="left:1241.0px;top:994.9px;width:1.0px;height:19.1px;background:rgba(40,34,80,0.7);"></div>
<div style="left:1249.0px;top:994.9px;width:8.0px;height:19.1px;background:#74aca6;"></div>
<div style="left:1249.0px;top:994.9px;width:1.0px;height:19.1px;background:rgba(40,34,80,0.7);"></div>
<div class="t" style="left:1259.0px;top:998.9px;width:21.0px;overflow:hidden;font-size:10.5px;color:#2a2545">DS_SCB</div>
<div style="left:1257.0px;top:994.9px;width:1.0px;height:19.1px;background:rgba(40,34,80,0.7);"></div>
<div class="t" style="left:1283.0px;top:998.9px;width:21.0px;overflow:hidden;font-size:10.5px;color:#2a2545">DS_SCB</div>
<div style="left:1281.0px;top:994.9px;width:1.0px;height:19.1px;background:rgba(40,34,80,0.7);"></div>
<div class="t" style="left:1307.0px;top:998.9px;width:21.0px;overflow:hidden;font-size:10.5px;color:#2a2545">DS_SCB</div>
<div style="left:1305.0px;top:994.9px;width:1.0px;height:19.1px;background:rgba(40,34,80,0.7);"></div>
<div style="left:1331.0px;top:997.9px;width:1.5px;height:10.0px;background:#2a2545;"></div>
<div style="left:1334.0px;top:997.9px;width:1.5px;height:10.0px;background:#2a2545;"></div>
<div style="left:1329.0px;top:994.9px;width:1.0px;height:19.1px;background:rgba(40,34,80,0.7);"></div>
<div style="left:1337.0px;top:994.9px;width:8.0px;height:19.1px;background:#74aca6;"></div>
<div style="left:1337.0px;top:994.9px;width:1.0px;height:19.1px;background:rgba(40,34,80,0.7);"></div>
<div style="left:1345.0px;top:994.9px;width:8.0px;height:19.1px;background:#74aca6;"></div>
<div style="left:1345.0px;top:994.9px;width:1.0px;height:19.1px;background:rgba(40,34,80,0.7);"></div>
<div style="left:1353.0px;top:994.9px;width:8.0px;height:19.1px;background:#74aca6;"></div>
<div style="left:1353.0px;top:994.9px;width:1.0px;height:19.1px;background:rgba(40,34,80,0.7);"></div>
<div style="left:1361.0px;top:994.9px;width:8.0px;height:19.1px;background:#74aca6;"></div>
<div style="left:1361.0px;top:994.9px;width:1.0px;height:19.1px;background:rgba(40,34,80,0.7);"></div>
<div style="left:1371.0px;top:997.9px;width:1.5px;height:10.0px;background:#2a2545;"></div>
<div style="left:1374.0px;top:997.9px;width:1.5px;height:10.0px;background:#2a2545;"></div>
<div style="left:1369.0px;top:994.9px;width:1.0px;height:19.1px;background:rgba(40,34,80,0.7);"></div>
<div style="left:1636.0px;top:954.2px;width:110.0px;height:38.7px;background:#b1aad7;"></div>
<div style="left:1636.0px;top:972.2px;width:110.0px;height:8.0px;background:#1e1830;"></div>
<div style="left:1636.0px;top:980.2px;width:110.0px;height:1.5px;background:#e8e4f4;"></div>
<div style="left:1636.0px;top:982.2px;width:110.0px;height:8.0px;background:#1e1830;"></div>
<div style="left:1636.0px;top:954.2px;width:11.0px;height:38.7px;background:#74aca6;"></div>
<div style="left:1636.0px;top:972.2px;width:11.0px;height:18.0px;background:#4e8a88;"></div>
<div style="left:1636.0px;top:954.2px;width:1.0px;height:38.7px;background:rgba(40,34,80,0.7);"></div>
<div class="t" style="left:1649.0px;top:958.2px;width:41.0px;overflow:hidden;font-size:10.5px;color:#2a2545">DS_SCD</div>
<div style="left:1647.0px;top:954.2px;width:1.0px;height:38.7px;background:rgba(40,34,80,0.7);"></div>
<div style="left:1691.0px;top:954.2px;width:16.0px;height:38.7px;background:#74aca6;"></div>
<div style="left:1691.0px;top:972.2px;width:16.0px;height:18.0px;background:#4e8a88;"></div>
<div style="left:1691.0px;top:954.2px;width:1.0px;height:38.7px;background:rgba(40,34,80,0.7);"></div>
<div class="t" style="left:1709.0px;top:958.2px;width:36.0px;overflow:hidden;font-size:10.5px;color:#2a2545">DS_SCD</div>
<div style="left:1707.0px;top:954.2px;width:1.0px;height:38.7px;background:rgba(40,34,80,0.7);"></div>
<div style="left:1636.0px;top:994.9px;width:110.0px;height:19.1px;background:#b1aad7;"></div>
<div style="left:1636.0px;top:994.9px;width:11.0px;height:19.1px;background:#74aca6;"></div>
<div style="left:1636.0px;top:994.9px;width:1.0px;height:19.1px;background:rgba(40,34,80,0.7);"></div>
<div class="t" style="left:1649.0px;top:998.9px;width:41.0px;overflow:hidden;font-size:10.5px;color:#2a2545">DS_SCB</div>
<div style="left:1647.0px;top:994.9px;width:1.0px;height:19.1px;background:rgba(40,34,80,0.7);"></div>
<div style="left:1691.0px;top:994.9px;width:16.0px;height:19.1px;background:#74aca6;"></div>
<div style="left:1691.0px;top:994.9px;width:1.0px;height:19.1px;background:rgba(40,34,80,0.7);"></div>
<div class="t" style="left:1709.0px;top:998.9px;width:36.0px;overflow:hidden;font-size:10.5px;color:#2a2545">DS_SCB</div>
<div style="left:1707.0px;top:994.9px;width:1.0px;height:19.1px;background:rgba(40,34,80,0.7);"></div>
<div style="left:1762.0px;top:954.2px;width:111.0px;height:38.7px;background:#b1aad7;"></div>
<div style="left:1762.0px;top:972.2px;width:111.0px;height:8.0px;background:#1e1830;"></div>
<div style="left:1762.0px;top:980.2px;width:111.0px;height:1.5px;background:#e8e4f4;"></div>
<div style="left:1762.0px;top:982.2px;width:111.0px;height:8.0px;background:#1e1830;"></div>
<div style="left:1762.0px;top:954.2px;width:11.0px;height:38.7px;background:#74aca6;"></div>
<div style="left:1762.0px;top:972.2px;width:11.0px;height:18.0px;background:#4e8a88;"></div>
<div style="left:1762.0px;top:954.2px;width:1.0px;height:38.7px;background:rgba(40,34,80,0.7);"></div>
<div class="t" style="left:1775.0px;top:958.2px;width:41.0px;overflow:hidden;font-size:10.5px;color:#2a2545">DS_SCD</div>
<div style="left:1773.0px;top:954.2px;width:1.0px;height:38.7px;background:rgba(40,34,80,0.7);"></div>
<div style="left:1817.0px;top:954.2px;width:16.0px;height:38.7px;background:#74aca6;"></div>
<div style="left:1817.0px;top:972.2px;width:16.0px;height:18.0px;background:#4e8a88;"></div>
<div style="left:1817.0px;top:954.2px;width:1.0px;height:38.7px;background:rgba(40,34,80,0.7);"></div>
<div class="t" style="left:1835.0px;top:958.2px;width:37.0px;overflow:hidden;font-size:10.5px;color:#2a2545">DS_SCD</div>
<div style="left:1833.0px;top:954.2px;width:1.0px;height:38.7px;background:rgba(40,34,80,0.7);"></div>
<div style="left:1762.0px;top:994.9px;width:111.0px;height:19.1px;background:#b1aad7;"></div>
<div style="left:1762.0px;top:994.9px;width:11.0px;height:19.1px;background:#74aca6;"></div>
<div style="left:1762.0px;top:994.9px;width:1.0px;height:19.1px;background:rgba(40,34,80,0.7);"></div>
<div class="t" style="left:1775.0px;top:998.9px;width:41.0px;overflow:hidden;font-size:10.5px;color:#2a2545">DS_SCB</div>
<div style="left:1773.0px;top:994.9px;width:1.0px;height:19.1px;background:rgba(40,34,80,0.7);"></div>
<div style="left:1817.0px;top:994.9px;width:16.0px;height:19.1px;background:#74aca6;"></div>
<div style="left:1817.0px;top:994.9px;width:1.0px;height:19.1px;background:rgba(40,34,80,0.7);"></div>
<div class="t" style="left:1835.0px;top:998.9px;width:37.0px;overflow:hidden;font-size:10.5px;color:#2a2545">DS_SCB</div>
<div style="left:1833.0px;top:994.9px;width:1.0px;height:19.1px;background:rgba(40,34,80,0.7);"></div>
<div style="left:1889.0px;top:954.2px;width:111.0px;height:38.7px;background:#b1aad7;"></div>
<div style="left:1889.0px;top:972.2px;width:111.0px;height:8.0px;background:#1e1830;"></div>
<div style="left:1889.0px;top:980.2px;width:111.0px;height:1.5px;background:#e8e4f4;"></div>
<div style="left:1889.0px;top:982.2px;width:111.0px;height:8.0px;background:#1e1830;"></div>
<div style="left:1889.0px;top:954.2px;width:11.0px;height:38.7px;background:#74aca6;"></div>
<div style="left:1889.0px;top:972.2px;width:11.0px;height:18.0px;background:#4e8a88;"></div>
<div style="left:1889.0px;top:954.2px;width:1.0px;height:38.7px;background:rgba(40,34,80,0.7);"></div>
<div class="t" style="left:1902.0px;top:958.2px;width:41.0px;overflow:hidden;font-size:10.5px;color:#2a2545">DS_SCD</div>
<div style="left:1900.0px;top:954.2px;width:1.0px;height:38.7px;background:rgba(40,34,80,0.7);"></div>
<div style="left:1944.0px;top:954.2px;width:16.0px;height:38.7px;background:#74aca6;"></div>
<div style="left:1944.0px;top:972.2px;width:16.0px;height:18.0px;background:#4e8a88;"></div>
<div style="left:1944.0px;top:954.2px;width:1.0px;height:38.7px;background:rgba(40,34,80,0.7);"></div>
<div class="t" style="left:1962.0px;top:958.2px;width:37.0px;overflow:hidden;font-size:10.5px;color:#2a2545">DS_SCD</div>
<div style="left:1960.0px;top:954.2px;width:1.0px;height:38.7px;background:rgba(40,34,80,0.7);"></div>
<div style="left:1889.0px;top:994.9px;width:111.0px;height:19.1px;background:#b1aad7;"></div>
<div style="left:1889.0px;top:994.9px;width:11.0px;height:19.1px;background:#74aca6;"></div>
<div style="left:1889.0px;top:994.9px;width:1.0px;height:19.1px;background:rgba(40,34,80,0.7);"></div>
<div class="t" style="left:1902.0px;top:998.9px;width:41.0px;overflow:hidden;font-size:10.5px;color:#2a2545">DS_SCB</div>
<div style="left:1900.0px;top:994.9px;width:1.0px;height:19.1px;background:rgba(40,34,80,0.7);"></div>
<div style="left:1944.0px;top:994.9px;width:16.0px;height:19.1px;background:#74aca6;"></div>
<div style="left:1944.0px;top:994.9px;width:1.0px;height:19.1px;background:rgba(40,34,80,0.7);"></div>
<div class="t" style="left:1962.0px;top:998.9px;width:37.0px;overflow:hidden;font-size:10.5px;color:#2a2545">DS_SCB</div>
<div style="left:1960.0px;top:994.9px;width:1.0px;height:19.1px;background:rgba(40,34,80,0.7);"></div>
<div style="left:2016.0px;top:954.2px;width:111.0px;height:38.7px;background:#b1aad7;"></div>
<div style="left:2016.0px;top:972.2px;width:111.0px;height:8.0px;background:#1e1830;"></div>
<div style="left:2016.0px;top:980.2px;width:111.0px;height:1.5px;background:#e8e4f4;"></div>
<div style="left:2016.0px;top:982.2px;width:111.0px;height:8.0px;background:#1e1830;"></div>
<div style="left:2016.0px;top:954.2px;width:11.0px;height:38.7px;background:#74aca6;"></div>
<div style="left:2016.0px;top:972.2px;width:11.0px;height:18.0px;background:#4e8a88;"></div>
<div style="left:2016.0px;top:954.2px;width:1.0px;height:38.7px;background:rgba(40,34,80,0.7);"></div>
<div class="t" style="left:2029.0px;top:958.2px;width:41.0px;overflow:hidden;font-size:10.5px;color:#2a2545">DS_SCD</div>
<div style="left:2027.0px;top:954.2px;width:1.0px;height:38.7px;background:rgba(40,34,80,0.7);"></div>
<div style="left:2071.0px;top:954.2px;width:16.0px;height:38.7px;background:#74aca6;"></div>
<div style="left:2071.0px;top:972.2px;width:16.0px;height:18.0px;background:#4e8a88;"></div>
<div style="left:2071.0px;top:954.2px;width:1.0px;height:38.7px;background:rgba(40,34,80,0.7);"></div>
<div class="t" style="left:2089.0px;top:958.2px;width:37.0px;overflow:hidden;font-size:10.5px;color:#2a2545">DS_SCD</div>
<div style="left:2087.0px;top:954.2px;width:1.0px;height:38.7px;background:rgba(40,34,80,0.7);"></div>
<div style="left:2016.0px;top:994.9px;width:111.0px;height:19.1px;background:#b1aad7;"></div>
<div style="left:2016.0px;top:994.9px;width:11.0px;height:19.1px;background:#74aca6;"></div>
<div style="left:2016.0px;top:994.9px;width:1.0px;height:19.1px;background:rgba(40,34,80,0.7);"></div>
<div class="t" style="left:2029.0px;top:998.9px;width:41.0px;overflow:hidden;font-size:10.5px;color:#2a2545">DS_SCB</div>
<div style="left:2027.0px;top:994.9px;width:1.0px;height:19.1px;background:rgba(40,34,80,0.7);"></div>
<div style="left:2071.0px;top:994.9px;width:16.0px;height:19.1px;background:#74aca6;"></div>
<div style="left:2071.0px;top:994.9px;width:1.0px;height:19.1px;background:rgba(40,34,80,0.7);"></div>
<div class="t" style="left:2089.0px;top:998.9px;width:37.0px;overflow:hidden;font-size:10.5px;color:#2a2545">DS_SCB</div>
<div style="left:2087.0px;top:994.9px;width:1.0px;height:19.1px;background:rgba(40,34,80,0.7);"></div>
<div style="left:0.0px;top:1096.0px;width:2127.0px;height:26.0px;background:#2c3a5e;"></div>
<div style="left:2127.0px;top:1096.0px;width:245.0px;height:26.0px;background:#2c3a5e;"></div>
<div style="left:41.6px;top:1101.0px;width:1.0px;height:9.0px;background:#8090b0;"></div>
<div class="t" style="left:44.6px;top:1101.5px;font-size:11px;color:#e4e6f0;font-weight:bold;">0:20</div>
<div style="left:134.3px;top:1101.0px;width:1.0px;height:9.0px;background:#8090b0;"></div>
<div class="t" style="left:137.3px;top:1101.5px;font-size:11px;color:#e4e6f0;font-weight:bold;">0:30</div>
<div style="left:227.0px;top:1101.0px;width:1.0px;height:9.0px;background:#8090b0;"></div>
<div class="t" style="left:230.0px;top:1101.5px;font-size:11px;color:#e4e6f0;font-weight:bold;">0:40</div>
<div style="left:319.7px;top:1101.0px;width:1.0px;height:9.0px;background:#8090b0;"></div>
<div class="t" style="left:322.7px;top:1101.5px;font-size:11px;color:#e4e6f0;font-weight:bold;">0:50</div>
<div style="left:412.4px;top:1101.0px;width:1.0px;height:9.0px;background:#8090b0;"></div>
<div class="t" style="left:415.4px;top:1101.5px;font-size:11px;color:#e4e6f0;font-weight:bold;">1:00</div>
<div style="left:505.1px;top:1101.0px;width:1.0px;height:9.0px;background:#8090b0;"></div>
<div class="t" style="left:508.1px;top:1101.5px;font-size:11px;color:#e4e6f0;font-weight:bold;">1:10</div>
<div style="left:597.8px;top:1101.0px;width:1.0px;height:9.0px;background:#8090b0;"></div>
<div class="t" style="left:600.8px;top:1101.5px;font-size:11px;color:#e4e6f0;font-weight:bold;">1:20</div>
<div style="left:690.5px;top:1101.0px;width:1.0px;height:9.0px;background:#8090b0;"></div>
<div class="t" style="left:693.5px;top:1101.5px;font-size:11px;color:#e4e6f0;font-weight:bold;">1:30</div>
<div style="left:783.2px;top:1101.0px;width:1.0px;height:9.0px;background:#8090b0;"></div>
<div class="t" style="left:786.2px;top:1101.5px;font-size:11px;color:#e4e6f0;font-weight:bold;">1:40</div>
<div style="left:875.9px;top:1101.0px;width:1.0px;height:9.0px;background:#8090b0;"></div>
<div class="t" style="left:878.9px;top:1101.5px;font-size:11px;color:#e4e6f0;font-weight:bold;">1:50</div>
<div style="left:968.6px;top:1101.0px;width:1.0px;height:9.0px;background:#8090b0;"></div>
<div class="t" style="left:971.6px;top:1101.5px;font-size:11px;color:#e4e6f0;font-weight:bold;">2:00</div>
<div style="left:1061.3px;top:1101.0px;width:1.0px;height:9.0px;background:#8090b0;"></div>
<div class="t" style="left:1064.3px;top:1101.5px;font-size:11px;color:#e4e6f0;font-weight:bold;">2:10</div>
<div style="left:1154.0px;top:1101.0px;width:1.0px;height:9.0px;background:#8090b0;"></div>
<div class="t" style="left:1157.0px;top:1101.5px;font-size:11px;color:#e4e6f0;font-weight:bold;">2:20</div>
<div style="left:1246.7px;top:1101.0px;width:1.0px;height:9.0px;background:#8090b0;"></div>
<div class="t" style="left:1249.7px;top:1101.5px;font-size:11px;color:#e4e6f0;font-weight:bold;">2:30</div>
<div style="left:1339.4px;top:1101.0px;width:1.0px;height:9.0px;background:#8090b0;"></div>
<div class="t" style="left:1342.4px;top:1101.5px;font-size:11px;color:#e4e6f0;font-weight:bold;">2:40</div>
<div style="left:1432.1px;top:1101.0px;width:1.0px;height:9.0px;background:#8090b0;"></div>
<div class="t" style="left:1435.1px;top:1101.5px;font-size:11px;color:#e4e6f0;font-weight:bold;">2:50</div>
<div style="left:1524.8px;top:1101.0px;width:1.0px;height:9.0px;background:#8090b0;"></div>
<div class="t" style="left:1527.8px;top:1101.5px;font-size:11px;color:#e4e6f0;font-weight:bold;">3:00</div>
<div style="left:1617.5px;top:1101.0px;width:1.0px;height:9.0px;background:#8090b0;"></div>
<div class="t" style="left:1620.5px;top:1101.5px;font-size:11px;color:#e4e6f0;font-weight:bold;">3:10</div>
<div style="left:1710.2px;top:1101.0px;width:1.0px;height:9.0px;background:#8090b0;"></div>
<div class="t" style="left:1713.2px;top:1101.5px;font-size:11px;color:#e4e6f0;font-weight:bold;">3:20</div>
<div style="left:1802.9px;top:1101.0px;width:1.0px;height:9.0px;background:#8090b0;"></div>
<div class="t" style="left:1805.9px;top:1101.5px;font-size:11px;color:#e4e6f0;font-weight:bold;">3:30</div>
<div style="left:1895.6px;top:1101.0px;width:1.0px;height:9.0px;background:#8090b0;"></div>
<div class="t" style="left:1898.6px;top:1101.5px;font-size:11px;color:#e4e6f0;font-weight:bold;">3:40</div>
<div style="left:1988.3px;top:1101.0px;width:1.0px;height:9.0px;background:#8090b0;"></div>
<div class="t" style="left:1991.3px;top:1101.5px;font-size:11px;color:#e4e6f0;font-weight:bold;">3:50</div>
<div style="left:2081.0px;top:1101.0px;width:1.0px;height:9.0px;background:#8090b0;"></div>
<div class="t" style="left:2084.0px;top:1101.5px;font-size:11px;color:#e4e6f0;font-weight:bold;">4:00</div>
<div class="t" style="left:2093.0px;top:1078.0px;font-size:17px;color:#9a94b0;font-weight:bold;">2/1</div>
<div style="left:2130.0px;top:1101.0px;width:12.0px;height:12.0px;background:#b4ec6a;"></div>
<div class="t" style="left:2149.0px;top:1101.0px;font-size:11px;color:#e4e6f0;font-weight:bold;">1.00x</div>
<div style="left:2206.0px;top:1102.0px;width:12.0px;height:12.0px;background:#b4ec6a;"></div>
<div class="t" style="left:2227.0px;top:1101.0px;font-size:11px;color:#e4e6f0;font-weight:bold;">W</div>
<svg style="left:995px;top:133px" width="10" height="8"><path d="M1 1 L9 1 L5 7Z" fill="#e8ecd0"/></svg>
<svg style="left:111px;top:115px" width="8" height="10"><path d="M1 1 L7 5 L1 9" stroke="#d8e4ec" stroke-width="1.2" fill="none"/></svg>
<div style="left:2127.0px;top:127.0px;width:245.0px;height:969.0px;background:#2c3a5e;"></div>
<div style="left:2127.0px;top:95.0px;width:245.0px;height:32.0px;background:#2c3a5e;"></div>
<div style="left:2138.0px;top:101.0px;width:24.0px;height:14.0px;background:#221d32;border-radius:2px"></div>
<div class="t" style="left:2139.0px;top:102.0px;font-size:11px;color:#e6e2ee;font-weight:bold;">Set</div>
<div style="left:2176.0px;top:101.0px;width:24.0px;height:14.0px;background:#221d32;border-radius:2px"></div>
<div class="t" style="left:2183.0px;top:101.0px;font-size:11px;color:#e6e2ee;font-weight:bold;">↗</div>
<div style="left:2206.0px;top:101.0px;width:24.0px;height:14.0px;background:#221d32;border-radius:2px"></div>
<div class="t" style="left:2213.0px;top:101.0px;font-size:10px;color:#e6e2ee;font-weight:bold;">⌂</div>
<div style="left:2133.0px;top:121.0px;width:12.0px;height:12.0px;background:#1b1830;border-radius:50%"></div>
<div class="t" style="left:2134.0px;top:120.0px;font-size:10px;color:#e6e2ee;font-weight:bold;">←</div>
<div style="left:2150.0px;top:121.0px;width:12.0px;height:12.0px;background:#1b1830;border-radius:50%"></div>
<div class="t" style="left:2151.0px;top:120.0px;font-size:10px;color:#e6e2ee;font-weight:bold;">→</div>
<div style="left:2128.0px;top:142.0px;width:114.0px;height:20.0px;background:#9f4b3d;"></div>
<div style="left:2242.0px;top:142.0px;width:130.0px;height:20.0px;background:#29243b;"></div>
<div style="left:2128.0px;top:139.5px;width:244.0px;height:2.0px;background:#221e33;"></div>
<div style="left:2130.0px;top:141.0px;width:2.0px;height:22.0px;background:#d08040;"></div>
<div style="left:2134.0px;top:141.0px;width:1.5px;height:22.0px;background:#5a2a20;"></div>
<div style="left:2247.0px;top:145.0px;width:75.0px;height:14.0px;background:#37314c;"></div>
<div style="left:2247.0px;top:147.0px;width:75.0px;height:1.0px;background:#29233c;"></div>
<div style="left:2247.0px;top:151.0px;width:75.0px;height:1.0px;background:#29233c;"></div>
<div style="left:2247.0px;top:155.0px;width:75.0px;height:1.0px;background:#29233c;"></div>
<div style="left:2322.0px;top:142.0px;width:7.0px;height:20.0px;background:#1c1830;"></div>
<div style="left:2325.0px;top:142.0px;width:1.0px;height:20.0px;background:rgba(90,170,150,0.45);"></div>
<div style="left:2331.0px;top:145.0px;width:41.0px;height:13.0px;background:linear-gradient(90deg,#5e5c14 0%,#8a7420 45%,#b08a30 100%);"></div>
<div class="t" style="left:2322.0px;top:146.0px;width:40px;text-align:right;font-size:10px;color:#ffe9b0;font-weight:bold">-8.9</div>
<div style="left:2128.0px;top:164.0px;width:114.0px;height:39.0px;background:#9f4b3d;"></div>
<div style="left:2242.0px;top:164.0px;width:130.0px;height:39.0px;background:#29243b;"></div>
<div style="left:2128.0px;top:161.5px;width:244.0px;height:2.0px;background:#221e33;"></div>
<div style="left:2130.0px;top:163.0px;width:2.0px;height:41.0px;background:#d08040;"></div>
<div style="left:2134.0px;top:163.0px;width:1.5px;height:41.0px;background:#5a2a20;"></div>
<div style="left:2137.0px;top:165.8px;width:14px;height:14px;border:2.2px solid #f0c0b0;border-radius:50%"></div>
<svg style="left:2140.0px;top:169.5px" width="8" height="7"><path d="M0.5 0.5 L7.5 0.5 L4 6.5Z" fill="#f0c0b0"/></svg>
<div class="t" style="left:2159.0px;top:168.0px;font-size:11px;color:#ffe4d4;font-weight:bold;overflow:hidden;width:80px">16 Clap_Long</div>
<div style="left:2247.0px;top:168.0px;width:75.0px;height:14.0px;background:#1e1a30;"></div>
<div class="t" style="left:2249.0px;top:169.0px;font-size:11px;color:#f0eef6;font-weight:bold;">OTHERS</div>
<div class="t" style="left:2312.0px;top:169.0px;font-size:9px;color:#f0eef6;font-weight:normal;">▼</div>
<div style="left:2247.0px;top:186.0px;width:75.0px;height:14.0px;background:#37314c;"></div>
<div style="left:2247.0px;top:188.0px;width:75.0px;height:1.0px;background:#29233c;"></div>
<div style="left:2247.0px;top:192.0px;width:75.0px;height:1.0px;background:#29233c;"></div>
<div style="left:2247.0px;top:196.0px;width:75.0px;height:1.0px;background:#29233c;"></div>
<div style="left:2322.0px;top:164.0px;width:7.0px;height:39.0px;background:#1c1830;"></div>
<div style="left:2325.0px;top:164.0px;width:1.0px;height:39.0px;background:rgba(90,170,150,0.45);"></div>
<div style="left:2331.0px;top:168.0px;width:41.0px;height:14.0px;background:#b6e86c;"></div>
<div class="t" style="left:2322.0px;top:169.0px;width:40px;text-align:right;font-size:11px;color:#1c2a10;font-weight:bold">16</div>
<div style="left:2331.0px;top:186.0px;width:41.0px;height:13.0px;background:linear-gradient(90deg,#5e5c14 0%,#8a7420 45%,#b08a30 100%);"></div>
<div class="t" style="left:2322.0px;top:187.0px;width:40px;text-align:right;font-size:10px;color:#ffe9b0;font-weight:bold">-10.6</div>
<div style="left:2128.0px;top:205.0px;width:114.0px;height:96.0px;background:#b1aad7;"></div>
<div style="left:2242.0px;top:205.0px;width:130.0px;height:96.0px;background:#29243b;"></div>
<div style="left:2247.0px;top:225.0px;width:75.0px;height:76.0px;background:#2c3a5e;"></div>
<div style="left:2128.0px;top:202.5px;width:244.0px;height:2.0px;background:#221e33;"></div>
<div style="left:2133.0px;top:206.8px;width:14px;height:14px;border:2.2px solid #514b86;border-radius:50%"></div>
<svg style="left:2136.0px;top:210.5px" width="8" height="7"><path d="M0.5 0.5 L7.5 0.5 L4 6.5Z" fill="#514b86"/></svg>
<div class="t" style="left:2153.0px;top:209.0px;font-size:11px;color:#35306a;font-weight:bold;overflow:hidden;width:80px">SYNTHS</div>
<div style="left:2247.0px;top:209.0px;width:75.0px;height:14.0px;background:#1e1a30;"></div>
<div class="t" style="left:2249.0px;top:210.0px;font-size:11px;color:#f0eef6;font-weight:bold;">Sends Only</div>
<div class="t" style="left:2312.0px;top:210.0px;font-size:9px;color:#f0eef6;font-weight:normal;">▼</div>
<div style="left:2247.0px;top:227.0px;width:75.0px;height:14.0px;background:#2c3a5e;border:1px solid #1c2440"></div>
<div style="left:2322.0px;top:205.0px;width:7.0px;height:96.0px;background:#1c1830;"></div>
<div style="left:2325.0px;top:205.0px;width:1.0px;height:96.0px;background:rgba(90,170,150,0.45);"></div>
<div style="left:2331.0px;top:209.0px;width:41.0px;height:14.0px;background:#b6e86c;"></div>
<div class="t" style="left:2322.0px;top:210.0px;width:40px;text-align:right;font-size:11px;color:#1c2a10;font-weight:bold">17</div>
<div style="left:2331.0px;top:227.0px;width:41.0px;height:13.0px;background:linear-gradient(90deg,#5e5c14 0%,#8a7420 45%,#b08a30 100%);"></div>
<div class="t" style="left:2322.0px;top:228.0px;width:40px;text-align:right;font-size:10px;color:#ffe9b0;font-weight:bold">0</div>
<div style="left:2128.0px;top:303.0px;width:114.0px;height:38.7px;background:#b1aad7;"></div>
<div style="left:2242.0px;top:303.0px;width:130.0px;height:38.7px;background:#29243b;"></div>
<div style="left:2128.0px;top:300.5px;width:244.0px;height:2.0px;background:#221e33;"></div>
<div style="left:2133.0px;top:302.0px;width:1.5px;height:40.7px;background:rgba(50,40,90,0.7);"></div>
<div style="left:2137.0px;top:304.8px;width:14px;height:14px;border:2.2px solid #514b86;border-radius:50%"></div>
<svg style="left:2140.0px;top:308.5px" width="8" height="7"><path d="M0.5 0.5 L7.5 0.5 L4 6.5Z" fill="#514b86"/></svg>
<div class="t" style="left:2159.0px;top:307.0px;font-size:11px;color:#35306a;font-weight:bold;overflow:hidden;width:80px">18 Soft Piano</div>
<div style="left:2247.0px;top:307.0px;width:75.0px;height:14.0px;background:#1e1a30;"></div>
<div class="t" style="left:2249.0px;top:308.0px;font-size:11px;color:#f0eef6;font-weight:bold;">SYNTHS</div>
<div class="t" style="left:2312.0px;top:308.0px;font-size:9px;color:#f0eef6;font-weight:normal;">▼</div>
<div style="left:2247.0px;top:325.0px;width:75.0px;height:14.0px;background:#37314c;"></div>
<div style="left:2247.0px;top:327.0px;width:75.0px;height:1.0px;background:#29233c;"></div>
<div style="left:2247.0px;top:331.0px;width:75.0px;height:1.0px;background:#29233c;"></div>
<div style="left:2247.0px;top:335.0px;width:75.0px;height:1.0px;background:#29233c;"></div>
<div style="left:2322.0px;top:303.0px;width:7.0px;height:38.7px;background:#1c1830;"></div>
<div style="left:2325.0px;top:303.0px;width:1.0px;height:38.7px;background:rgba(90,170,150,0.45);"></div>
<div style="left:2331.0px;top:307.0px;width:41.0px;height:14.0px;background:#b6e86c;"></div>
<div class="t" style="left:2322.0px;top:308.0px;width:40px;text-align:right;font-size:11px;color:#1c2a10;font-weight:bold">18</div>
<div style="left:2331.0px;top:325.0px;width:41.0px;height:13.0px;background:linear-gradient(90deg,#5e5c14 0%,#8a7420 45%,#b08a30 100%);"></div>
<div class="t" style="left:2322.0px;top:326.0px;width:40px;text-align:right;font-size:10px;color:#ffe9b0;font-weight:bold">-5.6</div>
<div style="left:2128.0px;top:343.7px;width:114.0px;height:38.7px;background:#b1aad7;"></div>
<div style="left:2242.0px;top:343.7px;width:130.0px;height:38.7px;background:#29243b;"></div>
<div style="left:2128.0px;top:341.2px;width:244.0px;height:2.0px;background:#221e33;"></div>
<div style="left:2133.0px;top:342.7px;width:1.5px;height:40.7px;background:rgba(50,40,90,0.7);"></div>
<div style="left:2137.0px;top:345.5px;width:14px;height:14px;border:2.2px solid #514b86;border-radius:50%"></div>
<svg style="left:2140.0px;top:349.2px" width="8" height="7"><path d="M0.5 0.5 L7.5 0.5 L4 6.5Z" fill="#514b86"/></svg>
<div class="t" style="left:2159.0px;top:347.7px;font-size:11px;color:#35306a;font-weight:bold;overflow:hidden;width:80px">19 LABS</div>
<div style="left:2247.0px;top:347.7px;width:75.0px;height:14.0px;background:#1e1a30;"></div>
<div class="t" style="left:2249.0px;top:348.7px;font-size:11px;color:#f0eef6;font-weight:bold;">SYNTHS</div>
<div class="t" style="left:2312.0px;top:348.7px;font-size:9px;color:#f0eef6;font-weight:normal;">▼</div>
<div style="left:2247.0px;top:365.7px;width:75.0px;height:14.0px;background:#37314c;"></div>
<div style="left:2247.0px;top:367.7px;width:75.0px;height:1.0px;background:#29233c;"></div>
<div style="left:2247.0px;top:371.7px;width:75.0px;height:1.0px;background:#29233c;"></div>
<div style="left:2247.0px;top:375.7px;width:75.0px;height:1.0px;background:#29233c;"></div>
<div style="left:2322.0px;top:343.7px;width:7.0px;height:38.7px;background:#1c1830;"></div>
<div style="left:2325.0px;top:343.7px;width:1.0px;height:38.7px;background:rgba(90,170,150,0.45);"></div>
<div style="left:2331.0px;top:347.7px;width:41.0px;height:14.0px;background:#1e1a30;"></div>
<div class="t" style="left:2322.0px;top:348.7px;width:40px;text-align:right;font-size:11px;color:#f4f4f4;font-weight:bold">19</div>
<div style="left:2333.0px;top:348.7px;width:3.0px;height:3.0px;background:#7fd4e0;"></div>
<div style="left:2331.0px;top:365.7px;width:41.0px;height:13.0px;background:linear-gradient(90deg,#5e5c14 0%,#8a7420 45%,#b08a30 100%);"></div>
<div class="t" style="left:2322.0px;top:366.7px;width:40px;text-align:right;font-size:10px;color:#ffe9b0;font-weight:bold">-3.1</div>
<div style="left:2128.0px;top:384.4px;width:114.0px;height:38.7px;background:#b1aad7;"></div>
<div style="left:2242.0px;top:384.4px;width:130.0px;height:38.7px;background:#29243b;"></div>
<div style="left:2128.0px;top:381.9px;width:244.0px;height:2.0px;background:#221e33;"></div>
<div style="left:2133.0px;top:383.4px;width:1.5px;height:40.7px;background:rgba(50,40,90,0.7);"></div>
<div style="left:2137.0px;top:386.2px;width:14px;height:14px;border:2.2px solid #514b86;border-radius:50%"></div>
<svg style="left:2140.0px;top:389.9px" width="8" height="7"><path d="M0.5 0.5 L7.5 0.5 L4 6.5Z" fill="#514b86"/></svg>
<div class="t" style="left:2159.0px;top:388.4px;font-size:11px;color:#35306a;font-weight:bold;overflow:hidden;width:80px">20 LABS</div>
<div style="left:2247.0px;top:388.4px;width:75.0px;height:14.0px;background:#1e1a30;"></div>
<div class="t" style="left:2249.0px;top:389.4px;font-size:11px;color:#f0eef6;font-weight:bold;">SYNTHS</div>
<div class="t" style="left:2312.0px;top:389.4px;font-size:9px;color:#f0eef6;font-weight:normal;">▼</div>
<div style="left:2247.0px;top:406.4px;width:75.0px;height:14.0px;background:#2c3a5e;border:1px solid #1c2440"></div>
<div style="left:2322.0px;top:384.4px;width:7.0px;height:38.7px;background:#1c1830;"></div>
<div style="left:2325.0px;top:384.4px;width:1.0px;height:38.7px;background:rgba(90,170,150,0.45);"></div>
<div style="left:2331.0px;top:388.4px;width:41.0px;height:14.0px;background:#1e1a30;"></div>
<div class="t" style="left:2322.0px;top:389.4px;width:40px;text-align:right;font-size:11px;color:#f4f4f4;font-weight:bold">20</div>
<div style="left:2333.0px;top:389.4px;width:3.0px;height:3.0px;background:#7fd4e0;"></div>
<div style="left:2331.0px;top:406.4px;width:41.0px;height:13.0px;background:linear-gradient(90deg,#5e5c14 0%,#8a7420 45%,#b08a30 100%);"></div>
<div class="t" style="left:2322.0px;top:407.4px;width:40px;text-align:right;font-size:10px;color:#ffe9b0;font-weight:bold">-3.8</div>
<div style="left:2128.0px;top:425.1px;width:114.0px;height:38.7px;background:#b1aad7;"></div>
<div style="left:2242.0px;top:425.1px;width:130.0px;height:38.7px;background:#29243b;"></div>
<div style="left:2128.0px;top:422.6px;width:244.0px;height:2.0px;background:#221e33;"></div>
<div style="left:2133.0px;top:424.1px;width:1.5px;height:40.7px;background:rgba(50,40,90,0.7);"></div>
<div style="left:2137.0px;top:426.9px;width:14px;height:14px;border:2.2px solid #514b86;border-radius:50%"></div>
<svg style="left:2140.0px;top:430.6px" width="8" height="7"><path d="M0.5 0.5 L7.5 0.5 L4 6.5Z" fill="#514b86"/></svg>
<div class="t" style="left:2159.0px;top:429.1px;font-size:11px;color:#35306a;font-weight:bold;overflow:hidden;width:80px">21 LABS</div>
<div style="left:2247.0px;top:429.1px;width:75.0px;height:14.0px;background:#1e1a30;"></div>
<div class="t" style="left:2249.0px;top:430.1px;font-size:11px;color:#f0eef6;font-weight:bold;">SYNTHS</div>
<div class="t" style="left:2312.0px;top:430.1px;font-size:9px;color:#f0eef6;font-weight:normal;">▼</div>
<div style="left:2247.0px;top:447.1px;width:75.0px;height:14.0px;background:#2c3a5e;border:1px solid #1c2440"></div>
<div style="left:2322.0px;top:425.1px;width:7.0px;height:38.7px;background:#1c1830;"></div>
<div style="left:2325.0px;top:425.1px;width:1.0px;height:38.7px;background:rgba(90,170,150,0.45);"></div>
<div style="left:2331.0px;top:429.1px;width:41.0px;height:14.0px;background:#1e1a30;"></div>
<div class="t" style="left:2322.0px;top:430.1px;width:40px;text-align:right;font-size:11px;color:#f4f4f4;font-weight:bold">21</div>
<div style="left:2333.0px;top:430.1px;width:3.0px;height:3.0px;background:#7fd4e0;"></div>
<div style="left:2331.0px;top:447.1px;width:41.0px;height:13.0px;background:linear-gradient(90deg,#5e5c14 0%,#8a7420 45%,#b08a30 100%);"></div>
<div class="t" style="left:2322.0px;top:448.1px;width:40px;text-align:right;font-size:10px;color:#ffe9b0;font-weight:bold">-7.7</div>
<div style="left:2128.0px;top:465.8px;width:114.0px;height:38.7px;background:#b1aad7;"></div>
<div style="left:2242.0px;top:465.8px;width:130.0px;height:38.7px;background:#29243b;"></div>
<div style="left:2128.0px;top:463.3px;width:244.0px;height:2.0px;background:#221e33;"></div>
<div style="left:2133.0px;top:464.8px;width:1.5px;height:40.7px;background:rgba(50,40,90,0.7);"></div>
<div style="left:2137.0px;top:467.6px;width:14px;height:14px;border:2.2px solid #514b86;border-radius:50%"></div>
<svg style="left:2140.0px;top:471.3px" width="8" height="7"><path d="M0.5 0.5 L7.5 0.5 L4 6.5Z" fill="#514b86"/></svg>
<div class="t" style="left:2159.0px;top:469.8px;font-size:11px;color:#35306a;font-weight:bold;overflow:hidden;width:80px">22 AuS Spacey</div>
<div style="left:2247.0px;top:469.8px;width:75.0px;height:14.0px;background:#1e1a30;"></div>
<div class="t" style="left:2249.0px;top:470.8px;font-size:11px;color:#f0eef6;font-weight:bold;">SYNTHS</div>
<div class="t" style="left:2312.0px;top:470.8px;font-size:9px;color:#f0eef6;font-weight:normal;">▼</div>
<div style="left:2247.0px;top:487.8px;width:75.0px;height:14.0px;background:#37314c;"></div>
<div style="left:2247.0px;top:489.8px;width:75.0px;height:1.0px;background:#29233c;"></div>
<div style="left:2247.0px;top:493.8px;width:75.0px;height:1.0px;background:#29233c;"></div>
<div style="left:2247.0px;top:497.8px;width:75.0px;height:1.0px;background:#29233c;"></div>
<div style="left:2322.0px;top:465.8px;width:7.0px;height:38.7px;background:#1c1830;"></div>
<div style="left:2325.0px;top:465.8px;width:1.0px;height:38.7px;background:rgba(90,170,150,0.45);"></div>
<div style="left:2331.0px;top:469.8px;width:41.0px;height:14.0px;background:#1e1a30;"></div>
<div class="t" style="left:2322.0px;top:470.8px;width:40px;text-align:right;font-size:11px;color:#f4f4f4;font-weight:bold">22</div>
<div style="left:2333.0px;top:470.8px;width:3.0px;height:3.0px;background:#7fd4e0;"></div>
<div style="left:2331.0px;top:487.8px;width:41.0px;height:13.0px;background:linear-gradient(90deg,#5e5c14 0%,#8a7420 45%,#b08a30 100%);"></div>
<div class="t" style="left:2322.0px;top:488.8px;width:40px;text-align:right;font-size:10px;color:#ffe9b0;font-weight:bold">-4.5</div>
<div style="left:2128.0px;top:506.5px;width:114.0px;height:38.7px;background:#b1aad7;"></div>
<div style="left:2242.0px;top:506.5px;width:130.0px;height:38.7px;background:#29243b;"></div>
<div style="left:2128.0px;top:504.0px;width:244.0px;height:2.0px;background:#221e33;"></div>
<div style="left:2133.0px;top:505.5px;width:1.5px;height:40.7px;background:rgba(50,40,90,0.7);"></div>
<div style="left:2137.0px;top:508.3px;width:14px;height:14px;border:2.2px solid #514b86;border-radius:50%"></div>
<svg style="left:2140.0px;top:512.0px" width="8" height="7"><path d="M0.5 0.5 L7.5 0.5 L4 6.5Z" fill="#514b86"/></svg>
<div class="t" style="left:2159.0px;top:510.5px;font-size:11px;color:#35306a;font-weight:bold;overflow:hidden;width:80px">23 Serum</div>
<div style="left:2247.0px;top:510.5px;width:75.0px;height:14.0px;background:#1e1a30;"></div>
<div class="t" style="left:2249.0px;top:511.5px;font-size:11px;color:#f0eef6;font-weight:bold;">SYNTHS</div>
<div class="t" style="left:2312.0px;top:511.5px;font-size:9px;color:#f0eef6;font-weight:normal;">▼</div>
<div style="left:2247.0px;top:528.5px;width:75.0px;height:14.0px;background:#2c3a5e;border:1px solid #1c2440"></div>
<div style="left:2322.0px;top:506.5px;width:7.0px;height:38.7px;background:#1c1830;"></div>
<div style="left:2325.0px;top:506.5px;width:1.0px;height:38.7px;background:rgba(90,170,150,0.45);"></div>
<div style="left:2331.0px;top:510.5px;width:41.0px;height:14.0px;background:#b6e86c;"></div>
<div class="t" style="left:2322.0px;top:511.5px;width:40px;text-align:right;font-size:11px;color:#1c2a10;font-weight:bold">23</div>
<div style="left:2331.0px;top:528.5px;width:41.0px;height:13.0px;background:linear-gradient(90deg,#5e5c14 0%,#8a7420 45%,#b08a30 100%);"></div>
<div class="t" style="left:2322.0px;top:529.5px;width:40px;text-align:right;font-size:10px;color:#ffe9b0;font-weight:bold">-4.1</div>
<div style="left:2128.0px;top:547.2px;width:114.0px;height:38.7px;background:#b1aad7;"></div>
<div style="left:2242.0px;top:547.2px;width:130.0px;height:38.7px;background:#29243b;"></div>
<div style="left:2128.0px;top:544.7px;width:244.0px;height:2.0px;background:#221e33;"></div>
<div style="left:2133.0px;top:546.2px;width:1.5px;height:40.7px;background:rgba(50,40,90,0.7);"></div>
<div style="left:2137.0px;top:549.0px;width:14px;height:14px;border:2.2px solid #514b86;border-radius:50%"></div>
<svg style="left:2140.0px;top:552.7px" width="8" height="7"><path d="M0.5 0.5 L7.5 0.5 L4 6.5Z" fill="#514b86"/></svg>
<div class="t" style="left:2159.0px;top:551.2px;font-size:11px;color:#35306a;font-weight:bold;overflow:hidden;width:80px">24 DS_SCB_sy</div>
<div style="left:2247.0px;top:551.2px;width:75.0px;height:14.0px;background:#1e1a30;"></div>
<div class="t" style="left:2249.0px;top:552.2px;font-size:11px;color:#f0eef6;font-weight:bold;">SYNTHS</div>
<div class="t" style="left:2312.0px;top:552.2px;font-size:9px;color:#f0eef6;font-weight:normal;">▼</div>
<div style="left:2247.0px;top:569.2px;width:75.0px;height:14.0px;background:#37314c;"></div>
<div style="left:2247.0px;top:571.2px;width:75.0px;height:1.0px;background:#29233c;"></div>
<div style="left:2247.0px;top:575.2px;width:75.0px;height:1.0px;background:#29233c;"></div>
<div style="left:2247.0px;top:579.2px;width:75.0px;height:1.0px;background:#29233c;"></div>
<div style="left:2322.0px;top:547.2px;width:7.0px;height:38.7px;background:#1c1830;"></div>
<div style="left:2325.0px;top:547.2px;width:1.0px;height:38.7px;background:rgba(90,170,150,0.45);"></div>
<div style="left:2331.0px;top:551.2px;width:41.0px;height:14.0px;background:#1e1a30;"></div>
<div class="t" style="left:2322.0px;top:552.2px;width:40px;text-align:right;font-size:11px;color:#f4f4f4;font-weight:bold">24</div>
<div style="left:2333.0px;top:552.2px;width:3.0px;height:3.0px;background:#7fd4e0;"></div>
<div style="left:2331.0px;top:569.2px;width:41.0px;height:13.0px;background:linear-gradient(90deg,#5e5c14 0%,#8a7420 45%,#b08a30 100%);"></div>
<div class="t" style="left:2322.0px;top:570.2px;width:40px;text-align:right;font-size:10px;color:#ffe9b0;font-weight:bold">-16.5</div>
<div style="left:2128.0px;top:587.9px;width:114.0px;height:38.7px;background:#b1aad7;"></div>
<div style="left:2242.0px;top:587.9px;width:130.0px;height:38.7px;background:#29243b;"></div>
<div style="left:2128.0px;top:585.4px;width:244.0px;height:2.0px;background:#221e33;"></div>
<div style="left:2133.0px;top:586.9px;width:1.5px;height:40.7px;background:rgba(50,40,90,0.7);"></div>
<div style="left:2137.0px;top:589.7px;width:14px;height:14px;border:2.2px solid #514b86;border-radius:50%"></div>
<svg style="left:2140.0px;top:593.4px" width="8" height="7"><path d="M0.5 0.5 L7.5 0.5 L4 6.5Z" fill="#514b86"/></svg>
<div class="t" style="left:2159.0px;top:591.9px;font-size:11px;color:#35306a;font-weight:bold;overflow:hidden;width:80px">25 ARP Poly Le</div>
<div style="left:2247.0px;top:591.9px;width:75.0px;height:14.0px;background:#1e1a30;"></div>
<div class="t" style="left:2249.0px;top:592.9px;font-size:11px;color:#f0eef6;font-weight:bold;">SYNTHS</div>
<div class="t" style="left:2312.0px;top:592.9px;font-size:9px;color:#f0eef6;font-weight:normal;">▼</div>
<div style="left:2247.0px;top:609.9px;width:75.0px;height:14.0px;background:#37314c;"></div>
<div style="left:2247.0px;top:611.9px;width:75.0px;height:1.0px;background:#29233c;"></div>
<div style="left:2247.0px;top:615.9px;width:75.0px;height:1.0px;background:#29233c;"></div>
<div style="left:2247.0px;top:619.9px;width:75.0px;height:1.0px;background:#29233c;"></div>
<div style="left:2322.0px;top:587.9px;width:7.0px;height:38.7px;background:#1c1830;"></div>
<div style="left:2325.0px;top:587.9px;width:1.0px;height:38.7px;background:rgba(90,170,150,0.45);"></div>
<div style="left:2331.0px;top:591.9px;width:41.0px;height:14.0px;background:#b6e86c;"></div>
<div class="t" style="left:2322.0px;top:592.9px;width:40px;text-align:right;font-size:11px;color:#1c2a10;font-weight:bold">25</div>
<div style="left:2331.0px;top:609.9px;width:41.0px;height:13.0px;background:linear-gradient(90deg,#5e5c14 0%,#8a7420 45%,#b08a30 100%);"></div>
<div class="t" style="left:2322.0px;top:610.9px;width:40px;text-align:right;font-size:10px;color:#ffe9b0;font-weight:bold">-11.3</div>
<div style="left:2128.0px;top:628.6px;width:114.0px;height:38.7px;background:#b1aad7;"></div>
<div style="left:2242.0px;top:628.6px;width:130.0px;height:38.7px;background:#29243b;"></div>
<div style="left:2128.0px;top:626.1px;width:244.0px;height:2.0px;background:#221e33;"></div>
<div style="left:2133.0px;top:627.6px;width:1.5px;height:40.7px;background:rgba(50,40,90,0.7);"></div>
<div style="left:2137.0px;top:630.4px;width:14px;height:14px;border:2.2px solid #514b86;border-radius:50%"></div>
<svg style="left:2140.0px;top:634.1px" width="8" height="7"><path d="M0.5 0.5 L7.5 0.5 L4 6.5Z" fill="#514b86"/></svg>
<div class="t" style="left:2159.0px;top:632.6px;font-size:11px;color:#35306a;font-weight:bold;overflow:hidden;width:80px">26 {9933D7D7-</div>
<div style="left:2247.0px;top:632.6px;width:75.0px;height:14.0px;background:#1e1a30;"></div>
<div class="t" style="left:2249.0px;top:633.6px;font-size:11px;color:#f0eef6;font-weight:bold;">SYNTHS</div>
<div class="t" style="left:2312.0px;top:633.6px;font-size:9px;color:#f0eef6;font-weight:normal;">▼</div>
<div style="left:2247.0px;top:650.6px;width:75.0px;height:14.0px;background:#37314c;"></div>
<div style="left:2247.0px;top:652.6px;width:75.0px;height:1.0px;background:#29233c;"></div>
<div style="left:2247.0px;top:656.6px;width:75.0px;height:1.0px;background:#29233c;"></div>
<div style="left:2247.0px;top:660.6px;width:75.0px;height:1.0px;background:#29233c;"></div>
<div style="left:2322.0px;top:628.6px;width:7.0px;height:38.7px;background:#1c1830;"></div>
<div style="left:2325.0px;top:628.6px;width:1.0px;height:38.7px;background:rgba(90,170,150,0.45);"></div>
<div style="left:2331.0px;top:632.6px;width:41.0px;height:14.0px;background:#b6e86c;"></div>
<div class="t" style="left:2322.0px;top:633.6px;width:40px;text-align:right;font-size:11px;color:#1c2a10;font-weight:bold">26</div>
<div style="left:2331.0px;top:650.6px;width:41.0px;height:13.0px;background:linear-gradient(90deg,#5e5c14 0%,#8a7420 45%,#b08a30 100%);"></div>
<div class="t" style="left:2322.0px;top:651.6px;width:40px;text-align:right;font-size:10px;color:#ffe9b0;font-weight:bold">-17.8</div>
<div style="left:2128.0px;top:669.3px;width:114.0px;height:38.7px;background:#b1aad7;"></div>
<div style="left:2242.0px;top:669.3px;width:130.0px;height:38.7px;background:#29243b;"></div>
<div style="left:2128.0px;top:666.8px;width:244.0px;height:2.0px;background:#221e33;"></div>
<div style="left:2133.0px;top:668.3px;width:1.5px;height:40.7px;background:rgba(50,40,90,0.7);"></div>
<div style="left:2137.0px;top:671.1px;width:14px;height:14px;border:2.2px solid #514b86;border-radius:50%"></div>
<svg style="left:2140.0px;top:674.8px" width="8" height="7"><path d="M0.5 0.5 L7.5 0.5 L4 6.5Z" fill="#514b86"/></svg>
<div class="t" style="left:2159.0px;top:673.3px;font-size:11px;color:#35306a;font-weight:bold;overflow:hidden;width:80px">27 760 - Super</div>
<div style="left:2247.0px;top:673.3px;width:75.0px;height:14.0px;background:#1e1a30;"></div>
<div class="t" style="left:2249.0px;top:674.3px;font-size:11px;color:#f0eef6;font-weight:bold;">SYNTHS</div>
<div class="t" style="left:2312.0px;top:674.3px;font-size:9px;color:#f0eef6;font-weight:normal;">▼</div>
<div style="left:2247.0px;top:691.3px;width:75.0px;height:14.0px;background:#37314c;"></div>
<div style="left:2247.0px;top:693.3px;width:75.0px;height:1.0px;background:#29233c;"></div>
<div style="left:2247.0px;top:697.3px;width:75.0px;height:1.0px;background:#29233c;"></div>
<div style="left:2247.0px;top:701.3px;width:75.0px;height:1.0px;background:#29233c;"></div>
<div style="left:2322.0px;top:669.3px;width:7.0px;height:38.7px;background:#1c1830;"></div>
<div style="left:2325.0px;top:669.3px;width:1.0px;height:38.7px;background:rgba(90,170,150,0.45);"></div>
<div style="left:2331.0px;top:673.3px;width:41.0px;height:14.0px;background:#b6e86c;"></div>
<div class="t" style="left:2322.0px;top:674.3px;width:40px;text-align:right;font-size:11px;color:#1c2a10;font-weight:bold">27</div>
<div style="left:2331.0px;top:691.3px;width:41.0px;height:13.0px;background:linear-gradient(90deg,#5e5c14 0%,#8a7420 45%,#b08a30 100%);"></div>
<div class="t" style="left:2322.0px;top:692.3px;width:40px;text-align:right;font-size:10px;color:#ffe9b0;font-weight:bold">0</div>
<div style="left:2128.0px;top:710.0px;width:114.0px;height:38.7px;background:#b1aad7;"></div>
<div style="left:2242.0px;top:710.0px;width:130.0px;height:38.7px;background:#29243b;"></div>
<div style="left:2128.0px;top:707.5px;width:244.0px;height:2.0px;background:#221e33;"></div>
<div style="left:2133.0px;top:709.0px;width:1.5px;height:40.7px;background:rgba(50,40,90,0.7);"></div>
<div style="left:2137.0px;top:711.8px;width:14px;height:14px;border:2.2px solid #514b86;border-radius:50%"></div>
<svg style="left:2140.0px;top:715.5px" width="8" height="7"><path d="M0.5 0.5 L7.5 0.5 L4 6.5Z" fill="#514b86"/></svg>
<div class="t" style="left:2159.0px;top:714.0px;font-size:11px;color:#35306a;font-weight:bold;overflow:hidden;width:80px">28 Serum</div>
<div style="left:2247.0px;top:714.0px;width:75.0px;height:14.0px;background:#1e1a30;"></div>
<div class="t" style="left:2249.0px;top:715.0px;font-size:11px;color:#f0eef6;font-weight:bold;">SYNTHS</div>
<div class="t" style="left:2312.0px;top:715.0px;font-size:9px;color:#f0eef6;font-weight:normal;">▼</div>
<div style="left:2247.0px;top:732.0px;width:75.0px;height:14.0px;background:#37314c;"></div>
<div style="left:2247.0px;top:734.0px;width:75.0px;height:1.0px;background:#29233c;"></div>
<div style="left:2247.0px;top:738.0px;width:75.0px;height:1.0px;background:#29233c;"></div>
<div style="left:2247.0px;top:742.0px;width:75.0px;height:1.0px;background:#29233c;"></div>
<div style="left:2322.0px;top:710.0px;width:7.0px;height:38.7px;background:#1c1830;"></div>
<div style="left:2325.0px;top:710.0px;width:1.0px;height:38.7px;background:rgba(90,170,150,0.45);"></div>
<div style="left:2331.0px;top:714.0px;width:41.0px;height:14.0px;background:#b6e86c;"></div>
<div class="t" style="left:2322.0px;top:715.0px;width:40px;text-align:right;font-size:11px;color:#1c2a10;font-weight:bold">28</div>
<div style="left:2331.0px;top:732.0px;width:41.0px;height:13.0px;background:linear-gradient(90deg,#5e5c14 0%,#8a7420 45%,#b08a30 100%);"></div>
<div class="t" style="left:2322.0px;top:733.0px;width:40px;text-align:right;font-size:10px;color:#ffe9b0;font-weight:bold">-0.5</div>
<div style="left:2128.0px;top:750.7px;width:114.0px;height:38.7px;background:#b1aad7;"></div>
<div style="left:2242.0px;top:750.7px;width:130.0px;height:38.7px;background:#29243b;"></div>
<div style="left:2128.0px;top:748.2px;width:244.0px;height:2.0px;background:#221e33;"></div>
<div style="left:2133.0px;top:749.7px;width:1.5px;height:40.7px;background:rgba(50,40,90,0.7);"></div>
<div style="left:2137.0px;top:752.5px;width:14px;height:14px;border:2.2px solid #514b86;border-radius:50%"></div>
<svg style="left:2140.0px;top:756.2px" width="8" height="7"><path d="M0.5 0.5 L7.5 0.5 L4 6.5Z" fill="#514b86"/></svg>
<div class="t" style="left:2157.0px;top:754.7px;font-size:11px;color:#35306a;font-weight:bold;overflow:hidden;width:80px">Leads</div>
<div style="left:2247.0px;top:754.7px;width:75.0px;height:14.0px;background:#1e1a30;"></div>
<div class="t" style="left:2249.0px;top:755.7px;font-size:11px;color:#f0eef6;font-weight:bold;">SYNTHS</div>
<div class="t" style="left:2312.0px;top:755.7px;font-size:9px;color:#f0eef6;font-weight:normal;">▼</div>
<div style="left:2247.0px;top:772.7px;width:75.0px;height:14.0px;background:#2c3a5e;border:1px solid #1c2440"></div>
<div style="left:2322.0px;top:750.7px;width:7.0px;height:38.7px;background:#1c1830;"></div>
<div style="left:2325.0px;top:750.7px;width:1.0px;height:38.7px;background:rgba(90,170,150,0.45);"></div>
<div style="left:2331.0px;top:754.7px;width:41.0px;height:14.0px;background:#b6e86c;"></div>
<div class="t" style="left:2322.0px;top:755.7px;width:40px;text-align:right;font-size:11px;color:#1c2a10;font-weight:bold">29</div>
<div style="left:2331.0px;top:772.7px;width:41.0px;height:13.0px;background:linear-gradient(90deg,#5e5c14 0%,#8a7420 45%,#b08a30 100%);"></div>
<div class="t" style="left:2322.0px;top:773.7px;width:40px;text-align:right;font-size:10px;color:#ffe9b0;font-weight:bold">0</div>
<div style="left:2128.0px;top:791.4px;width:114.0px;height:38.7px;background:#b1aad7;"></div>
<div style="left:2242.0px;top:791.4px;width:130.0px;height:38.7px;background:#29243b;"></div>
<div style="left:2128.0px;top:788.9px;width:244.0px;height:2.0px;background:#221e33;"></div>
<div style="left:2133.0px;top:790.4px;width:1.5px;height:40.7px;background:rgba(50,40,90,0.7);"></div>
<div style="left:2139.0px;top:790.4px;width:1.5px;height:40.7px;background:rgba(50,40,90,0.7);"></div>
<div style="left:2143.0px;top:793.2px;width:14px;height:14px;border:2.2px solid #514b86;border-radius:50%"></div>
<svg style="left:2146.0px;top:796.9px" width="8" height="7"><path d="M0.5 0.5 L7.5 0.5 L4 6.5Z" fill="#514b86"/></svg>
<div class="t" style="left:2165.0px;top:795.4px;font-size:11px;color:#35306a;font-weight:bold;overflow:hidden;width:80px">30 Instrumen</div>
<div style="left:2247.0px;top:795.4px;width:75.0px;height:14.0px;background:#1e1a30;"></div>
<div class="t" style="left:2249.0px;top:796.4px;font-size:11px;color:#f0eef6;font-weight:bold;">Leads</div>
<div class="t" style="left:2312.0px;top:796.4px;font-size:9px;color:#f0eef6;font-weight:normal;">▼</div>
<div style="left:2247.0px;top:813.4px;width:75.0px;height:14.0px;background:#37314c;"></div>
<div style="left:2247.0px;top:815.4px;width:75.0px;height:1.0px;background:#29233c;"></div>
<div style="left:2247.0px;top:819.4px;width:75.0px;height:1.0px;background:#29233c;"></div>
<div style="left:2247.0px;top:823.4px;width:75.0px;height:1.0px;background:#29233c;"></div>
<div style="left:2322.0px;top:791.4px;width:7.0px;height:38.7px;background:#1c1830;"></div>
<div style="left:2325.0px;top:791.4px;width:1.0px;height:38.7px;background:rgba(90,170,150,0.45);"></div>
<div style="left:2331.0px;top:795.4px;width:41.0px;height:14.0px;background:#b6e86c;"></div>
<div class="t" style="left:2322.0px;top:796.4px;width:40px;text-align:right;font-size:11px;color:#1c2a10;font-weight:bold">30</div>
<div style="left:2331.0px;top:813.4px;width:41.0px;height:13.0px;background:linear-gradient(90deg,#5e5c14 0%,#8a7420 45%,#b08a30 100%);"></div>
<div class="t" style="left:2322.0px;top:814.4px;width:40px;text-align:right;font-size:10px;color:#ffe9b0;font-weight:bold">-4.4</div>
<div style="left:2128.0px;top:832.1px;width:114.0px;height:38.7px;background:#b1aad7;"></div>
<div style="left:2242.0px;top:832.1px;width:130.0px;height:38.7px;background:#29243b;"></div>
<div style="left:2128.0px;top:829.6px;width:244.0px;height:2.0px;background:#221e33;"></div>
<div style="left:2133.0px;top:831.1px;width:1.5px;height:40.7px;background:rgba(50,40,90,0.7);"></div>
<div style="left:2139.0px;top:831.1px;width:1.5px;height:40.7px;background:rgba(50,40,90,0.7);"></div>
<div style="left:2143.0px;top:833.9px;width:14px;height:14px;border:2.2px solid #514b86;border-radius:50%"></div>
<svg style="left:2146.0px;top:837.6px" width="8" height="7"><path d="M0.5 0.5 L7.5 0.5 L4 6.5Z" fill="#514b86"/></svg>
<div class="t" style="left:2165.0px;top:836.1px;font-size:11px;color:#35306a;font-weight:bold;overflow:hidden;width:80px">31 760 - Keyt</div>
<div style="left:2247.0px;top:836.1px;width:75.0px;height:14.0px;background:#1e1a30;"></div>
<div class="t" style="left:2249.0px;top:837.1px;font-size:11px;color:#f0eef6;font-weight:bold;">Leads</div>
<div class="t" style="left:2312.0px;top:837.1px;font-size:9px;color:#f0eef6;font-weight:normal;">▼</div>
<div style="left:2247.0px;top:854.1px;width:75.0px;height:14.0px;background:#2c3a5e;border:1px solid #1c2440"></div>
<div style="left:2322.0px;top:832.1px;width:7.0px;height:38.7px;background:#1c1830;"></div>
<div style="left:2325.0px;top:832.1px;width:1.0px;height:38.7px;background:rgba(90,170,150,0.45);"></div>
<div style="left:2331.0px;top:836.1px;width:41.0px;height:14.0px;background:#b6e86c;"></div>
<div class="t" style="left:2322.0px;top:837.1px;width:40px;text-align:right;font-size:11px;color:#1c2a10;font-weight:bold">31</div>
<div style="left:2331.0px;top:854.1px;width:41.0px;height:13.0px;background:linear-gradient(90deg,#5e5c14 0%,#8a7420 45%,#b08a30 100%);"></div>
<div class="t" style="left:2322.0px;top:855.1px;width:40px;text-align:right;font-size:10px;color:#ffe9b0;font-weight:bold">-3.2</div>
<div style="left:2128.0px;top:872.8px;width:114.0px;height:38.7px;background:#b1aad7;"></div>
<div style="left:2242.0px;top:872.8px;width:130.0px;height:38.7px;background:#29243b;"></div>
<div style="left:2128.0px;top:870.3px;width:244.0px;height:2.0px;background:#221e33;"></div>
<div style="left:2133.0px;top:871.8px;width:1.5px;height:40.7px;background:rgba(50,40,90,0.7);"></div>
<div style="left:2139.0px;top:871.8px;width:1.5px;height:40.7px;background:rgba(50,40,90,0.7);"></div>
<div style="left:2143.0px;top:874.6px;width:14px;height:14px;border:2.2px solid #514b86;border-radius:50%"></div>
<svg style="left:2146.0px;top:878.3px" width="8" height="7"><path d="M0.5 0.5 L7.5 0.5 L4 6.5Z" fill="#514b86"/></svg>
<div class="t" style="left:2165.0px;top:876.8px;font-size:11px;color:#35306a;font-weight:bold;overflow:hidden;width:80px">32 760 - Keyt</div>
<div style="left:2247.0px;top:876.8px;width:75.0px;height:14.0px;background:#1e1a30;"></div>
<div class="t" style="left:2249.0px;top:877.8px;font-size:11px;color:#f0eef6;font-weight:bold;">Leads</div>
<div class="t" style="left:2312.0px;top:877.8px;font-size:9px;color:#f0eef6;font-weight:normal;">▼</div>
<div style="left:2247.0px;top:894.8px;width:75.0px;height:14.0px;background:#37314c;"></div>
<div style="left:2247.0px;top:896.8px;width:75.0px;height:1.0px;background:#29233c;"></div>
<div style="left:2247.0px;top:900.8px;width:75.0px;height:1.0px;background:#29233c;"></div>
<div style="left:2247.0px;top:904.8px;width:75.0px;height:1.0px;background:#29233c;"></div>
<div style="left:2322.0px;top:872.8px;width:7.0px;height:38.7px;background:#1c1830;"></div>
<div style="left:2325.0px;top:872.8px;width:1.0px;height:38.7px;background:rgba(90,170,150,0.45);"></div>
<div style="left:2331.0px;top:876.8px;width:41.0px;height:14.0px;background:#b6e86c;"></div>
<div class="t" style="left:2322.0px;top:877.8px;width:40px;text-align:right;font-size:11px;color:#1c2a10;font-weight:bold">32</div>
<div style="left:2331.0px;top:894.8px;width:41.0px;height:13.0px;background:linear-gradient(90deg,#5e5c14 0%,#8a7420 45%,#b08a30 100%);"></div>
<div class="t" style="left:2322.0px;top:895.8px;width:40px;text-align:right;font-size:10px;color:#ffe9b0;font-weight:bold">-1.5</div>
<div style="left:2128.0px;top:913.5px;width:114.0px;height:38.7px;background:#b1aad7;"></div>
<div style="left:2242.0px;top:913.5px;width:130.0px;height:38.7px;background:#29243b;"></div>
<div style="left:2128.0px;top:911.0px;width:244.0px;height:2.0px;background:#221e33;"></div>
<div style="left:2133.0px;top:912.5px;width:1.5px;height:40.7px;background:rgba(50,40,90,0.7);"></div>
<div style="left:2137.0px;top:915.3px;width:14px;height:14px;border:2.2px solid #514b86;border-radius:50%"></div>
<svg style="left:2140.0px;top:919.0px" width="8" height="7"><path d="M0.5 0.5 L7.5 0.5 L4 6.5Z" fill="#514b86"/></svg>
<div class="t" style="left:2157.0px;top:917.5px;font-size:11px;color:#35306a;font-weight:bold;overflow:hidden;width:80px">33 Group</div>
<div style="left:2247.0px;top:917.5px;width:75.0px;height:14.0px;background:#1e1a30;"></div>
<div class="t" style="left:2249.0px;top:918.5px;font-size:11px;color:#f0eef6;font-weight:bold;">SYNTHS</div>
<div class="t" style="left:2312.0px;top:918.5px;font-size:9px;color:#f0eef6;font-weight:normal;">▼</div>
<div style="left:2247.0px;top:935.5px;width:75.0px;height:14.0px;background:#37314c;"></div>
<div style="left:2247.0px;top:937.5px;width:75.0px;height:1.0px;background:#29233c;"></div>
<div style="left:2247.0px;top:941.5px;width:75.0px;height:1.0px;background:#29233c;"></div>
<div style="left:2247.0px;top:945.5px;width:75.0px;height:1.0px;background:#29233c;"></div>
<div style="left:2322.0px;top:913.5px;width:7.0px;height:38.7px;background:#1c1830;"></div>
<div style="left:2325.0px;top:913.5px;width:1.0px;height:38.7px;background:rgba(90,170,150,0.45);"></div>
<div style="left:2331.0px;top:917.5px;width:41.0px;height:14.0px;background:#b6e86c;"></div>
<div class="t" style="left:2322.0px;top:918.5px;width:40px;text-align:right;font-size:11px;color:#1c2a10;font-weight:bold">33</div>
<div style="left:2331.0px;top:935.5px;width:41.0px;height:13.0px;background:linear-gradient(90deg,#5e5c14 0%,#8a7420 45%,#b08a30 100%);"></div>
<div class="t" style="left:2322.0px;top:936.5px;width:40px;text-align:right;font-size:10px;color:#ffe9b0;font-weight:bold">0</div>
<div style="left:2128.0px;top:954.2px;width:114.0px;height:38.7px;background:#b1aad7;"></div>
<div style="left:2242.0px;top:954.2px;width:130.0px;height:38.7px;background:#29243b;"></div>
<div style="left:2128.0px;top:951.7px;width:244.0px;height:2.0px;background:#221e33;"></div>
<div style="left:2133.0px;top:953.2px;width:1.5px;height:40.7px;background:rgba(50,40,90,0.7);"></div>
<div style="left:2139.0px;top:953.2px;width:1.5px;height:40.7px;background:rgba(50,40,90,0.7);"></div>
<div style="left:2143.0px;top:956.0px;width:14px;height:14px;border:2.2px solid #514b86;border-radius:50%"></div>
<svg style="left:2146.0px;top:959.7px" width="8" height="7"><path d="M0.5 0.5 L7.5 0.5 L4 6.5Z" fill="#514b86"/></svg>
<div class="t" style="left:2165.0px;top:958.2px;font-size:11px;color:#35306a;font-weight:bold;overflow:hidden;width:80px">34 DS_SCO_s</div>
<div style="left:2247.0px;top:958.2px;width:75.0px;height:14.0px;background:#1e1a30;"></div>
<div class="t" style="left:2249.0px;top:959.2px;font-size:11px;color:#f0eef6;font-weight:bold;">33-Group</div>
<div class="t" style="left:2312.0px;top:959.2px;font-size:9px;color:#f0eef6;font-weight:normal;">▼</div>
<div style="left:2247.0px;top:976.2px;width:75.0px;height:14.0px;background:#2c3a5e;border:1px solid #1c2440"></div>
<div style="left:2322.0px;top:954.2px;width:7.0px;height:38.7px;background:#1c1830;"></div>
<div style="left:2325.0px;top:954.2px;width:1.0px;height:38.7px;background:rgba(90,170,150,0.45);"></div>
<div style="left:2331.0px;top:958.2px;width:41.0px;height:14.0px;background:#b6e86c;"></div>
<div class="t" style="left:2322.0px;top:959.2px;width:40px;text-align:right;font-size:11px;color:#1c2a10;font-weight:bold">34</div>
<div style="left:2331.0px;top:976.2px;width:41.0px;height:13.0px;background:linear-gradient(90deg,#5e5c14 0%,#8a7420 45%,#b08a30 100%);"></div>
<div class="t" style="left:2322.0px;top:977.2px;width:40px;text-align:right;font-size:10px;color:#ffe9b0;font-weight:bold">-9.4</div>
<div style="left:2128.0px;top:994.9px;width:114.0px;height:19.1px;background:#b1aad7;"></div>
<div style="left:2242.0px;top:994.9px;width:130.0px;height:19.1px;background:#29243b;"></div>
<div style="left:2128.0px;top:992.4px;width:244.0px;height:2.0px;background:#221e33;"></div>
<div style="left:2133.0px;top:993.9px;width:1.5px;height:21.1px;background:rgba(50,40,90,0.7);"></div>
<div style="left:2139.0px;top:993.9px;width:1.5px;height:21.1px;background:rgba(50,40,90,0.7);"></div>
<div style="left:2143.0px;top:996.7px;width:14px;height:14px;border:2.2px solid #514b86;border-radius:50%"></div>
<svg style="left:2146.0px;top:1000.4px" width="8" height="7"><path d="M0.5 0.5 L7.5 0.5 L4 6.5Z" fill="#514b86"/></svg>
<div class="t" style="left:2165.0px;top:998.9px;font-size:11px;color:#35306a;font-weight:bold;overflow:hidden;width:80px">35 DS_SCB_s</div>
<div style="left:2247.0px;top:998.9px;width:75.0px;height:14.0px;background:#1e1a30;"></div>
<div class="t" style="left:2249.0px;top:999.9px;font-size:11px;color:#f0eef6;font-weight:bold;">33-Group</div>
<div class="t" style="left:2312.0px;top:999.9px;font-size:9px;color:#f0eef6;font-weight:normal;">▼</div>
<div style="left:2322.0px;top:994.9px;width:7.0px;height:19.1px;background:#1c1830;"></div>
<div style="left:2325.0px;top:994.9px;width:1.0px;height:19.1px;background:rgba(90,170,150,0.45);"></div>
<div style="left:2331.0px;top:998.9px;width:41.0px;height:14.0px;background:#b6e86c;"></div>
<div class="t" style="left:2322.0px;top:999.9px;width:40px;text-align:right;font-size:11px;color:#1c2a10;font-weight:bold">35</div>
<div style="left:2128.0px;top:1016.0px;width:114.0px;height:38.0px;background:#ffffff;"></div>
<div style="left:2242.0px;top:1016.0px;width:130.0px;height:38.0px;background:#29243b;"></div>
<div style="left:2128.0px;top:1013.5px;width:244.0px;height:2.0px;background:#221e33;"></div>
<div style="left:2133.0px;top:1017.8px;width:14px;height:14px;border:2.2px solid #514b86;border-radius:50%"></div>
<svg style="left:2136.0px;top:1021.5px" width="8" height="7"><path d="M0.5 0.5 L7.5 0.5 L4 6.5Z" fill="#514b86"/></svg>
<div class="t" style="left:2153.0px;top:1020.0px;font-size:11px;color:#6a6580;font-weight:bold;overflow:hidden;width:80px">A SC</div>
<div style="left:2247.0px;top:1020.0px;width:75.0px;height:14.0px;background:#1e1a30;"></div>
<div class="t" style="left:2249.0px;top:1021.0px;font-size:11px;color:#f0eef6;font-weight:bold;">Main</div>
<div class="t" style="left:2312.0px;top:1021.0px;font-size:9px;color:#f0eef6;font-weight:normal;">▼</div>
<div style="left:2247.0px;top:1038.0px;width:75.0px;height:14.0px;background:#37314c;"></div>
<div style="left:2247.0px;top:1040.0px;width:75.0px;height:1.0px;background:#29233c;"></div>
<div style="left:2247.0px;top:1044.0px;width:75.0px;height:1.0px;background:#29233c;"></div>
<div style="left:2247.0px;top:1048.0px;width:75.0px;height:1.0px;background:#29233c;"></div>
<div style="left:2322.0px;top:1016.0px;width:7.0px;height:38.0px;background:#1c1830;"></div>
<div style="left:2325.0px;top:1016.0px;width:1.0px;height:38.0px;background:rgba(90,170,150,0.45);"></div>
<div style="left:2331.0px;top:1020.0px;width:41.0px;height:14.0px;background:#b6e86c;"></div>
<div class="t" style="left:2322.0px;top:1021.0px;width:40px;text-align:right;font-size:11px;color:#1c2a10;font-weight:bold">A</div>
<div style="left:2331.0px;top:1038.0px;width:41.0px;height:13.0px;background:linear-gradient(90deg,#5e5c14 0%,#8a7420 45%,#b08a30 100%);"></div>
<div class="t" style="left:2322.0px;top:1039.0px;width:40px;text-align:right;font-size:10px;color:#ffe9b0;font-weight:bold">0</div>
<div style="left:2128.0px;top:1056.0px;width:114.0px;height:39.0px;background:#2d4a2e;"></div>
<div style="left:2242.0px;top:1056.0px;width:130.0px;height:39.0px;background:#29243b;"></div>
<div style="left:2128.0px;top:1053.5px;width:244.0px;height:2.0px;background:#221e33;"></div>
<div style="left:2133.0px;top:1057.8px;width:14px;height:14px;border:2.2px solid #b8d0b8;border-radius:50%"></div>
<svg style="left:2136.0px;top:1061.5px" width="8" height="7"><path d="M0.5 0.5 L7.5 0.5 L4 6.5Z" fill="#b8d0b8"/></svg>
<div class="t" style="left:2153.0px;top:1060.0px;font-size:11px;color:#dfe8dc;font-weight:bold;overflow:hidden;width:80px">Main</div>
<div style="left:2247.0px;top:1060.0px;width:75.0px;height:14.0px;background:#1e1a30;"></div>
<div class="t" style="left:2249.0px;top:1061.0px;font-size:11px;color:#f0eef6;font-weight:bold;">1/2</div>
<div class="t" style="left:2312.0px;top:1061.0px;font-size:9px;color:#f0eef6;font-weight:normal;">▼</div>
<div style="left:2247.0px;top:1079.0px;width:75.0px;height:14.0px;background:#1e1a30;"></div>
<div class="t" style="left:2258.0px;top:1080.0px;font-size:11px;color:#f0eef6;font-weight:bold;">1/2</div>
<div class="t" style="left:2312.0px;top:1080.0px;font-size:9px;color:#f0eef6;font-weight:normal;">▼</div>
<div style="left:2322.0px;top:1056.0px;width:7.0px;height:39.0px;background:#1c1830;"></div>
<div style="left:2325.0px;top:1056.0px;width:1.0px;height:39.0px;background:rgba(90,170,150,0.45);"></div>
<div style="left:2331.0px;top:1060.0px;width:41.0px;height:14.0px;background:linear-gradient(90deg,#5e5c14 0%,#8a7420 45%,#b08a30 100%);"></div>
<div class="t" style="left:2322.0px;top:1061.0px;width:40px;text-align:right;font-size:10px;color:#ffe9b0;font-weight:bold">0</div>
<div style="left:2331.0px;top:248.0px;width:33.0px;height:13.0px;background:linear-gradient(90deg,#5e5c14 0%,#8a7420 45%,#b08a30 100%);"></div>
<div class="t" style="left:2316.0px;top:249.0px;width:40px;text-align:right;font-size:10px;color:#ffe9b0;font-weight:bold">0</div>
<div style="left:0.0px;top:1122.0px;width:2372.0px;height:2.0px;background:#cad0e6;"></div>
<div style="left:0.0px;top:1124.0px;width:2372.0px;height:2372.0px;background:#2a2538;"></div>
<div style="left:0.0px;top:1130.0px;width:173.0px;height:198.0px;background:#2c3a5e;"></div>
<div style="left:0.0px;top:1133.0px;width:170.0px;height:17.0px;background:#3a4c74;"></div>
<div class="t" style="left:-4.0px;top:1156.0px;font-size:11px;color:#e6e4f0;font-weight:normal;white-space:nowrap">播放的 clip。点按拖动选择时间区</div>
<div class="t" style="left:-4.0px;top:1172.6px;font-size:11px;color:#e6e4f0;font-weight:normal;white-space:nowrap">[编辑] 菜单中的选项来编辑。</div>
<div class="t" style="left:-4.0px;top:1205.8px;font-size:11px;color:#e6e4f0;font-weight:normal;white-space:nowrap">[向键] 切换上下 Take 轨的内容</div>
<div class="t" style="left:-4.0px;top:1222.4px;font-size:11px;color:#e6e4f0;font-weight:normal;white-space:nowrap">[拖动] 调整显示区域</div>
<div class="t" style="left:-4.0px;top:1239.0px;font-size:11px;color:#e6e4f0;font-weight:normal;white-space:nowrap">[缩] 横向缩放</div>
<div class="t" style="left:-4.0px;top:1255.6px;font-size:11px;color:#e6e4f0;font-weight:normal;white-space:nowrap">[] 调整轨道高度</div>
<div class="t" style="left:-4.0px;top:1272.2px;font-size:11px;color:#e6e4f0;font-weight:normal;white-space:nowrap">并编辑淡入淡出</div>
<div style="left:183.0px;top:1130.0px;width:300.0px;height:198.0px;background:#2c3a5e;"></div>
<div style="left:183.0px;top:1130.0px;width:300.0px;height:21.0px;background:#3d7775;"></div>
<svg style="left:187px;top:1132px" width="16" height="16"><circle cx="8" cy="8" r="7.2" fill="#b4ec6a" stroke="#3a5a28" stroke-width="0.8"/><circle cx="8" cy="8" r="4" fill="none" stroke="#8ac050" stroke-width="1.2"/></svg>
<div class="t" style="left:207.0px;top:1134.0px;font-size:11px;color:#1c2a34;font-weight:bold;">Sub Processor</div>
<svg style="left:446px;top:1132px" width="16" height="16"><circle cx="8" cy="8" r="7.5" fill="#1b1830"/><path d="M4.5 9.5 A3.8 3.8 0 0 1 10 4.6 M11.5 6.5 A3.8 3.8 0 0 1 6 11.4" stroke="#e8e8f0" stroke-width="1.6" fill="none"/><path d="M9 3 L11.5 5 L9 6.5Z M7 9.5 L4.5 11 L7 13Z" fill="#e8e8f0"/></svg>
<svg style="left:465px;top:1132px" width="16" height="16"><rect x="0.5" y="0.5" width="15" height="15" rx="4" fill="#1b1830"/><path d="M4 4 h6 l2 2 v6 h-8z" fill="#f0f0f8"/><rect x="6" y="4" width="3" height="3" fill="#1b1830"/></svg>
<div style="left:183.0px;top:1151.0px;width:22.0px;height:177.0px;background:#2f3f62;"></div>
<svg style="left:186px;top:1154px" width="14" height="14"><circle cx="7" cy="7" r="6" fill="#2f3f62" stroke="#c8c8d4" stroke-width="1.8"/><path d="M4 7 h6 M4 5 h6 M4 9 h6" stroke="#c8c8d4" stroke-width="1.1"/></svg>
<svg style="left:186px;top:1172px" width="14" height="14"><circle cx="7" cy="7" r="6" fill="#2f3f62" stroke="#c8c8d4" stroke-width="1.8"/><path d="M4 7 h6 M4 5 h6 M4 9 h6" stroke="#c8c8d4" stroke-width="1.1"/></svg>
<svg style="left:186px;top:1190px" width="14" height="14"><circle cx="7" cy="7" r="6" fill="#b4ec6a" stroke="#b4ec6a" stroke-width="1.8"/><path d="M4 7 h6 M4 5 h6 M4 9 h6" stroke="#2a3a1a" stroke-width="1.1"/></svg>
<svg style="left:186px;top:1208px" width="14" height="14"><circle cx="7" cy="7" r="6" fill="#b4ec6a" stroke="#b4ec6a" stroke-width="1.8"/><path d="M4 7 h6 M4 5 h6 M4 9 h6" stroke="#2a3a1a" stroke-width="1.1"/></svg>
<div style="left:208.0px;top:1160.0px;width:22.0px;height:14.0px;background:#1b1830;"></div>
<div class="t" style="left:212.0px;top:1162.0px;font-size:10px;color:#e6e2ee;font-weight:bold;">⇢</div>
<div style="left:396.0px;top:1160.0px;width:33.0px;height:15.0px;background:#1b1830;"></div>
<div class="t" style="left:398.0px;top:1163.0px;font-size:11px;color:#e6e2ee;font-weight:bold;">Chain</div>
<div style="left:433.0px;top:1161.0px;width:32.0px;height:13.0px;background:#c8b030;"></div>
<div style="left:436.0px;top:1163.0px;width:2.0px;height:9.0px;background:#f0e070;"></div>
<div style="left:441.0px;top:1164.0px;width:8.0px;height:2.0px;background:#806818;"></div>
<div style="left:441.0px;top:1169.0px;width:8.0px;height:2.0px;background:#806818;"></div>
<div style="left:452.0px;top:1164.0px;width:10.0px;height:2.0px;background:#806818;"></div>
<div style="left:452.0px;top:1169.0px;width:10.0px;height:2.0px;background:#806818;"></div>
<div style="left:207.0px;top:1184.0px;width:258.0px;height:16.0px;background:#2a6a72;"></div>
<div style="left:207.0px;top:1184.0px;width:98.0px;height:16.0px;background:#4a7e94;"></div>
<div class="t" style="left:221.0px;top:1188.0px;font-size:11px;color:#eaf2f8;font-weight:bold;">EQ Eight | O...</div>
<div style="left:312.0px;top:1186.0px;width:40.0px;height:13.0px;background:#4a3a20;"></div>
<div class="t" style="left:316.0px;top:1189.0px;font-size:10px;color:#ffb070;font-weight:bold;">0.0 dB</div>
<div style="left:359.0px;top:1186.0px;width:42.0px;height:13.0px;background:#1e2a38;"></div>
<div class="t" style="left:376.0px;top:1189.0px;font-size:10px;color:#e8e8f0;font-weight:bold;">C</div>
<div style="left:405.0px;top:1186.0px;width:18.0px;height:13.0px;background:#b4ec6a;"></div>
<div style="left:428.0px;top:1186.0px;width:18.0px;height:13.0px;background:#1e2a38;"></div>
<div class="t" style="left:432.0px;top:1189.0px;font-size:10px;color:#e6e2ee;font-weight:bold;">S</div>
<div style="left:449.0px;top:1186.0px;width:16.0px;height:13.0px;background:#1e2a38;border-radius:50%"></div>
<div class="t" style="left:285.0px;top:1262.0px;font-size:12px;color:#e8e6f0;font-weight:normal;">在这里加载音频效果器</div>
<div style="left:486.0px;top:1130.0px;width:531.0px;height:198.0px;background:#2c3a5e;"></div>
<div style="left:486.0px;top:1130.0px;width:531.0px;height:21.0px;background:#3d7775;"></div>
<svg style="left:490px;top:1132px" width="16" height="16"><circle cx="8" cy="8" r="7.2" fill="#b4ec6a" stroke="#3a5a28" stroke-width="0.8"/><circle cx="8" cy="8" r="4" fill="none" stroke="#8ac050" stroke-width="1.2"/></svg>
<svg style="left:507px;top:1132px" width="16" height="16"><circle cx="8" cy="8" r="7.5" fill="#1b1830"/><path d="M5.5 4 L12 8 L5.5 12Z" fill="#f0f0f8"/></svg>
<div class="t" style="left:527.0px;top:1134.0px;font-size:11px;color:#1c2a34;font-weight:bold;">EQ Eight</div>
<svg style="left:980px;top:1132px" width="16" height="16"><circle cx="8" cy="8" r="7.5" fill="#1b1830"/><path d="M4.5 9.5 A3.8 3.8 0 0 1 10 4.6 M11.5 6.5 A3.8 3.8 0 0 1 6 11.4" stroke="#e8e8f0" stroke-width="1.6" fill="none"/><path d="M9 3 L11.5 5 L9 6.5Z M7 9.5 L4.5 11 L7 13Z" fill="#e8e8f0"/></svg>
<svg style="left:998px;top:1132px" width="16" height="16"><rect x="0.5" y="0.5" width="15" height="15" rx="4" fill="#1b1830"/><path d="M4 4 h6 l2 2 v6 h-8z" fill="#f0f0f8"/><rect x="6" y="4" width="3" height="3" fill="#1b1830"/></svg>
<div style="left:490.0px;top:1151.0px;width:54.0px;height:177.0px;background:#2f3f66;"></div>
<div class="t" style="left:503.0px;top:1154.0px;font-size:10px;color:#e6e2ee;font-weight:bold;">Freq</div>
<svg style="left:0;top:0;overflow:visible" width="1" height="1"><path d="M508.22 1184.78 A11 11 0 1 1 523.78 1184.78" stroke="#2a2648" stroke-width="3.5" fill="none"/><path d="M508.22 1184.78 A11 11 0 0 1 508.09 1169.36" stroke="#d8d070" stroke-width="3.5" fill="none"/><path d="M516.00 1177.00 L508.09 1169.36" stroke="#1c1830" stroke-width="2" fill="none"/></svg>
<div class="t" style="left:498.0px;top:1193.0px;font-size:10px;color:#e6e2ee;font-weight:bold;">130 Hz</div>
<div class="t" style="left:503.0px;top:1214.0px;font-size:10px;color:#e6e2ee;font-weight:bold;">Gain</div>
<div class="t" style="left:494.0px;top:1261.0px;font-size:10px;color:#e6e2ee;font-weight:bold;">0.00 dB</div>
<div class="t" style="left:511.0px;top:1283.0px;font-size:10px;color:#e6e2ee;font-weight:bold;">Q</div>
<svg style="left:0;top:0;overflow:visible" width="1" height="1"><path d="M508.22 1313.78 A11 11 0 1 1 523.78 1313.78" stroke="#2a2648" stroke-width="3.5" fill="none"/><path d="M508.22 1313.78 A11 11 0 0 1 508.93 1297.57" stroke="#d8d070" stroke-width="3.5" fill="none"/><path d="M516.00 1306.00 L508.93 1297.57" stroke="#1c1830" stroke-width="2" fill="none"/></svg>
<div class="t" style="left:503.0px;top:1322.0px;font-size:10px;color:#e6e2ee;font-weight:bold;">0.71</div>
<div style="left:544.0px;top:1151.0px;width:411.0px;height:146.0px;background:#17132a;"></div>
<div style="left:574.0px;top:1163.0px;width:381.0px;height:1.0px;background:#2a2542;"></div>
<div style="left:574.0px;top:1193.0px;width:381.0px;height:1.0px;background:#2a2542;"></div>
<div style="left:574.0px;top:1223.0px;width:381.0px;height:1.0px;background:#2a2542;"></div>
<div style="left:574.0px;top:1252.0px;width:381.0px;height:1.0px;background:#2a2542;"></div>
<div style="left:574.0px;top:1282.0px;width:381.0px;height:1.0px;background:#2a2542;"></div>
<div style="left:600.0px;top:1151.0px;width:1.0px;height:146.0px;background:#262140;"></div>
<div style="left:622.0px;top:1151.0px;width:1.0px;height:146.0px;background:#262140;"></div>
<div style="left:640.0px;top:1151.0px;width:1.0px;height:146.0px;background:#262140;"></div>
<div style="left:655.0px;top:1151.0px;width:1.0px;height:146.0px;background:#262140;"></div>
<div style="left:667.0px;top:1151.0px;width:1.0px;height:146.0px;background:#262140;"></div>
<div style="left:690.0px;top:1151.0px;width:1.0px;height:146.0px;background:#262140;"></div>
<div style="left:723.0px;top:1151.0px;width:1.0px;height:146.0px;background:#262140;"></div>
<div style="left:745.0px;top:1151.0px;width:1.0px;height:146.0px;background:#262140;"></div>
<div style="left:762.0px;top:1151.0px;width:1.0px;height:146.0px;background:#262140;"></div>
<div style="left:775.0px;top:1151.0px;width:1.0px;height:146.0px;background:#262140;"></div>
<div style="left:787.0px;top:1151.0px;width:1.0px;height:146.0px;background:#262140;"></div>
<div style="left:812.0px;top:1151.0px;width:1.0px;height:146.0px;background:#262140;"></div>
<div style="left:845.0px;top:1151.0px;width:1.0px;height:146.0px;background:#262140;"></div>
<div style="left:868.0px;top:1151.0px;width:1.0px;height:146.0px;background:#262140;"></div>
<div style="left:884.0px;top:1151.0px;width:1.0px;height:146.0px;background:#262140;"></div>
<div style="left:897.0px;top:1151.0px;width:1.0px;height:146.0px;background:#262140;"></div>
<div style="left:910.0px;top:1151.0px;width:1.0px;height:146.0px;background:#262140;"></div>
<div style="left:935.0px;top:1151.0px;width:1.0px;height:146.0px;background:#262140;"></div>
<div class="t" style="left:550.0px;top:1159.0px;font-size:10px;color:#e0e0ea;font-weight:normal;">12</div>
<div class="t" style="left:550.0px;top:1189.0px;font-size:10px;color:#e0e0ea;font-weight:normal;">6</div>
<div class="t" style="left:550.0px;top:1219.0px;font-size:10px;color:#e0e0ea;font-weight:normal;">-6</div>
<div class="t" style="left:550.0px;top:1249.0px;font-size:10px;color:#e0e0ea;font-weight:normal;">-6</div>
<div class="t" style="left:550.0px;top:1279.0px;font-size:10px;color:#e0e0ea;font-weight:normal;">-12</div>
<div style="left:544.0px;top:1222.0px;width:411.0px;height:2.0px;background:#d8d6e8;"></div>
<svg style="position:absolute;left:544px;top:1151px" width="411" height="146"><path d="M90 146 Q120 100 138 88 Q160 72 200 72 L411 72" stroke="#d8d470" stroke-width="2" fill="none"/><circle cx="138" cy="88" r="6" fill="#b4ec6a" stroke="#e8f0a0"/></svg>
<div class="t" style="left:657.0px;top:1286.0px;font-size:10px;color:#e0e0ea;font-weight:normal;">100</div>
<div class="t" style="left:782.0px;top:1286.0px;font-size:10px;color:#e0e0ea;font-weight:normal;">1k</div>
<div class="t" style="left:903.0px;top:1286.0px;font-size:10px;color:#e0e0ea;font-weight:normal;">10k</div>
<div style="left:544.0px;top:1297.0px;width:411.0px;height:31.0px;background:#2f3f66;"></div>
<div style="left:544.0px;top:1297.0px;width:411.0px;height:22.0px;background:#2f3f66;"></div>
<div style="left:548.0px;top:1301.0px;width:43.0px;height:15.0px;background:#223444;"></div>
<svg style="left:551.0px;top:1301px" width="20" height="16"><path d="M2 12 Q3 4 8 4 L18 4" stroke="#d8e0ec" stroke-width="1.6" fill="none"/></svg>
<svg style="left:579.0px;top:1305px" width="8" height="7"><path d="M0.5 0.5 L7.5 0.5 L4 6.5Z" fill="#e8eef6"/></svg>
<div style="left:562.0px;top:1320.0px;width:10.0px;height:10.0px;background:#b4ec6a;"></div>
<div class="t" style="left:576.0px;top:1320.0px;font-size:10px;color:#e6e2ee;font-weight:bold;">1</div>
<div style="left:599.5px;top:1301.0px;width:43.0px;height:15.0px;background:#223444;"></div>
<svg style="left:602.5px;top:1301px" width="20" height="16"><path d="M2 4 L5 4 Q9 4 9 8 Q9 12 5 12 L2 12 M9 8 L18 8" stroke="#d8e0ec" stroke-width="1.6" fill="none"/></svg>
<svg style="left:630.5px;top:1305px" width="8" height="7"><path d="M0.5 0.5 L7.5 0.5 L4 6.5Z" fill="#e8eef6"/></svg>
<div style="left:613.5px;top:1320.0px;width:10.0px;height:10.0px;background:#1e1a30;"></div>
<div class="t" style="left:627.5px;top:1320.0px;font-size:10px;color:#e6e2ee;font-weight:bold;">2</div>
<div style="left:651.0px;top:1301.0px;width:43.0px;height:15.0px;background:#223444;"></div>
<svg style="left:654.0px;top:1301px" width="20" height="16"><path d="M2 8 Q10 1 18 8 Q10 15 2 8" stroke="#d8e0ec" stroke-width="1.6" fill="none"/></svg>
<svg style="left:682.0px;top:1305px" width="8" height="7"><path d="M0.5 0.5 L7.5 0.5 L4 6.5Z" fill="#e8eef6"/></svg>
<div style="left:665.0px;top:1320.0px;width:10.0px;height:10.0px;background:#1e1a30;"></div>
<div class="t" style="left:679.0px;top:1320.0px;font-size:10px;color:#e6e2ee;font-weight:bold;">3</div>
<div style="left:702.5px;top:1301.0px;width:43.0px;height:15.0px;background:#223444;"></div>
<svg style="left:705.5px;top:1301px" width="20" height="16"><path d="M2 8 Q10 1 18 8 Q10 15 2 8" stroke="#d8e0ec" stroke-width="1.6" fill="none"/></svg>
<svg style="left:733.5px;top:1305px" width="8" height="7"><path d="M0.5 0.5 L7.5 0.5 L4 6.5Z" fill="#e8eef6"/></svg>
<div style="left:716.5px;top:1320.0px;width:10.0px;height:10.0px;background:#1e1a30;"></div>
<div class="t" style="left:730.5px;top:1320.0px;font-size:10px;color:#e6e2ee;font-weight:bold;">4</div>
<div style="left:754.0px;top:1301.0px;width:43.0px;height:15.0px;background:#223444;"></div>
<svg style="left:757.0px;top:1301px" width="20" height="16"><path d="M2 8 Q10 1 18 8 Q10 15 2 8" stroke="#d8e0ec" stroke-width="1.6" fill="none"/></svg>
<svg style="left:785.0px;top:1305px" width="8" height="7"><path d="M0.5 0.5 L7.5 0.5 L4 6.5Z" fill="#e8eef6"/></svg>
<div style="left:768.0px;top:1320.0px;width:10.0px;height:10.0px;background:#1e1a30;"></div>
<div class="t" style="left:782.0px;top:1320.0px;font-size:10px;color:#e6e2ee;font-weight:bold;">5</div>
<div style="left:805.5px;top:1301.0px;width:43.0px;height:15.0px;background:#223444;"></div>
<svg style="left:808.5px;top:1301px" width="20" height="16"><path d="M2 8 Q10 1 18 8 Q10 15 2 8" stroke="#d8e0ec" stroke-width="1.6" fill="none"/></svg>
<svg style="left:836.5px;top:1305px" width="8" height="7"><path d="M0.5 0.5 L7.5 0.5 L4 6.5Z" fill="#e8eef6"/></svg>
<div style="left:819.5px;top:1320.0px;width:10.0px;height:10.0px;background:#1e1a30;"></div>
<div class="t" style="left:833.5px;top:1320.0px;font-size:10px;color:#e6e2ee;font-weight:bold;">6</div>
<div style="left:857.0px;top:1301.0px;width:43.0px;height:15.0px;background:#223444;"></div>
<svg style="left:860.0px;top:1301px" width="20" height="16"><path d="M2 8 L9 8 Q11 4 18 4 M9 8 Q11 12 18 12" stroke="#d8e0ec" stroke-width="1.6" fill="none"/></svg>
<svg style="left:888.0px;top:1305px" width="8" height="7"><path d="M0.5 0.5 L7.5 0.5 L4 6.5Z" fill="#e8eef6"/></svg>
<div style="left:871.0px;top:1320.0px;width:10.0px;height:10.0px;background:#1e1a30;"></div>
<div class="t" style="left:885.0px;top:1320.0px;font-size:10px;color:#e6e2ee;font-weight:bold;">7</div>
<div style="left:908.5px;top:1301.0px;width:43.0px;height:15.0px;background:#223444;"></div>
<svg style="left:911.5px;top:1301px" width="20" height="16"><path d="M2 4 L12 4 Q16 4 17 12" stroke="#d8e0ec" stroke-width="1.6" fill="none"/></svg>
<svg style="left:939.5px;top:1305px" width="8" height="7"><path d="M0.5 0.5 L7.5 0.5 L4 6.5Z" fill="#e8eef6"/></svg>
<div style="left:922.5px;top:1320.0px;width:10.0px;height:10.0px;background:#1e1a30;"></div>
<div class="t" style="left:936.5px;top:1320.0px;font-size:10px;color:#e6e2ee;font-weight:bold;">8</div>
<div style="left:958.0px;top:1151.0px;width:57.0px;height:177.0px;background:#2f3f66;"></div>
<div style="left:961.0px;top:1156.0px;width:21.0px;height:14.0px;background:#1e1a30;"></div>
<div style="left:987.0px;top:1156.0px;width:24.0px;height:14.0px;background:#b4ec6a;"></div>
<svg style="left:965px;top:1157px" width="14" height="12"><path d="M2.5 9 V6 A4.5 4.5 0 0 1 11.5 6 V9" stroke="#e0e0ea" stroke-width="1.5" fill="none"/><rect x="1.5" y="7" width="2.5" height="4" fill="#e0e0ea"/><rect x="10" y="7" width="2.5" height="4" fill="#e0e0ea"/></svg>
<div style="left:990.0px;top:1163.0px;width:1.6px;height:4.0px;background:#22301a;"></div>
<div style="left:993.0px;top:1159.0px;width:1.6px;height:8.0px;background:#22301a;"></div>
<div style="left:996.0px;top:1161.0px;width:1.6px;height:6.0px;background:#22301a;"></div>
<div style="left:999.0px;top:1157.0px;width:1.6px;height:10.0px;background:#22301a;"></div>
<div style="left:1002.0px;top:1162.0px;width:1.6px;height:5.0px;background:#22301a;"></div>
<div style="left:1005.0px;top:1160.0px;width:1.6px;height:7.0px;background:#22301a;"></div>
<div style="left:989.0px;top:1167.0px;width:19.0px;height:1.0px;background:#22301a;"></div>
<div class="t" style="left:961.0px;top:1175.0px;font-size:10px;color:#e6e2ee;font-weight:bold;">Mode</div>
<div style="left:961.0px;top:1186.0px;width:52.0px;height:14.0px;background:#1e1a30;"></div>
<div class="t" style="left:963.0px;top:1189.0px;font-size:10px;color:#e6e2ee;font-weight:bold;">M/S</div>
<div class="t" style="left:1002.0px;top:1189.0px;font-size:10px;color:#e6e2ee;font-weight:bold;">▾</div>
<div class="t" style="left:961.0px;top:1206.0px;font-size:10px;color:#e6e2ee;font-weight:bold;">Edit</div>
<div style="left:961.0px;top:1217.0px;width:52.0px;height:14.0px;background:#a4b8c8;"></div>
<div class="t" style="left:982.0px;top:1220.0px;font-size:10px;color:#506070;font-weight:bold;">S</div>
<div class="t" style="left:961.0px;top:1238.0px;font-size:10px;color:#e6e2ee;font-weight:bold;">Adapt. Q</div>
<div style="left:961.0px;top:1250.0px;width:52.0px;height:14.0px;background:#b4ec6a;"></div>
<div class="t" style="left:977.0px;top:1253.0px;font-size:10px;color:#22301a;font-weight:bold;">On</div>
<div class="t" style="left:961.0px;top:1269.0px;font-size:10px;color:#e6e2ee;font-weight:bold;">Scale</div>
<div style="left:961.0px;top:1281.0px;width:40.0px;height:13.0px;background:linear-gradient(90deg,#6a6018,#b08a2a);"></div>
<div class="t" style="left:970.0px;top:1284.0px;font-size:10px;color:#ffe9b0;font-weight:bold;">100 %</div>
<div class="t" style="left:961.0px;top:1301.0px;font-size:10px;color:#e6e2ee;font-weight:bold;">Gain</div>
<div style="left:961.0px;top:1314.0px;width:50.0px;height:13.0px;background:linear-gradient(90deg,#6a6018,#9a7a2a 40%,#2f3f66 60%);"></div>
<div class="t" style="left:965.0px;top:1317.0px;font-size:10px;color:#ffe9b0;font-weight:bold;">0.00 dB</div>
<div style="left:1020.0px;top:1130.0px;width:164.0px;height:198.0px;background:#38324c;"></div>
<div style="left:1020.0px;top:1130.0px;width:164.0px;height:21.0px;background:#3d7775;"></div>
<svg style="left:1023px;top:1132px" width="16" height="16"><circle cx="8" cy="8" r="7.2" fill="#b4ec6a" stroke="#3a5a28" stroke-width="0.8"/><circle cx="8" cy="8" r="4" fill="none" stroke="#8ac050" stroke-width="1.2"/></svg>
<svg style="left:1040px;top:1132px" width="16" height="16"><circle cx="8" cy="8" r="7.5" fill="#1b1830"/><path d="M4 5 L12 5 L8 12Z" fill="#e8e8f0"/></svg>
<svg style="left:1057px;top:1132px" width="16" height="16"><circle cx="8" cy="8" r="7.5" fill="#1b1830"/><path d="M4.5 11.5 L9 7" stroke="#e8e8f0" stroke-width="2"/><circle cx="10" cy="6" r="2.3" fill="none" stroke="#e8e8f0" stroke-width="1.5"/></svg>
<div class="t" style="left:1076.0px;top:1134.0px;font-size:11px;color:#1c2a34;font-weight:bold;">Ozone 10 E...</div>
<svg style="left:1148px;top:1132px" width="16" height="16"><circle cx="8" cy="8" r="7.5" fill="#1b1830"/><path d="M4.5 9.5 A3.8 3.8 0 0 1 10 4.6 M11.5 6.5 A3.8 3.8 0 0 1 6 11.4" stroke="#e8e8f0" stroke-width="1.6" fill="none"/><path d="M9 3 L11.5 5 L9 6.5Z M7 9.5 L4.5 11 L7 13Z" fill="#e8e8f0"/></svg>
<svg style="left:1166px;top:1132px" width="16" height="16"><rect x="0.5" y="0.5" width="15" height="15" rx="4" fill="#1b1830"/><path d="M4 4 h6 l2 2 v6 h-8z" fill="#f0f0f8"/><rect x="6" y="4" width="3" height="3" fill="#1b1830"/></svg>
<div style="left:1024.0px;top:1158.0px;width:154.0px;height:155.0px;background:#17132a;"></div>
<div style="left:1025px;top:1297px;width:10px;height:10px;border:2px solid #c8e070;border-radius:50%"></div>
<div style="left:1024.0px;top:1316.0px;width:76.0px;height:13.0px;background:#2a2540;"></div>
<div class="t" style="left:1026.0px;top:1319.0px;font-size:11px;color:#e6e2ee;font-weight:bold;">none</div>
<div class="t" style="left:1088.0px;top:1319.0px;font-size:10px;color:#e6e2ee;font-weight:bold;">▾</div>
<div style="left:1103.0px;top:1316.0px;width:75.0px;height:13.0px;background:#2a2540;"></div>
<div class="t" style="left:1105.0px;top:1319.0px;font-size:11px;color:#e6e2ee;font-weight:bold;">none</div>
<div class="t" style="left:1166.0px;top:1319.0px;font-size:10px;color:#e6e2ee;font-weight:bold;">▾</div>
<div style="left:1187.0px;top:1130.0px;width:663.0px;height:198.0px;background:#2c3a5e;"></div>
<div style="left:1187.0px;top:1130.0px;width:663.0px;height:21.0px;background:#3d7775;"></div>
<svg style="left:1190px;top:1132px" width="16" height="16"><circle cx="8" cy="8" r="7.2" fill="#b4ec6a" stroke="#3a5a28" stroke-width="0.8"/><circle cx="8" cy="8" r="4" fill="none" stroke="#8ac050" stroke-width="1.2"/></svg>
<svg style="left:1207px;top:1132px" width="16" height="16"><circle cx="8" cy="8" r="7.5" fill="#1b1830"/><path d="M4 5 L12 5 L8 12Z" fill="#e8e8f0"/></svg>
<div class="t" style="left:1226.0px;top:1134.0px;font-size:11px;color:#1c2a34;font-weight:bold;">Multiband Dynamics</div>
<svg style="left:1795px;top:1132px" width="16" height="16"><circle cx="8" cy="8" r="7.5" fill="#1b1830"/><path d="M4.5 9.5 A3.8 3.8 0 0 1 10 4.6 M11.5 6.5 A3.8 3.8 0 0 1 6 11.4" stroke="#e8e8f0" stroke-width="1.6" fill="none"/><path d="M9 3 L11.5 5 L9 6.5Z M7 9.5 L4.5 11 L7 13Z" fill="#e8e8f0"/></svg>
<svg style="left:1813px;top:1132px" width="16" height="16"><rect x="0.5" y="0.5" width="15" height="15" rx="4" fill="#1b1830"/><path d="M4 4 h6 l2 2 v6 h-8z" fill="#f0f0f8"/><rect x="6" y="4" width="3" height="3" fill="#1b1830"/></svg>
<div class="t" style="left:1200.0px;top:1155.0px;font-size:11px;color:#e6e2ee;font-weight:bold;">Split Freq</div>
<div class="t" style="left:1278.0px;top:1155.0px;font-size:11px;color:#e6e2ee;font-weight:bold;">Input</div>
<div style="left:1194.0px;top:1176.0px;width:52.0px;height:13.0px;background:#b4ec6a;"></div>
<div class="t" style="left:1207.0px;top:1179.0px;font-size:10px;color:#22301a;font-weight:bold;">High</div>
<div style="left:1249.0px;top:1176.0px;width:16.0px;height:13.0px;background:#b4ec6a;"></div>
<div style="left:1194.0px;top:1192.0px;width:52.0px;height:13.0px;background:linear-gradient(90deg,#6a6018,#b08a2a);"></div>
<div class="t" style="left:1196.0px;top:1195.0px;font-size:10px;color:#ffe9b0;font-weight:bold;">15.0 kHz</div>
<div style="left:1249.0px;top:1192.0px;width:16.0px;height:13.0px;background:#1e1a30;"></div>
<div class="t" style="left:1253.0px;top:1195.0px;font-size:10px;color:#e6e2ee;font-weight:bold;">S</div>
<div class="t" style="left:1208.0px;top:1234.0px;font-size:11px;color:#e6e2ee;font-weight:bold;">Mid</div>
<div style="left:1249.0px;top:1225.0px;width:16.0px;height:13.0px;background:#b4ec6a;"></div>
<div style="left:1249.0px;top:1241.0px;width:16.0px;height:13.0px;background:#1e1a30;"></div>
<div class="t" style="left:1253.0px;top:1244.0px;font-size:10px;color:#e6e2ee;font-weight:bold;">S</div>
<div style="left:1194.0px;top:1273.0px;width:52.0px;height:13.0px;background:#b4ec6a;"></div>
<div class="t" style="left:1209.0px;top:1276.0px;font-size:10px;color:#22301a;font-weight:bold;">Low</div>
<div style="left:1249.0px;top:1273.0px;width:16.0px;height:13.0px;background:#b4ec6a;"></div>
<div style="left:1194.0px;top:1289.0px;width:52.0px;height:13.0px;background:linear-gradient(90deg,#6a6018,#b08a2a);"></div>
<div class="t" style="left:1198.0px;top:1292.0px;font-size:10px;color:#ffe9b0;font-weight:bold;">90.0 Hz</div>
<div style="left:1249.0px;top:1289.0px;width:16.0px;height:13.0px;background:#1e1a30;"></div>
<div class="t" style="left:1253.0px;top:1292.0px;font-size:10px;color:#e6e2ee;font-weight:bold;">S</div>
<div style="left:1194.0px;top:1314.0px;width:72.0px;height:14.0px;background:#1e1a30;"></div>
<div class="t" style="left:1203.0px;top:1317.0px;font-size:11px;color:#e6e2ee;font-weight:bold;">Soft Knee</div>
<div style="left:1274.0px;top:1314.0px;width:40.0px;height:14.0px;background:linear-gradient(90deg,#a08a20,#d0b040);"></div>
<div class="t" style="left:1280.0px;top:1317.0px;font-size:10px;color:#3a3010;font-weight:bold;">Peak</div>
<div style="left:1276.0px;top:1166.0px;width:38.0px;height:50.0px;background:#37314c;"></div>
<svg style="left:0;top:0;overflow:visible" width="1" height="1"><path d="M1286.01 1194.49 A12 12 0 1 1 1302.99 1194.49" stroke="#1c1830" stroke-width="2.6" fill="none"/><path d="M1294.50 1186.00 L1294.50 1174.00" stroke="#1c1830" stroke-width="2" fill="none"/></svg>
<div class="t" style="left:1273.0px;top:1200.0px;font-size:10px;color:#e6e2ee;font-weight:bold;">0.00 dB</div>
<div style="left:1276.0px;top:1214.0px;width:38.0px;height:50.0px;background:#37314c;"></div>
<svg style="left:0;top:0;overflow:visible" width="1" height="1"><path d="M1286.01 1242.49 A12 12 0 1 1 1302.99 1242.49" stroke="#1c1830" stroke-width="2.6" fill="none"/><path d="M1294.50 1234.00 L1294.50 1222.00" stroke="#1c1830" stroke-width="2" fill="none"/></svg>
<div class="t" style="left:1273.0px;top:1248.0px;font-size:10px;color:#e6e2ee;font-weight:bold;">0.00 dB</div>
<div style="left:1276.0px;top:1262.0px;width:38.0px;height:50.0px;background:#37314c;"></div>
<svg style="left:0;top:0;overflow:visible" width="1" height="1"><path d="M1286.01 1290.49 A12 12 0 1 1 1302.99 1290.49" stroke="#1c1830" stroke-width="2.6" fill="none"/><path d="M1294.50 1282.00 L1294.50 1270.00" stroke="#1c1830" stroke-width="2" fill="none"/></svg>
<div class="t" style="left:1273.0px;top:1296.0px;font-size:10px;color:#e6e2ee;font-weight:bold;">0.00 dB</div>
<div style="left:1322.0px;top:1151.0px;width:395.0px;height:177.0px;background:#18142a;"></div>
<div class="t" style="left:1328.0px;top:1158.0px;font-size:10px;color:#e6e2ee;font-weight:bold;">Below</div>
<div class="t" style="left:1604.0px;top:1158.0px;font-size:10px;color:#e6e2ee;font-weight:bold;">Above</div>
<div class="t" style="left:1664.0px;top:1158.0px;font-size:10px;color:#e6e2ee;font-weight:bold;">Att/Rel</div>
<div class="t" style="left:1328.0px;top:1177.0px;font-size:10px;color:#d8d070;font-weight:normal;">-60.0 dB</div>
<div class="t" style="left:1328.0px;top:1195.0px;font-size:10px;color:#d8d070;font-weight:normal;">1 : 1.00</div>
<div class="t" style="left:1604.0px;top:1177.0px;font-size:10px;color:#d8d070;font-weight:normal;">-20.0 dB</div>
<div class="t" style="left:1604.0px;top:1195.0px;font-size:10px;color:#d8d070;font-weight:normal;">1 : 1.00</div>
<div class="t" style="left:1664.0px;top:1177.0px;font-size:10px;color:#d8d070;font-weight:normal;">5.00 ms</div>
<div class="t" style="left:1664.0px;top:1195.0px;font-size:10px;color:#d8d070;font-weight:normal;">100 ms</div>
<div class="t" style="left:1328.0px;top:1226.0px;font-size:10px;color:#70d0c0;font-weight:normal;">-60.0 dB</div>
<div class="t" style="left:1328.0px;top:1244.0px;font-size:10px;color:#70d0c0;font-weight:normal;">1 : 1.00</div>
<div class="t" style="left:1604.0px;top:1226.0px;font-size:10px;color:#70d0c0;font-weight:normal;">-20.0 dB</div>
<div class="t" style="left:1604.0px;top:1244.0px;font-size:10px;color:#70d0c0;font-weight:normal;">1 : 1.00</div>
<div class="t" style="left:1664.0px;top:1226.0px;font-size:10px;color:#70d0c0;font-weight:normal;">10.0 ms</div>
<div class="t" style="left:1664.0px;top:1244.0px;font-size:10px;color:#70d0c0;font-weight:normal;">200 ms</div>
<div class="t" style="left:1328.0px;top:1276.0px;font-size:10px;color:#e08050;font-weight:normal;">-13.6 dB</div>
<div class="t" style="left:1328.0px;top:1294.0px;font-size:10px;color:#e08050;font-weight:normal;">1 : 2.90</div>
<div class="t" style="left:1604.0px;top:1276.0px;font-size:10px;color:#e08050;font-weight:normal;">-12.0 dB</div>
<div class="t" style="left:1604.0px;top:1294.0px;font-size:10px;color:#e08050;font-weight:normal;">1 : Inf</div>
<div class="t" style="left:1664.0px;top:1276.0px;font-size:10px;color:#e08050;font-weight:normal;">60.0 ms</div>
<div class="t" style="left:1664.0px;top:1294.0px;font-size:10px;color:#e08050;font-weight:normal;">300 ms</div>
<div style="left:1381.0px;top:1160.0px;width:215.0px;height:155.0px;background:#16122a;border:2px solid #2a2644"></div>
<div style="left:1384.0px;top:1170.0px;width:48.0px;height:2.0px;background:#33304e;"></div>
<div style="left:1543.0px;top:1170.0px;width:49.0px;height:2.0px;background:#33304e;"></div>
<div style="left:1384.0px;top:1210.0px;width:48.0px;height:2.0px;background:#33304e;"></div>
<div style="left:1543.0px;top:1210.0px;width:49.0px;height:2.0px;background:#33304e;"></div>
<div style="left:1384.0px;top:1218.0px;width:48.0px;height:2.0px;background:#33304e;"></div>
<div style="left:1543.0px;top:1218.0px;width:49.0px;height:2.0px;background:#33304e;"></div>
<div style="left:1384.0px;top:1258.0px;width:48.0px;height:2.0px;background:#33304e;"></div>
<div style="left:1543.0px;top:1258.0px;width:49.0px;height:2.0px;background:#33304e;"></div>
<div style="left:1384.0px;top:1267.0px;width:48.0px;height:2.0px;background:#33304e;"></div>
<div style="left:1543.0px;top:1267.0px;width:49.0px;height:2.0px;background:#33304e;"></div>
<div style="left:1384.0px;top:1307.0px;width:48.0px;height:2.0px;background:#33304e;"></div>
<div style="left:1543.0px;top:1307.0px;width:49.0px;height:2.0px;background:#33304e;"></div>
<div style="left:1384.0px;top:1170.0px;width:2.0px;height:138.0px;background:#2c2848;"></div>
<div style="left:1431.0px;top:1170.0px;width:2.0px;height:138.0px;background:#2c2848;"></div>
<div style="left:1543.0px;top:1170.0px;width:2.0px;height:138.0px;background:#2c2848;"></div>
<div style="left:1591.0px;top:1170.0px;width:2.0px;height:138.0px;background:#2c2848;"></div>
<div style="left:1435.0px;top:1168.0px;width:3.0px;height:92.0px;background:#211d38;"></div>
<div style="left:1459.0px;top:1168.0px;width:3.0px;height:92.0px;background:#211d38;"></div>
<div style="left:1489.0px;top:1168.0px;width:3.0px;height:92.0px;background:#211d38;"></div>
<div style="left:1515.0px;top:1168.0px;width:3.0px;height:92.0px;background:#211d38;"></div>
<div style="left:1541.0px;top:1168.0px;width:3.0px;height:92.0px;background:#211d38;"></div>
<div style="left:1566.0px;top:1168.0px;width:3.0px;height:92.0px;background:#211d38;"></div>
<div style="left:1392.0px;top:1265.0px;width:161.0px;height:45.0px;background:#222030;"></div>
<div style="left:1472.0px;top:1271.0px;width:70.0px;height:39.0px;background:#2a2836;"></div>
<div style="left:1554.0px;top:1268.0px;width:3.0px;height:42.0px;background:#3a3850;"></div>
<div style="left:1565.0px;top:1268.0px;width:2.0px;height:42.0px;background:#3a3850;"></div>
<div style="left:1570.0px;top:1278.0px;width:16.0px;height:20.0px;background:#2a1a30;"></div>
<div class="t" style="left:1387.0px;top:1296.0px;font-size:10px;color:#e8c060;font-weight:normal;">+36.1</div>
<div class="t" style="left:1377.0px;top:1320.0px;font-size:10px;color:#e0e0ea;font-weight:normal;">80</div>
<div class="t" style="left:1403.5px;top:1320.0px;font-size:10px;color:#e0e0ea;font-weight:normal;">70</div>
<div class="t" style="left:1430.0px;top:1320.0px;font-size:10px;color:#e0e0ea;font-weight:normal;">60</div>
<div class="t" style="left:1456.5px;top:1320.0px;font-size:10px;color:#e0e0ea;font-weight:normal;">50</div>
<div class="t" style="left:1483.0px;top:1320.0px;font-size:10px;color:#e0e0ea;font-weight:normal;">40</div>
<div class="t" style="left:1509.5px;top:1320.0px;font-size:10px;color:#e0e0ea;font-weight:normal;">30</div>
<div class="t" style="left:1536.0px;top:1320.0px;font-size:10px;color:#e0e0ea;font-weight:normal;">20</div>
<div class="t" style="left:1562.5px;top:1320.0px;font-size:10px;color:#e0e0ea;font-weight:normal;">10</div>
<div class="t" style="left:1589.0px;top:1320.0px;font-size:10px;color:#e0e0ea;font-weight:normal;">0</div>
<div class="t" style="left:1729.0px;top:1155.0px;font-size:11px;color:#e6e2ee;font-weight:bold;">Output</div>
<div class="t" style="left:1783.0px;top:1155.0px;font-size:11px;color:#e6e2ee;font-weight:bold;">Output</div>
<svg style="left:0;top:0;overflow:visible" width="1" height="1"><path d="M1739.51 1194.49 A12 12 0 1 1 1756.49 1194.49" stroke="#1c1830" stroke-width="2.6" fill="none"/><path d="M1748.00 1186.00 L1748.00 1174.00" stroke="#1c1830" stroke-width="2" fill="none"/></svg>
<div class="t" style="left:1727.0px;top:1200.0px;font-size:10px;color:#e6e2ee;font-weight:bold;">0.00 dB</div>
<svg style="left:0;top:0;overflow:visible" width="1" height="1"><path d="M1739.51 1244.49 A12 12 0 1 1 1756.49 1244.49" stroke="#1c1830" stroke-width="2.6" fill="none"/><path d="M1748.00 1236.00 L1748.00 1224.00" stroke="#1c1830" stroke-width="2" fill="none"/></svg>
<div class="t" style="left:1727.0px;top:1250.0px;font-size:10px;color:#e6e2ee;font-weight:bold;">0.00 dB</div>
<svg style="left:0;top:0;overflow:visible" width="1" height="1"><path d="M1739.51 1292.49 A12 12 0 1 1 1756.49 1292.49" stroke="#1c1830" stroke-width="2.6" fill="none"/><path d="M1748.00 1284.00 L1748.00 1272.00" stroke="#1c1830" stroke-width="2" fill="none"/></svg>
<div class="t" style="left:1727.0px;top:1298.0px;font-size:10px;color:#e6e2ee;font-weight:bold;">0.00 dB</div>
<svg style="left:0;top:0;overflow:visible" width="1" height="1"><path d="M1793.51 1194.49 A12 12 0 1 1 1810.49 1194.49" stroke="#1c1830" stroke-width="2.6" fill="none"/><path d="M1802.00 1186.00 L1802.00 1174.00" stroke="#1c1830" stroke-width="2" fill="none"/></svg>
<div class="t" style="left:1781.0px;top:1200.0px;font-size:10px;color:#e6e2ee;font-weight:bold;">0.00 dB</div>
<div class="t" style="left:1789.0px;top:1220.0px;font-size:10px;color:#e6e2ee;font-weight:bold;">Time</div>
<svg style="left:0;top:0;overflow:visible" width="1" height="1"><path d="M1793.51 1259.49 A12 12 0 1 1 1810.49 1259.49" stroke="#1c1830" stroke-width="2.6" fill="none"/><path d="M1802.00 1251.00 L1802.00 1239.00" stroke="#1c1830" stroke-width="2" fill="none"/></svg>
<div class="t" style="left:1787.0px;top:1265.0px;font-size:10px;color:#e6e2ee;font-weight:bold;">100 %</div>
<div class="t" style="left:1780.0px;top:1282.0px;font-size:10px;color:#e6e2ee;font-weight:bold;">Amount</div>
<svg style="left:0;top:0;overflow:visible" width="1" height="1"><path d="M1793.51 1315.49 A12 12 0 1 1 1810.49 1315.49" stroke="#1c1830" stroke-width="2.6" fill="none"/><path d="M1793.51 1315.49 A12 12 0 1 1 1810.49 1315.49" stroke="#d8d070" stroke-width="2.6" fill="none"/><path d="M1802.00 1307.00 L1810.49 1315.49" stroke="#1c1830" stroke-width="2" fill="none"/></svg>
<div class="t" style="left:1787.0px;top:1321.0px;font-size:10px;color:#e6e2ee;font-weight:bold;">100 %</div>
<div style="left:1836.0px;top:1151.0px;width:14.0px;height:177.0px;background:#2a3450;"></div>
<div style="left:1862.0px;top:1130.0px;width:265.0px;height:198.0px;background:#38324c;"></div>
<div style="left:1862.0px;top:1130.0px;width:265.0px;height:21.0px;background:#4a5a80;"></div>
<svg style="left:1865px;top:1132px" width="16" height="16"><circle cx="8" cy="8" r="7.2" fill="#b4ec6a" stroke="#3a5a28" stroke-width="0.8"/><circle cx="8" cy="8" r="4" fill="none" stroke="#8ac050" stroke-width="1.2"/></svg>
<svg style="left:1882px;top:1132px" width="16" height="16"><circle cx="8" cy="8" r="7.5" fill="#1b1830"/><path d="M4 5 L12 5 L8 12Z" fill="#e8e8f0"/></svg>
<svg style="left:1899px;top:1132px" width="16" height="16"><circle cx="8" cy="8" r="7.5" fill="#1b1830"/><path d="M4.5 11.5 L9 7" stroke="#e8e8f0" stroke-width="2"/><circle cx="10" cy="6" r="2.3" fill="none" stroke="#e8e8f0" stroke-width="1.5"/></svg>
<div class="t" style="left:1920.0px;top:1134.0px;font-size:11px;color:#e8e8f0;font-weight:bold;">Nu Compressor</div>
<svg style="left:2089px;top:1132px" width="16" height="16"><circle cx="8" cy="8" r="7.5" fill="#1b1830"/><path d="M4.5 9.5 A3.8 3.8 0 0 1 10 4.6 M11.5 6.5 A3.8 3.8 0 0 1 6 11.4" stroke="#e8e8f0" stroke-width="1.6" fill="none"/><path d="M9 3 L11.5 5 L9 6.5Z M7 9.5 L4.5 11 L7 13Z" fill="#e8e8f0"/></svg>
<svg style="left:2107px;top:1132px" width="16" height="16"><rect x="0.5" y="0.5" width="15" height="15" rx="4" fill="#1b1830"/><path d="M4 4 h6 l2 2 v6 h-8z" fill="#f0f0f8"/><rect x="6" y="4" width="3" height="3" fill="#1b1830"/></svg>
<div style="left:1866.0px;top:1151.0px;width:94.0px;height:177.0px;background:#2c3a5e;"></div>
<div class="t" style="left:1868.0px;top:1155.0px;font-size:10px;color:#e6e2ee;font-weight:bold;">Sidechain</div>
<div style="left:1868.0px;top:1167.0px;width:82.0px;height:14.0px;background:#221d34;"></div>
<div class="t" style="left:1870.0px;top:1170.0px;font-size:11px;color:#e6e2ee;font-weight:bold;">No Input</div>
<div class="t" style="left:1938.0px;top:1170.0px;font-size:10px;color:#e6e2ee;font-weight:bold;">▾</div>
<div style="left:1868.0px;top:1186.0px;width:82.0px;height:12.0px;background:#3a3450;"></div>
<div class="t" style="left:1896.0px;top:1208.0px;font-size:10px;color:#e6e2ee;font-weight:bold;">Gain</div>
<svg style="left:0;top:0;overflow:visible" width="1" height="1"><path d="M1898.51 1242.49 A12 12 0 1 1 1915.49 1242.49" stroke="#3a3860" stroke-width="2.6" fill="none"/><path d="M1898.51 1242.49 A12 12 0 0 1 1901.00 1223.61" stroke="#d8d8e0" stroke-width="2.6" fill="none"/><path d="M1907.00 1234.00 L1901.00 1223.61" stroke="#1c1830" stroke-width="2" fill="none"/></svg>
<div class="t" style="left:1888.0px;top:1247.0px;font-size:10px;color:#e6e2ee;font-weight:bold;">0.00 dB</div>
<div class="t" style="left:1900.0px;top:1264.0px;font-size:10px;color:#e6e2ee;font-weight:bold;">Mix</div>
<svg style="left:0;top:0;overflow:visible" width="1" height="1"><path d="M1898.51 1297.49 A12 12 0 1 1 1915.49 1297.49" stroke="#3a3860" stroke-width="2.6" fill="none"/><path d="M1898.51 1297.49 A12 12 0 1 1 1915.49 1297.49" stroke="#d8d8e0" stroke-width="2.6" fill="none"/><path d="M1907.00 1289.00 L1915.49 1297.49" stroke="#1c1830" stroke-width="2" fill="none"/></svg>
<div class="t" style="left:1892.0px;top:1303.0px;font-size:10px;color:#e6e2ee;font-weight:bold;">100 %</div>
<div style="left:1868.0px;top:1318.0px;width:82.0px;height:10.0px;background:#221d34;"></div>
<div class="t" style="left:1895.0px;top:1320.0px;font-size:10px;color:#a0a0b8;font-weight:bold;">Mute</div>
<div style="left:1966.0px;top:1158.0px;width:152.0px;height:156.0px;background:#16122a;"></div>
<div style="left:1967px;top:1298px;width:10px;height:10px;border:2px solid #d8e0a0;border-radius:50%"></div>
<div style="left:1966.0px;top:1318.0px;width:74.0px;height:12.0px;background:#2a2540;"></div>
<div class="t" style="left:1968.0px;top:1320.0px;font-size:11px;color:#e6e2ee;font-weight:bold;">none</div>
<div class="t" style="left:2030.0px;top:1320.0px;font-size:10px;color:#e6e2ee;font-weight:bold;">▾</div>
<div style="left:2045.0px;top:1318.0px;width:73.0px;height:12.0px;background:#2a2540;"></div>
<div class="t" style="left:2047.0px;top:1320.0px;font-size:11px;color:#e6e2ee;font-weight:bold;">none</div>
<div class="t" style="left:2108.0px;top:1320.0px;font-size:10px;color:#e6e2ee;font-weight:bold;">▾</div>
<div style="left:2143.0px;top:1130.0px;width:229.0px;height:198.0px;background:#2c3a5e;"></div>
<div class="t" style="left:2241.0px;top:1228.0px;font-size:12px;color:#e8e6f0;font-weight:normal;">在这里加载音频效果器</div>
</body></html>
